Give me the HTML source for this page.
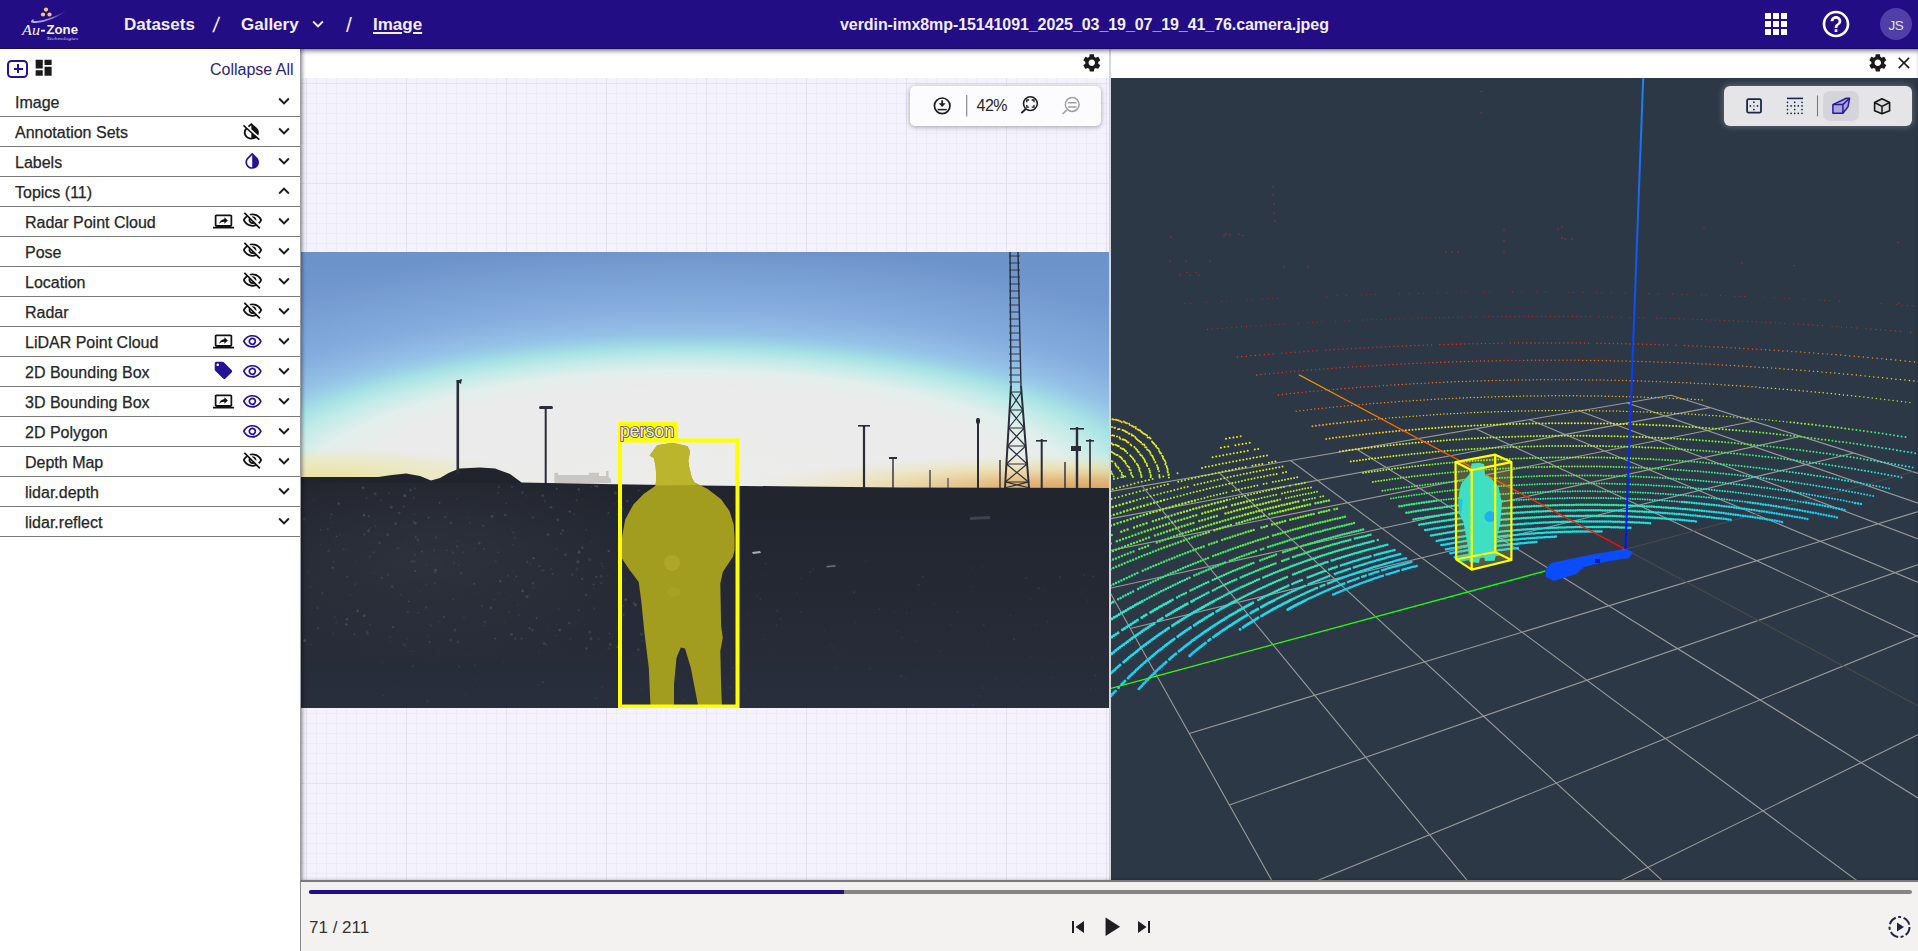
<!DOCTYPE html><html><head><meta charset="utf-8"><style>
*{box-sizing:border-box;margin:0;padding:0}
html,body{width:1918px;height:951px;overflow:hidden;background:#fff;font-family:"Liberation Sans",sans-serif;position:relative}
.abs{position:absolute}
#hdr{left:0;top:0;width:1918px;height:49px;background:#230d84;border-bottom:1px solid #1a0a58}
.bc{position:absolute;top:2px;height:48px;line-height:46px;color:#f1eefc;font-size:17px;font-weight:700;white-space:nowrap}
#side{left:0;top:49px;width:300px;height:902px;background:#fff}
.row{position:absolute;left:0;width:300px;height:30px;font-size:16px;line-height:30px;color:#262626;white-space:nowrap;-webkit-text-stroke:0.25px #262626}
.row .ln{position:absolute;left:0;top:30px;width:300px;height:1px;background:#7a7a7a}
.row span.t{position:absolute;left:15px;top:1.5px}
.row.sub span.t{left:25px}
#main{left:300px;top:49px;width:1618px;height:831px;background:#fff}
#grid{left:301px;top:78px;width:808px;height:802px;background-color:#f4f2fd;
 background-image:linear-gradient(#e3e0f0 1px,transparent 1px),linear-gradient(90deg,#e3e0f0 1px,transparent 1px),linear-gradient(#ecebf7 1px,transparent 1px),linear-gradient(90deg,#ecebf7 1px,transparent 1px);
 background-size:100px 100px,100px 100px,10px 10px,10px 10px;background-position:5px 5px,5px 5px,5px 5px,5px 5px}
#view3d{left:1111px;top:78px;width:807px;height:802px;background:#2c3845;overflow:hidden}
#divider{left:1109px;top:49px;width:2px;height:831px;background:#d3d6dc}
#shadowL{left:300px;top:49px;width:1618px;height:831px;box-shadow:inset 3px 0 4px -1px rgba(0,0,0,.45),inset 0 4px 5px -2px rgba(40,30,90,.5);pointer-events:none}
#foot{left:300px;top:880px;width:1618px;height:71px;background:#f3f2f0;border-top:2px solid #7b7b7b;border-left:1px solid #8a8a8a}
</style></head><body>
<div id="hdr" class="abs">
<div class="bc" style="left:124px">Datasets</div>
<div class="bc" style="left:213px;font-weight:400;font-size:21px;transform:skewX(-8deg)">/</div>
<div class="bc" style="left:241px">Gallery</div>
<div class="bc" style="left:346px;font-weight:400;font-size:21px">/</div>
<div class="bc" style="left:373px;text-decoration:underline;text-underline-offset:2px;text-decoration-thickness:2px">Image</div>
<svg class="abs" style="left:307px;top:13px" width="22" height="22" viewBox="0 0 24 24" preserveAspectRatio="none"><path fill="#f1eefc" d="M16.59 8.59L12 13.17 7.41 8.59 6 10l6 6 6-6z"/></svg>
<div class="bc" style="left:840px;top:2px;font-size:16px;letter-spacing:-0.07px">verdin-imx8mp-15141091_2025_03_19_07_19_41_76.camera.jpeg</div>
<div class="abs" style="left:1765px;top:13px;width:6px;height:6px;background:#fff"></div>
<div class="abs" style="left:1773px;top:13px;width:6px;height:6px;background:#fff"></div>
<div class="abs" style="left:1781px;top:13px;width:6px;height:6px;background:#fff"></div>
<div class="abs" style="left:1765px;top:21px;width:6px;height:6px;background:#fff"></div>
<div class="abs" style="left:1773px;top:21px;width:6px;height:6px;background:#fff"></div>
<div class="abs" style="left:1781px;top:21px;width:6px;height:6px;background:#fff"></div>
<div class="abs" style="left:1765px;top:29px;width:6px;height:6px;background:#fff"></div>
<div class="abs" style="left:1773px;top:29px;width:6px;height:6px;background:#fff"></div>
<div class="abs" style="left:1781px;top:29px;width:6px;height:6px;background:#fff"></div>
<svg class="abs" style="left:1820px;top:8px" width="32" height="32" viewBox="0 0 24 24" preserveAspectRatio="none"><path fill="#ffffff" d="M11 18h2v-2h-2v2zm1-16C6.48 2 2 6.48 2 12s4.48 10 10 10 10-4.48 10-10S17.52 2 12 2zm0 18c-4.41 0-8-3.59-8-8s3.59-8 8-8 8 3.59 8 8-3.59 8-8 8zm0-14c-2.21 0-4 1.79-4 4h2c0-1.1.9-2 2-2s2 .9 2 2c0 2-3 1.75-3 5h2c0-2.25 3-2.5 3-5 0-2.21-1.79-4-4-4z"/></svg>
<div class="abs" style="left:1880px;top:8px;width:32px;height:32px;border-radius:50%;background:#4f3fa6;color:#e6e2f6;font-size:13.5px;line-height:36px;text-align:center;letter-spacing:-0.3px">JS</div>
</div>
<svg class="abs" style="left:15px;top:2px" width="70" height="44" viewBox="15 2 70 44">
<defs><linearGradient id="sw" x1="0" y1="0" x2="1" y2="0"><stop offset="0" stop-color="#b8b0f0"/><stop offset="0.6" stop-color="#8c80d8"/><stop offset="1" stop-color="#5a4cc0" stop-opacity="0.3"/></linearGradient></defs>
<path d="M32.5 19.5 C30 21.5 30.5 23.2 36 23 C46 22.6 60 16 66.5 10.5 C60 14.5 46 20.5 37 21 C33.5 21.2 32.6 20.6 33.8 19 Z" fill="url(#sw)"/>
<circle cx="46" cy="9.6" r="2.1" fill="#f2cc6a"/><circle cx="43" cy="14.5" r="2.1" fill="#f2cc6a"/><circle cx="49.5" cy="14.5" r="2.1" fill="#f2cc6a"/>
<text x="22" y="34.9" font-family="Liberation Serif" font-style="italic" font-size="15" fill="#f4f2ff" textLength="18" lengthAdjust="spacingAndGlyphs">Au</text>
<rect x="41" y="29.8" width="4" height="1.8" fill="#f4f2ff"/>
<text x="46.5" y="34.4" font-family="Liberation Sans" font-weight="700" font-size="12.8" fill="#f4f2ff" textLength="31.5" lengthAdjust="spacingAndGlyphs">Zone</text>
<text x="46.5" y="40.4" font-family="Liberation Serif" font-style="italic" font-size="5" fill="#c8c2ee" textLength="31.5" lengthAdjust="spacingAndGlyphs">Technologies</text>
</svg>
<div id="side" class="abs">
</div>
<div class="abs" style="left:7px;top:60px;width:21px;height:17.5px;border:2px solid #24129a;border-radius:4.5px"></div>
<div class="abs" style="left:13.5px;top:67.5px;width:9px;height:2px;background:#24129a"></div>
<div class="abs" style="left:17px;top:64px;width:2px;height:9px;background:#24129a"></div>
<svg class="abs" style="left:33.3px;top:57.3px" width="21.3" height="21.3" viewBox="0 0 24 24" preserveAspectRatio="none"><path fill="#1a1a1a" d="M3 13h8V3H3v10zm0 8h8v-6H3v6zm10 0h8V11h-8v10zm0-18v6h8V3h-8z"/></svg>
<div class="abs" style="left:210px;top:58px;font-size:16px;color:#2d2478;line-height:24px;white-space:nowrap">Collapse All</div>
<div class="row" style="top:86px"><span class="t">Image</span><div class="ln"></div></div>
<svg class="abs" style="left:273px;top:90px" width="22" height="22" viewBox="0 0 24 24" preserveAspectRatio="none"><path fill="#1a1a1a" d="M16.59 8.59L12 13.17 7.41 8.59 6 10l6 6 6-6z"/></svg>
<div class="row" style="top:116px"><span class="t">Annotation Sets</span><div class="ln"></div></div>
<svg class="abs" style="left:273px;top:120px" width="22" height="22" viewBox="0 0 24 24" preserveAspectRatio="none"><path fill="#1a1a1a" d="M16.59 8.59L12 13.17 7.41 8.59 6 10l6 6 6-6z"/></svg>
<svg class="abs" style="left:240.4px;top:121px" width="22.7" height="20.5" viewBox="0 0 24 24" preserveAspectRatio="none"><path fill="#111" d="M20.65 20.87l-2.35-2.35-6.3-6.29-3.56-3.57-1.42-1.41L4.27 4.5 3 5.77l2.78 2.78c-2.55 3.14-2.36 7.76.56 10.69C7.9 20.8 9.95 21.58 12 21.58c1.79 0 3.57-.59 5.03-1.78l2.7 2.7L21 21.23l-.35-.36zM12 19.59c-1.6 0-3.11-.62-4.24-1.76C6.62 16.69 6 15.19 6 13.59c0-1.32.43-2.56 1.21-3.59L12 14.77v4.82zM12 5.1v4.58l7.25 7.26c1.37-2.96.84-6.57-1.6-9.01L12 2.27l-3.7 3.7 1.41 1.41L12 5.1z"/></svg>
<div class="row" style="top:146px"><span class="t">Labels</span><div class="ln"></div></div>
<svg class="abs" style="left:273px;top:150px" width="22" height="22" viewBox="0 0 24 24" preserveAspectRatio="none"><path fill="#1a1a1a" d="M16.59 8.59L12 13.17 7.41 8.59 6 10l6 6 6-6z"/></svg>
<svg class="abs" style="left:242.4px;top:150.5px" width="20.4" height="20.4" viewBox="0 0 24 24" preserveAspectRatio="none"><path fill="#24129a" d="M12 4.81V19c-3.31 0-6-2.63-6-5.87 0-1.56.62-3.03 1.75-4.14L12 4.81M6.35 7.56C4.9 8.99 4 10.96 4 13.13 4 17.48 7.58 21 12 21s8-3.52 8-7.87c0-2.17-.9-4.15-2.35-5.57L12 2 6.35 7.56z"/></svg>
<div class="row" style="top:176px"><span class="t">Topics (11)</span><div class="ln"></div></div>
<svg class="abs" style="left:273px;top:180px" width="22" height="22" viewBox="0 0 24 24" preserveAspectRatio="none"><path fill="#1a1a1a" d="M12 8l-6 6 1.41 1.41L12 10.83l4.59 4.58L18 14z"/></svg>
<div class="row sub" style="top:206px"><span class="t">Radar Point Cloud</span><div class="ln"></div></div>
<svg class="abs" style="left:273px;top:210px" width="22" height="22" viewBox="0 0 24 24" preserveAspectRatio="none"><path fill="#1a1a1a" d="M16.59 8.59L12 13.17 7.41 8.59 6 10l6 6 6-6z"/></svg>
<svg class="abs" style="left:213px;top:210.5px" width="21" height="21" viewBox="0 0 24 24" preserveAspectRatio="none"><path fill="#111" d="M20 18c1.1 0 1.99-.9 1.99-2L22 6c0-1.11-.9-2-2-2H4c-1.11 0-2 .89-2 2v10c0 1.1.89 2 2 2H0v2h24v-2h-4zM4 16V6h16v10.01L4 16zm9-6.87c-3.89.54-5.44 3.2-6 5.87 1.39-1.87 3.22-2.72 6-2.72v2.19l4-3.74L13 7v2.13z"/></svg>
<svg class="abs" style="left:242.3px;top:209.6px" width="21" height="21" viewBox="0 0 24 24" preserveAspectRatio="none"><path fill="#111" d="M12 6c3.79 0 7.17 2.13 8.82 5.5-.59 1.22-1.42 2.27-2.41 3.12l1.41 1.41c1.39-1.23 2.49-2.77 3.18-4.53C21.27 7.11 17 4 12 4c-1.27 0-2.49.2-3.64.57l1.65 1.65C10.66 6.09 11.32 6 12 6zm-1.07 1.14L13 9.21c.57.25 1.03.71 1.28 1.28l2.07 2.07c.08-.34.14-.7.14-1.07C16.5 9.01 14.48 7 12 7c-.37 0-.72.05-1.07.14zM2.01 3.87l2.68 2.68C3.06 7.83 1.78 9.53 1 11.5 2.73 15.89 7 19 12 19c1.52 0 2.98-.29 4.32-.82l3.42 3.42 1.41-1.41L3.42 2.45 2.01 3.87zm7.5 7.5l2.61 2.61c-.04.01-.08.02-.12.02-1.38 0-2.5-1.12-2.5-2.5 0-.05.01-.08.01-.13zm-3.4-3.4l1.75 1.75c-.23.55-.36 1.15-.36 1.78 0 2.48 2.02 4.5 4.5 4.5.63 0 1.23-.13 1.77-.36l.98.98c-.88.24-1.8.38-2.75.38-3.79 0-7.17-2.13-8.82-5.5.7-1.43 1.72-2.61 2.93-3.53z"/></svg>
<div class="row sub" style="top:236px"><span class="t">Pose</span><div class="ln"></div></div>
<svg class="abs" style="left:273px;top:240px" width="22" height="22" viewBox="0 0 24 24" preserveAspectRatio="none"><path fill="#1a1a1a" d="M16.59 8.59L12 13.17 7.41 8.59 6 10l6 6 6-6z"/></svg>
<svg class="abs" style="left:242.3px;top:239.6px" width="21" height="21" viewBox="0 0 24 24" preserveAspectRatio="none"><path fill="#111" d="M12 6c3.79 0 7.17 2.13 8.82 5.5-.59 1.22-1.42 2.27-2.41 3.12l1.41 1.41c1.39-1.23 2.49-2.77 3.18-4.53C21.27 7.11 17 4 12 4c-1.27 0-2.49.2-3.64.57l1.65 1.65C10.66 6.09 11.32 6 12 6zm-1.07 1.14L13 9.21c.57.25 1.03.71 1.28 1.28l2.07 2.07c.08-.34.14-.7.14-1.07C16.5 9.01 14.48 7 12 7c-.37 0-.72.05-1.07.14zM2.01 3.87l2.68 2.68C3.06 7.83 1.78 9.53 1 11.5 2.73 15.89 7 19 12 19c1.52 0 2.98-.29 4.32-.82l3.42 3.42 1.41-1.41L3.42 2.45 2.01 3.87zm7.5 7.5l2.61 2.61c-.04.01-.08.02-.12.02-1.38 0-2.5-1.12-2.5-2.5 0-.05.01-.08.01-.13zm-3.4-3.4l1.75 1.75c-.23.55-.36 1.15-.36 1.78 0 2.48 2.02 4.5 4.5 4.5.63 0 1.23-.13 1.77-.36l.98.98c-.88.24-1.8.38-2.75.38-3.79 0-7.17-2.13-8.82-5.5.7-1.43 1.72-2.61 2.93-3.53z"/></svg>
<div class="row sub" style="top:266px"><span class="t">Location</span><div class="ln"></div></div>
<svg class="abs" style="left:273px;top:270px" width="22" height="22" viewBox="0 0 24 24" preserveAspectRatio="none"><path fill="#1a1a1a" d="M16.59 8.59L12 13.17 7.41 8.59 6 10l6 6 6-6z"/></svg>
<svg class="abs" style="left:242.3px;top:269.6px" width="21" height="21" viewBox="0 0 24 24" preserveAspectRatio="none"><path fill="#111" d="M12 6c3.79 0 7.17 2.13 8.82 5.5-.59 1.22-1.42 2.27-2.41 3.12l1.41 1.41c1.39-1.23 2.49-2.77 3.18-4.53C21.27 7.11 17 4 12 4c-1.27 0-2.49.2-3.64.57l1.65 1.65C10.66 6.09 11.32 6 12 6zm-1.07 1.14L13 9.21c.57.25 1.03.71 1.28 1.28l2.07 2.07c.08-.34.14-.7.14-1.07C16.5 9.01 14.48 7 12 7c-.37 0-.72.05-1.07.14zM2.01 3.87l2.68 2.68C3.06 7.83 1.78 9.53 1 11.5 2.73 15.89 7 19 12 19c1.52 0 2.98-.29 4.32-.82l3.42 3.42 1.41-1.41L3.42 2.45 2.01 3.87zm7.5 7.5l2.61 2.61c-.04.01-.08.02-.12.02-1.38 0-2.5-1.12-2.5-2.5 0-.05.01-.08.01-.13zm-3.4-3.4l1.75 1.75c-.23.55-.36 1.15-.36 1.78 0 2.48 2.02 4.5 4.5 4.5.63 0 1.23-.13 1.77-.36l.98.98c-.88.24-1.8.38-2.75.38-3.79 0-7.17-2.13-8.82-5.5.7-1.43 1.72-2.61 2.93-3.53z"/></svg>
<div class="row sub" style="top:296px"><span class="t">Radar</span><div class="ln"></div></div>
<svg class="abs" style="left:273px;top:300px" width="22" height="22" viewBox="0 0 24 24" preserveAspectRatio="none"><path fill="#1a1a1a" d="M16.59 8.59L12 13.17 7.41 8.59 6 10l6 6 6-6z"/></svg>
<svg class="abs" style="left:242.3px;top:299.6px" width="21" height="21" viewBox="0 0 24 24" preserveAspectRatio="none"><path fill="#111" d="M12 6c3.79 0 7.17 2.13 8.82 5.5-.59 1.22-1.42 2.27-2.41 3.12l1.41 1.41c1.39-1.23 2.49-2.77 3.18-4.53C21.27 7.11 17 4 12 4c-1.27 0-2.49.2-3.64.57l1.65 1.65C10.66 6.09 11.32 6 12 6zm-1.07 1.14L13 9.21c.57.25 1.03.71 1.28 1.28l2.07 2.07c.08-.34.14-.7.14-1.07C16.5 9.01 14.48 7 12 7c-.37 0-.72.05-1.07.14zM2.01 3.87l2.68 2.68C3.06 7.83 1.78 9.53 1 11.5 2.73 15.89 7 19 12 19c1.52 0 2.98-.29 4.32-.82l3.42 3.42 1.41-1.41L3.42 2.45 2.01 3.87zm7.5 7.5l2.61 2.61c-.04.01-.08.02-.12.02-1.38 0-2.5-1.12-2.5-2.5 0-.05.01-.08.01-.13zm-3.4-3.4l1.75 1.75c-.23.55-.36 1.15-.36 1.78 0 2.48 2.02 4.5 4.5 4.5.63 0 1.23-.13 1.77-.36l.98.98c-.88.24-1.8.38-2.75.38-3.79 0-7.17-2.13-8.82-5.5.7-1.43 1.72-2.61 2.93-3.53z"/></svg>
<div class="row sub" style="top:326px"><span class="t">LiDAR Point Cloud</span><div class="ln"></div></div>
<svg class="abs" style="left:273px;top:330px" width="22" height="22" viewBox="0 0 24 24" preserveAspectRatio="none"><path fill="#1a1a1a" d="M16.59 8.59L12 13.17 7.41 8.59 6 10l6 6 6-6z"/></svg>
<svg class="abs" style="left:213px;top:330.5px" width="21" height="21" viewBox="0 0 24 24" preserveAspectRatio="none"><path fill="#111" d="M20 18c1.1 0 1.99-.9 1.99-2L22 6c0-1.11-.9-2-2-2H4c-1.11 0-2 .89-2 2v10c0 1.1.89 2 2 2H0v2h24v-2h-4zM4 16V6h16v10.01L4 16zm9-6.87c-3.89.54-5.44 3.2-6 5.87 1.39-1.87 3.22-2.72 6-2.72v2.19l4-3.74L13 7v2.13z"/></svg>
<svg class="abs" style="left:242.3px;top:330.6px" width="20.7" height="20.7" viewBox="0 0 24 24" preserveAspectRatio="none"><path fill="#24129a" d="M12 6.5c3.79 0 7.17 2.13 8.82 5.5-1.65 3.37-5.02 5.5-8.82 5.5S4.83 15.37 3.18 12C4.83 8.63 8.21 6.5 12 6.5m0-2C7 4.5 2.73 7.61 1 12c1.73 4.39 6 7.5 11 7.5s9.27-3.11 11-7.5c-1.73-4.39-6-7.5-11-7.5zm0 5c1.38 0 2.5 1.12 2.5 2.5s-1.12 2.5-2.5 2.5-2.5-1.12-2.5-2.5 1.12-2.5 2.5-2.5m0-2c-2.48 0-4.5 2.02-4.5 4.5s2.02 4.5 4.5 4.5 4.5-2.02 4.5-4.5-2.02-4.5-4.5-4.5z"/></svg>
<div class="row sub" style="top:356px"><span class="t">2D Bounding Box</span><div class="ln"></div></div>
<svg class="abs" style="left:273px;top:360px" width="22" height="22" viewBox="0 0 24 24" preserveAspectRatio="none"><path fill="#1a1a1a" d="M16.59 8.59L12 13.17 7.41 8.59 6 10l6 6 6-6z"/></svg>
<svg class="abs" style="left:213.1px;top:360.3px" width="20.8" height="20.8" viewBox="0 0 24 24" preserveAspectRatio="none"><path fill="#24129a" d="M21.41 11.58l-9-9C12.05 2.22 11.55 2 11 2H4c-1.1 0-2 .9-2 2v7c0 .55.22 1.05.59 1.42l9 9c.36.36.86.58 1.41.58.55 0 1.05-.22 1.41-.59l7-7c.37-.36.59-.86.59-1.41 0-.55-.23-1.06-.59-1.42zM5.5 7C4.67 7 4 6.33 4 5.5S4.67 4 5.5 4 7 4.67 7 5.5 6.33 7 5.5 7z"/></svg>
<svg class="abs" style="left:242.3px;top:360.6px" width="20.7" height="20.7" viewBox="0 0 24 24" preserveAspectRatio="none"><path fill="#24129a" d="M12 6.5c3.79 0 7.17 2.13 8.82 5.5-1.65 3.37-5.02 5.5-8.82 5.5S4.83 15.37 3.18 12C4.83 8.63 8.21 6.5 12 6.5m0-2C7 4.5 2.73 7.61 1 12c1.73 4.39 6 7.5 11 7.5s9.27-3.11 11-7.5c-1.73-4.39-6-7.5-11-7.5zm0 5c1.38 0 2.5 1.12 2.5 2.5s-1.12 2.5-2.5 2.5-2.5-1.12-2.5-2.5 1.12-2.5 2.5-2.5m0-2c-2.48 0-4.5 2.02-4.5 4.5s2.02 4.5 4.5 4.5 4.5-2.02 4.5-4.5-2.02-4.5-4.5-4.5z"/></svg>
<div class="row sub" style="top:386px"><span class="t">3D Bounding Box</span><div class="ln"></div></div>
<svg class="abs" style="left:273px;top:390px" width="22" height="22" viewBox="0 0 24 24" preserveAspectRatio="none"><path fill="#1a1a1a" d="M16.59 8.59L12 13.17 7.41 8.59 6 10l6 6 6-6z"/></svg>
<svg class="abs" style="left:213px;top:390.5px" width="21" height="21" viewBox="0 0 24 24" preserveAspectRatio="none"><path fill="#111" d="M20 18c1.1 0 1.99-.9 1.99-2L22 6c0-1.11-.9-2-2-2H4c-1.11 0-2 .89-2 2v10c0 1.1.89 2 2 2H0v2h24v-2h-4zM4 16V6h16v10.01L4 16zm9-6.87c-3.89.54-5.44 3.2-6 5.87 1.39-1.87 3.22-2.72 6-2.72v2.19l4-3.74L13 7v2.13z"/></svg>
<svg class="abs" style="left:242.3px;top:390.6px" width="20.7" height="20.7" viewBox="0 0 24 24" preserveAspectRatio="none"><path fill="#24129a" d="M12 6.5c3.79 0 7.17 2.13 8.82 5.5-1.65 3.37-5.02 5.5-8.82 5.5S4.83 15.37 3.18 12C4.83 8.63 8.21 6.5 12 6.5m0-2C7 4.5 2.73 7.61 1 12c1.73 4.39 6 7.5 11 7.5s9.27-3.11 11-7.5c-1.73-4.39-6-7.5-11-7.5zm0 5c1.38 0 2.5 1.12 2.5 2.5s-1.12 2.5-2.5 2.5-2.5-1.12-2.5-2.5 1.12-2.5 2.5-2.5m0-2c-2.48 0-4.5 2.02-4.5 4.5s2.02 4.5 4.5 4.5 4.5-2.02 4.5-4.5-2.02-4.5-4.5-4.5z"/></svg>
<div class="row sub" style="top:416px"><span class="t">2D Polygon</span><div class="ln"></div></div>
<svg class="abs" style="left:273px;top:420px" width="22" height="22" viewBox="0 0 24 24" preserveAspectRatio="none"><path fill="#1a1a1a" d="M16.59 8.59L12 13.17 7.41 8.59 6 10l6 6 6-6z"/></svg>
<svg class="abs" style="left:242.3px;top:420.6px" width="20.7" height="20.7" viewBox="0 0 24 24" preserveAspectRatio="none"><path fill="#24129a" d="M12 6.5c3.79 0 7.17 2.13 8.82 5.5-1.65 3.37-5.02 5.5-8.82 5.5S4.83 15.37 3.18 12C4.83 8.63 8.21 6.5 12 6.5m0-2C7 4.5 2.73 7.61 1 12c1.73 4.39 6 7.5 11 7.5s9.27-3.11 11-7.5c-1.73-4.39-6-7.5-11-7.5zm0 5c1.38 0 2.5 1.12 2.5 2.5s-1.12 2.5-2.5 2.5-2.5-1.12-2.5-2.5 1.12-2.5 2.5-2.5m0-2c-2.48 0-4.5 2.02-4.5 4.5s2.02 4.5 4.5 4.5 4.5-2.02 4.5-4.5-2.02-4.5-4.5-4.5z"/></svg>
<div class="row sub" style="top:446px"><span class="t">Depth Map</span><div class="ln"></div></div>
<svg class="abs" style="left:273px;top:450px" width="22" height="22" viewBox="0 0 24 24" preserveAspectRatio="none"><path fill="#1a1a1a" d="M16.59 8.59L12 13.17 7.41 8.59 6 10l6 6 6-6z"/></svg>
<svg class="abs" style="left:242.3px;top:449.6px" width="21" height="21" viewBox="0 0 24 24" preserveAspectRatio="none"><path fill="#111" d="M12 6c3.79 0 7.17 2.13 8.82 5.5-.59 1.22-1.42 2.27-2.41 3.12l1.41 1.41c1.39-1.23 2.49-2.77 3.18-4.53C21.27 7.11 17 4 12 4c-1.27 0-2.49.2-3.64.57l1.65 1.65C10.66 6.09 11.32 6 12 6zm-1.07 1.14L13 9.21c.57.25 1.03.71 1.28 1.28l2.07 2.07c.08-.34.14-.7.14-1.07C16.5 9.01 14.48 7 12 7c-.37 0-.72.05-1.07.14zM2.01 3.87l2.68 2.68C3.06 7.83 1.78 9.53 1 11.5 2.73 15.89 7 19 12 19c1.52 0 2.98-.29 4.32-.82l3.42 3.42 1.41-1.41L3.42 2.45 2.01 3.87zm7.5 7.5l2.61 2.61c-.04.01-.08.02-.12.02-1.38 0-2.5-1.12-2.5-2.5 0-.05.01-.08.01-.13zm-3.4-3.4l1.75 1.75c-.23.55-.36 1.15-.36 1.78 0 2.48 2.02 4.5 4.5 4.5.63 0 1.23-.13 1.77-.36l.98.98c-.88.24-1.8.38-2.75.38-3.79 0-7.17-2.13-8.82-5.5.7-1.43 1.72-2.61 2.93-3.53z"/></svg>
<div class="row sub" style="top:476px"><span class="t">lidar.depth</span><div class="ln"></div></div>
<svg class="abs" style="left:273px;top:480px" width="22" height="22" viewBox="0 0 24 24" preserveAspectRatio="none"><path fill="#1a1a1a" d="M16.59 8.59L12 13.17 7.41 8.59 6 10l6 6 6-6z"/></svg>
<div class="row sub" style="top:506px"><span class="t">lidar.reflect</span><div class="ln"></div></div>
<svg class="abs" style="left:273px;top:510px" width="22" height="22" viewBox="0 0 24 24" preserveAspectRatio="none"><path fill="#1a1a1a" d="M16.59 8.59L12 13.17 7.41 8.59 6 10l6 6 6-6z"/></svg>
<div id="main" class="abs"></div>
<div id="grid" class="abs"></div>
<div id="view3d" class="abs"></div>
<div id="divider" class="abs"></div>
<svg class="abs" style="left:301px;top:252px" width="808" height="456" viewBox="301 252 808 456"><defs>
<linearGradient id="sky" x1="0" y1="0" x2="0" y2="1" gradientUnits="objectBoundingBox">
 <stop offset="0" stop-color="#6c92ca"/><stop offset="0.3" stop-color="#7ba3d8"/><stop offset="0.6" stop-color="#8db6e6"/><stop offset="1" stop-color="#a0c6ea"/>
</linearGradient>
<radialGradient id="glow2" cx="688" cy="492" r="1" gradientUnits="userSpaceOnUse" gradientTransform="translate(688 492) scale(640 250) translate(-688 -492)">
 <stop offset="0" stop-color="#9cc6ee" stop-opacity="0.9"/><stop offset="0.7" stop-color="#94bce8" stop-opacity="0.7"/><stop offset="1" stop-color="#90b6e4" stop-opacity="0"/>
</radialGradient>
<radialGradient id="glow" cx="688" cy="500" r="1" gradientUnits="userSpaceOnUse" gradientTransform="translate(688 500) scale(585 190) translate(-688 -500)">
 <stop offset="0" stop-color="#ececeb"/><stop offset="0.6" stop-color="#eaebea"/><stop offset="0.68" stop-color="#e2efec"/>
 <stop offset="0.75" stop-color="#c0ebe8"/><stop offset="0.80" stop-color="#a8e4e4" stop-opacity="0.95"/><stop offset="0.88" stop-color="#9cd0ea" stop-opacity="0.5"/><stop offset="1" stop-color="#94bfe8" stop-opacity="0"/>
</radialGradient>
<radialGradient id="yl" cx="320" cy="478" r="1" gradientUnits="userSpaceOnUse" gradientTransform="translate(320 478) scale(200 30) translate(-320 -478)">
 <stop offset="0" stop-color="#ebe395" stop-opacity="0.95"/><stop offset="0.6" stop-color="#ece7b0" stop-opacity="0.6"/><stop offset="1" stop-color="#ece7b0" stop-opacity="0"/>
</radialGradient>
<radialGradient id="orr" cx="1080" cy="490" r="1" gradientUnits="userSpaceOnUse" gradientTransform="translate(1080 490) scale(340 36) translate(-1080 -490)">
 <stop offset="0" stop-color="#dc9a50" stop-opacity="0.95"/><stop offset="0.3" stop-color="#e4b26a" stop-opacity="0.85"/><stop offset="0.65" stop-color="#ecdc9c" stop-opacity="0.6"/><stop offset="1" stop-color="#eee8c0" stop-opacity="0"/>
</radialGradient>
<linearGradient id="gnd" x1="0" y1="0" x2="0" y2="1">
 <stop offset="0" stop-color="#20232c"/><stop offset="0.35" stop-color="#232731"/><stop offset="1" stop-color="#292e3c"/>
</linearGradient>
</defs><rect x="301" y="252" width="808" height="456" fill="url(#sky)"/><rect x="301" y="252" width="808" height="456" fill="url(#glow2)"/><rect x="301" y="252" width="808" height="456" fill="url(#glow)"/><rect x="301" y="440" width="808" height="60" fill="url(#yl)"/><rect x="700" y="440" width="409" height="60" fill="url(#orr)"/><path d="M301,477 L378,477 L392,475 L406,473.5 L420,476 L431,480.5 L440,478 L449,472.8 L459.5,468.4 L480,467.5 L495,468.4 L510,474 L521.6,482.5 L615,484.3 L700,485.5 L800,486.5 L900,487.5 L1000,487.8 L1109,488 L1109,708 L301,708 Z" fill="url(#gnd)"/><defs><radialGradient id="pile" cx="430" cy="560" r="1" gradientUnits="userSpaceOnUse" gradientTransform="translate(430 560) scale(260 110) translate(-430 -560)"><stop offset="0" stop-color="#30343f" stop-opacity="0.8"/><stop offset="1" stop-color="#30343f" stop-opacity="0"/></radialGradient></defs><rect x="301" y="483" width="400" height="190" fill="url(#pile)"/><circle cx="388.0" cy="574.8" r="1.0" fill="#4a505e" opacity="0.60"/><circle cx="526.4" cy="495.8" r="0.6" fill="#4a505e" opacity="0.72"/><circle cx="395.6" cy="523.7" r="1.6" fill="#4a505e" opacity="0.54"/><circle cx="601.6" cy="563.6" r="1.2" fill="#4a505e" opacity="0.38"/><circle cx="529.6" cy="628.2" r="1.1" fill="#4a505e" opacity="0.67"/><circle cx="542.7" cy="495.6" r="1.4" fill="#4a505e" opacity="0.60"/><circle cx="410.6" cy="490.1" r="1.5" fill="#4a505e" opacity="0.54"/><circle cx="559.6" cy="630.0" r="1.3" fill="#4a505e" opacity="0.76"/><circle cx="444.0" cy="617.1" r="1.0" fill="#4a505e" opacity="0.77"/><circle cx="616.8" cy="501.1" r="0.7" fill="#4a505e" opacity="0.41"/><circle cx="647.7" cy="557.0" r="1.2" fill="#4a505e" opacity="0.45"/><circle cx="484.1" cy="548.7" r="1.0" fill="#4a505e" opacity="0.59"/><circle cx="511.6" cy="634.2" r="1.3" fill="#4a505e" opacity="0.76"/><circle cx="608.7" cy="648.5" r="1.3" fill="#4a505e" opacity="0.38"/><circle cx="610.2" cy="644.2" r="1.5" fill="#4a505e" opacity="0.58"/><circle cx="557.8" cy="519.8" r="1.4" fill="#4a505e" opacity="0.59"/><circle cx="404.7" cy="495.5" r="1.5" fill="#4a505e" opacity="0.79"/><circle cx="334.6" cy="617.1" r="1.0" fill="#4a505e" opacity="0.38"/><circle cx="407.9" cy="611.9" r="1.5" fill="#4a505e" opacity="0.32"/><circle cx="522.4" cy="492.4" r="1.3" fill="#4a505e" opacity="0.47"/><circle cx="617.5" cy="646.8" r="1.1" fill="#4a505e" opacity="0.80"/><circle cx="413.6" cy="497.7" r="1.2" fill="#4a505e" opacity="0.32"/><circle cx="373.5" cy="552.3" r="1.2" fill="#4a505e" opacity="0.38"/><circle cx="318.1" cy="628.2" r="0.9" fill="#4a505e" opacity="0.78"/><circle cx="623.1" cy="547.3" r="1.1" fill="#4a505e" opacity="0.56"/><circle cx="532.9" cy="583.3" r="1.2" fill="#4a505e" opacity="0.61"/><circle cx="638.8" cy="568.7" r="1.0" fill="#4a505e" opacity="0.66"/><circle cx="387.8" cy="534.7" r="1.6" fill="#4a505e" opacity="0.56"/><circle cx="498.8" cy="486.9" r="1.0" fill="#4a505e" opacity="0.59"/><circle cx="310.2" cy="586.6" r="1.2" fill="#4a505e" opacity="0.33"/><circle cx="527.0" cy="561.9" r="1.3" fill="#4a505e" opacity="0.48"/><circle cx="555.4" cy="606.8" r="0.6" fill="#4a505e" opacity="0.33"/><circle cx="544.3" cy="643.9" r="0.9" fill="#4a505e" opacity="0.53"/><circle cx="514.6" cy="537.8" r="1.0" fill="#4a505e" opacity="0.46"/><circle cx="434.8" cy="583.3" r="0.9" fill="#4a505e" opacity="0.49"/><circle cx="578.7" cy="489.4" r="1.2" fill="#4a505e" opacity="0.67"/><circle cx="413.7" cy="521.7" r="1.4" fill="#4a505e" opacity="0.42"/><circle cx="369.9" cy="556.8" r="1.3" fill="#4a505e" opacity="0.35"/><circle cx="417.9" cy="540.1" r="1.4" fill="#4a505e" opacity="0.52"/><circle cx="608.4" cy="512.9" r="0.9" fill="#4a505e" opacity="0.63"/><circle cx="618.9" cy="559.4" r="0.8" fill="#4a505e" opacity="0.36"/><circle cx="492.1" cy="516.5" r="1.4" fill="#4a505e" opacity="0.72"/><circle cx="368.5" cy="531.0" r="1.4" fill="#4a505e" opacity="0.62"/><circle cx="590.8" cy="542.0" r="0.7" fill="#4a505e" opacity="0.45"/><circle cx="586.4" cy="529.7" r="0.9" fill="#4a505e" opacity="0.51"/><circle cx="452.9" cy="552.6" r="1.5" fill="#4a505e" opacity="0.38"/><circle cx="304.7" cy="640.6" r="1.5" fill="#4a505e" opacity="0.79"/><circle cx="458.1" cy="641.8" r="1.5" fill="#4a505e" opacity="0.41"/><circle cx="569.2" cy="623.1" r="1.3" fill="#4a505e" opacity="0.56"/><circle cx="406.2" cy="541.3" r="0.8" fill="#4a505e" opacity="0.33"/><circle cx="513.2" cy="532.4" r="1.4" fill="#4a505e" opacity="0.32"/><circle cx="625.6" cy="599.5" r="1.5" fill="#4a505e" opacity="0.75"/><circle cx="624.2" cy="580.2" r="0.6" fill="#4a505e" opacity="0.67"/><circle cx="364.3" cy="534.5" r="1.3" fill="#4a505e" opacity="0.56"/><circle cx="450.7" cy="639.9" r="1.2" fill="#4a505e" opacity="0.47"/><circle cx="393.1" cy="627.2" r="1.1" fill="#4a505e" opacity="0.69"/><circle cx="428.6" cy="517.6" r="1.1" fill="#4a505e" opacity="0.71"/><circle cx="364.2" cy="615.6" r="1.5" fill="#4a505e" opacity="0.70"/><circle cx="597.0" cy="486.2" r="1.2" fill="#4a505e" opacity="0.73"/><circle cx="320.8" cy="529.8" r="0.9" fill="#4a505e" opacity="0.56"/><circle cx="454.0" cy="563.0" r="1.4" fill="#4a505e" opacity="0.30"/><circle cx="322.6" cy="505.9" r="0.7" fill="#4a505e" opacity="0.33"/><circle cx="651.0" cy="626.0" r="0.7" fill="#4a505e" opacity="0.55"/><circle cx="415.8" cy="536.9" r="1.0" fill="#4a505e" opacity="0.62"/><circle cx="512.4" cy="544.5" r="0.8" fill="#4a505e" opacity="0.46"/><circle cx="347.2" cy="576.7" r="1.3" fill="#4a505e" opacity="0.49"/><circle cx="331.5" cy="514.5" r="1.0" fill="#4a505e" opacity="0.60"/><circle cx="582.4" cy="547.7" r="1.4" fill="#4a505e" opacity="0.61"/><circle cx="457.1" cy="546.4" r="1.1" fill="#4a505e" opacity="0.65"/><circle cx="453.1" cy="599.5" r="1.1" fill="#4a505e" opacity="0.42"/><circle cx="494.3" cy="599.7" r="0.7" fill="#4a505e" opacity="0.51"/><circle cx="455.0" cy="630.1" r="1.5" fill="#4a505e" opacity="0.49"/><circle cx="623.5" cy="615.5" r="0.9" fill="#4a505e" opacity="0.53"/><circle cx="347.0" cy="619.2" r="1.3" fill="#4a505e" opacity="0.74"/><circle cx="585.9" cy="595.1" r="1.3" fill="#4a505e" opacity="0.58"/><circle cx="339.8" cy="582.0" r="0.6" fill="#4a505e" opacity="0.37"/><circle cx="579.4" cy="492.3" r="0.7" fill="#4a505e" opacity="0.35"/><circle cx="617.3" cy="514.6" r="0.6" fill="#4a505e" opacity="0.72"/><circle cx="346.3" cy="624.3" r="1.3" fill="#4a505e" opacity="0.72"/><circle cx="643.0" cy="580.5" r="1.4" fill="#4a505e" opacity="0.32"/><circle cx="577.0" cy="569.4" r="1.3" fill="#4a505e" opacity="0.35"/><circle cx="570.4" cy="639.2" r="0.7" fill="#4a505e" opacity="0.46"/><circle cx="504.3" cy="621.6" r="0.8" fill="#4a505e" opacity="0.39"/><circle cx="392.2" cy="586.6" r="1.4" fill="#4a505e" opacity="0.50"/><circle cx="434.2" cy="550.4" r="1.0" fill="#4a505e" opacity="0.51"/><circle cx="332.7" cy="567.6" r="1.6" fill="#4a505e" opacity="0.51"/><circle cx="569.8" cy="511.5" r="1.3" fill="#4a505e" opacity="0.68"/><circle cx="543.6" cy="570.3" r="1.1" fill="#4a505e" opacity="0.62"/><circle cx="623.4" cy="509.6" r="0.7" fill="#4a505e" opacity="0.67"/><circle cx="630.2" cy="570.3" r="1.0" fill="#4a505e" opacity="0.66"/><circle cx="369.4" cy="529.1" r="0.8" fill="#4a505e" opacity="0.59"/><circle cx="415.4" cy="523.3" r="1.3" fill="#4a505e" opacity="0.78"/><circle cx="408.6" cy="601.4" r="1.0" fill="#4a505e" opacity="0.73"/><circle cx="511.7" cy="529.1" r="0.8" fill="#4a505e" opacity="0.31"/><circle cx="474.2" cy="548.2" r="0.8" fill="#4a505e" opacity="0.48"/><circle cx="418.0" cy="612.7" r="0.7" fill="#4a505e" opacity="0.80"/><circle cx="474.2" cy="583.8" r="1.1" fill="#4a505e" opacity="0.72"/><circle cx="596.3" cy="576.9" r="1.1" fill="#4a505e" opacity="0.66"/><circle cx="608.8" cy="551.0" r="1.3" fill="#4a505e" opacity="0.78"/><circle cx="469.9" cy="522.9" r="0.8" fill="#4a505e" opacity="0.66"/><circle cx="544.1" cy="643.2" r="1.5" fill="#4a505e" opacity="0.42"/><circle cx="370.7" cy="527.7" r="0.8" fill="#4a505e" opacity="0.65"/><circle cx="609.5" cy="633.5" r="0.9" fill="#4a505e" opacity="0.73"/><circle cx="414.9" cy="554.8" r="1.3" fill="#4a505e" opacity="0.34"/><circle cx="336.1" cy="622.6" r="0.9" fill="#4a505e" opacity="0.48"/><circle cx="510.2" cy="596.5" r="0.6" fill="#4a505e" opacity="0.47"/><circle cx="458.7" cy="565.2" r="0.8" fill="#4a505e" opacity="0.59"/><circle cx="644.1" cy="549.5" r="1.1" fill="#4a505e" opacity="0.36"/><circle cx="401.1" cy="594.8" r="0.7" fill="#4a505e" opacity="0.74"/><circle cx="627.4" cy="501.0" r="1.5" fill="#4a505e" opacity="0.49"/><circle cx="578.8" cy="610.0" r="0.9" fill="#4a505e" opacity="0.64"/><circle cx="536.5" cy="618.0" r="0.9" fill="#4a505e" opacity="0.68"/><circle cx="646.2" cy="596.0" r="1.1" fill="#4a505e" opacity="0.36"/><circle cx="479.3" cy="543.1" r="1.3" fill="#4a505e" opacity="0.64"/><circle cx="505.2" cy="515.0" r="1.2" fill="#4a505e" opacity="0.62"/><circle cx="366.9" cy="631.8" r="1.3" fill="#4a505e" opacity="0.36"/><circle cx="635.7" cy="508.3" r="0.9" fill="#4a505e" opacity="0.66"/><circle cx="516.3" cy="576.6" r="1.2" fill="#4a505e" opacity="0.53"/><circle cx="414.5" cy="514.1" r="0.7" fill="#4a505e" opacity="0.66"/><circle cx="572.3" cy="574.6" r="1.3" fill="#4a505e" opacity="0.48"/><circle cx="397.9" cy="548.3" r="1.5" fill="#4a505e" opacity="0.32"/><circle cx="483.2" cy="525.8" r="1.4" fill="#4a505e" opacity="0.48"/><circle cx="421.8" cy="551.6" r="1.1" fill="#4a505e" opacity="0.69"/><circle cx="429.0" cy="624.7" r="0.7" fill="#4a505e" opacity="0.44"/><circle cx="338.6" cy="503.6" r="1.4" fill="#4a505e" opacity="0.66"/><circle cx="369.0" cy="516.2" r="1.0" fill="#4a505e" opacity="0.67"/><circle cx="594.2" cy="608.5" r="1.2" fill="#4a505e" opacity="0.37"/><circle cx="445.2" cy="517.0" r="1.1" fill="#4a505e" opacity="0.58"/><circle cx="375.1" cy="526.3" r="1.4" fill="#4a505e" opacity="0.32"/><circle cx="589.7" cy="632.0" r="1.5" fill="#4a505e" opacity="0.49"/><circle cx="500.3" cy="581.2" r="1.2" fill="#4a505e" opacity="0.79"/><circle cx="548.1" cy="534.4" r="1.5" fill="#4a505e" opacity="0.54"/><circle cx="517.7" cy="604.9" r="0.6" fill="#4a505e" opacity="0.69"/><circle cx="539.3" cy="566.2" r="1.1" fill="#4a505e" opacity="0.53"/><circle cx="372.1" cy="572.4" r="0.6" fill="#4a505e" opacity="0.55"/><circle cx="533.6" cy="558.3" r="1.2" fill="#4a505e" opacity="0.78"/><circle cx="621.5" cy="507.4" r="1.4" fill="#4a505e" opacity="0.61"/><circle cx="321.1" cy="544.4" r="0.8" fill="#4a505e" opacity="0.34"/><circle cx="495.4" cy="638.4" r="0.9" fill="#4a505e" opacity="0.74"/><circle cx="551.0" cy="507.2" r="1.5" fill="#4a505e" opacity="0.60"/><circle cx="633.9" cy="603.1" r="1.3" fill="#4a505e" opacity="0.47"/><circle cx="591.0" cy="638.7" r="1.5" fill="#4a505e" opacity="0.52"/><circle cx="573.2" cy="565.0" r="0.7" fill="#4a505e" opacity="0.32"/><circle cx="330.8" cy="518.0" r="0.8" fill="#4a505e" opacity="0.55"/><circle cx="552.6" cy="573.7" r="1.0" fill="#4a505e" opacity="0.62"/><circle cx="411.8" cy="561.6" r="1.4" fill="#4a505e" opacity="0.50"/><circle cx="367.5" cy="633.4" r="1.3" fill="#4a505e" opacity="0.48"/><circle cx="435.4" cy="572.3" r="1.2" fill="#4a505e" opacity="0.41"/><circle cx="304.0" cy="519.5" r="1.4" fill="#4a505e" opacity="0.37"/><circle cx="467.2" cy="517.2" r="0.8" fill="#4a505e" opacity="0.39"/><circle cx="447.1" cy="512.8" r="0.6" fill="#4a505e" opacity="0.36"/><circle cx="363.1" cy="565.9" r="0.7" fill="#4a505e" opacity="0.31"/><circle cx="462.9" cy="552.3" r="1.3" fill="#4a505e" opacity="0.33"/><circle cx="447.0" cy="550.4" r="0.6" fill="#4a505e" opacity="0.78"/><circle cx="381.2" cy="500.6" r="1.1" fill="#4a505e" opacity="0.38"/><circle cx="525.2" cy="542.1" r="0.7" fill="#4a505e" opacity="0.33"/><circle cx="562.8" cy="530.4" r="1.4" fill="#4a505e" opacity="0.53"/><circle cx="636.1" cy="534.6" r="0.8" fill="#4a505e" opacity="0.43"/><circle cx="593.8" cy="588.8" r="0.9" fill="#4a505e" opacity="0.35"/><circle cx="546.6" cy="644.9" r="1.2" fill="#4a505e" opacity="0.30"/><circle cx="313.8" cy="499.9" r="0.8" fill="#4a505e" opacity="0.32"/><circle cx="322.3" cy="593.0" r="1.5" fill="#4a505e" opacity="0.40"/><circle cx="650.7" cy="563.7" r="1.4" fill="#4a505e" opacity="0.76"/><circle cx="638.6" cy="490.6" r="0.9" fill="#4a505e" opacity="0.60"/><circle cx="640.9" cy="499.5" r="0.9" fill="#4a505e" opacity="0.72"/><circle cx="343.9" cy="549.3" r="0.9" fill="#4a505e" opacity="0.64"/><circle cx="634.5" cy="513.8" r="1.3" fill="#4a505e" opacity="0.67"/><circle cx="601.3" cy="576.3" r="1.5" fill="#4a505e" opacity="0.48"/><circle cx="451.1" cy="522.9" r="1.4" fill="#4a505e" opacity="0.54"/><circle cx="399.2" cy="513.0" r="1.3" fill="#4a505e" opacity="0.60"/><circle cx="556.7" cy="548.8" r="1.1" fill="#4a505e" opacity="0.38"/><circle cx="556.7" cy="488.8" r="1.1" fill="#4a505e" opacity="0.68"/><circle cx="544.8" cy="501.0" r="0.8" fill="#4a505e" opacity="0.72"/><circle cx="532.3" cy="630.0" r="1.5" fill="#4a505e" opacity="0.52"/><circle cx="623.2" cy="605.9" r="0.9" fill="#4a505e" opacity="0.49"/><circle cx="328.7" cy="550.9" r="1.6" fill="#4a505e" opacity="0.35"/><circle cx="506.1" cy="503.2" r="0.7" fill="#4a505e" opacity="0.62"/><circle cx="388.9" cy="493.1" r="0.8" fill="#4a505e" opacity="0.62"/><circle cx="512.0" cy="486.9" r="0.8" fill="#4a505e" opacity="0.78"/><circle cx="381.6" cy="577.8" r="1.0" fill="#4a505e" opacity="0.69"/><circle cx="518.8" cy="615.1" r="1.1" fill="#4a505e" opacity="0.39"/><circle cx="366.4" cy="498.1" r="1.4" fill="#4a505e" opacity="0.36"/><circle cx="311.6" cy="644.5" r="0.8" fill="#4a505e" opacity="0.75"/><circle cx="333.6" cy="561.8" r="0.8" fill="#4a505e" opacity="0.71"/><circle cx="522.7" cy="590.9" r="1.4" fill="#4a505e" opacity="0.74"/><circle cx="426.5" cy="584.5" r="1.0" fill="#4a505e" opacity="0.36"/><circle cx="601.2" cy="583.1" r="1.4" fill="#4a505e" opacity="0.40"/><circle cx="495.5" cy="561.6" r="1.3" fill="#4a505e" opacity="0.34"/><circle cx="426.6" cy="564.9" r="0.7" fill="#4a505e" opacity="0.58"/><circle cx="565.5" cy="554.8" r="1.2" fill="#4a505e" opacity="0.60"/><circle cx="379.5" cy="542.8" r="1.6" fill="#4a505e" opacity="0.47"/><circle cx="456.8" cy="498.9" r="0.8" fill="#4a505e" opacity="0.38"/><circle cx="635.3" cy="604.8" r="1.5" fill="#4a505e" opacity="0.79"/><circle cx="521.5" cy="638.7" r="1.1" fill="#4a505e" opacity="0.51"/><circle cx="641.5" cy="634.0" r="1.5" fill="#4a505e" opacity="0.54"/><circle cx="579.1" cy="552.2" r="1.6" fill="#4a505e" opacity="0.76"/><circle cx="407.3" cy="639.1" r="0.8" fill="#4a505e" opacity="0.35"/><circle cx="560.9" cy="533.6" r="1.1" fill="#4a505e" opacity="0.62"/><circle cx="317.5" cy="608.0" r="0.9" fill="#4a505e" opacity="0.52"/><circle cx="426.1" cy="607.4" r="1.3" fill="#4a505e" opacity="0.44"/><circle cx="339.9" cy="534.4" r="1.0" fill="#4a505e" opacity="0.34"/><circle cx="357.7" cy="610.9" r="1.3" fill="#4a505e" opacity="0.79"/><circle cx="652.7" cy="629.6" r="1.0" fill="#4a505e" opacity="0.38"/><circle cx="414.4" cy="561.4" r="1.1" fill="#4a505e" opacity="0.57"/><circle cx="431.4" cy="625.7" r="0.9" fill="#4a505e" opacity="0.53"/><circle cx="619.6" cy="618.2" r="0.9" fill="#4a505e" opacity="0.42"/><circle cx="591.0" cy="486.7" r="0.7" fill="#4a505e" opacity="0.57"/><circle cx="494.3" cy="512.3" r="0.7" fill="#4a505e" opacity="0.40"/><circle cx="577.9" cy="561.8" r="1.6" fill="#4a505e" opacity="0.69"/><circle cx="652.6" cy="490.8" r="0.8" fill="#4a505e" opacity="0.31"/><circle cx="457.4" cy="540.8" r="0.7" fill="#4a505e" opacity="0.57"/><circle cx="336.5" cy="536.4" r="0.8" fill="#4a505e" opacity="0.70"/><circle cx="452.3" cy="528.0" r="0.6" fill="#4a505e" opacity="0.51"/><circle cx="527.0" cy="596.4" r="1.5" fill="#4a505e" opacity="0.70"/><circle cx="391.3" cy="507.4" r="1.4" fill="#4a505e" opacity="0.69"/><circle cx="484.7" cy="622.1" r="1.2" fill="#4a505e" opacity="0.44"/><circle cx="363.2" cy="487.8" r="1.2" fill="#4a505e" opacity="0.75"/><circle cx="626.5" cy="562.1" r="1.3" fill="#4a505e" opacity="0.76"/><circle cx="593.6" cy="584.4" r="1.0" fill="#4a505e" opacity="0.56"/><circle cx="364.0" cy="515.2" r="1.3" fill="#4a505e" opacity="0.80"/><circle cx="498.3" cy="552.3" r="1.0" fill="#4a505e" opacity="0.53"/><circle cx="589.7" cy="559.7" r="1.6" fill="#4a505e" opacity="0.38"/><circle cx="415.4" cy="571.1" r="1.0" fill="#4a505e" opacity="0.73"/><circle cx="598.5" cy="638.7" r="1.2" fill="#4a505e" opacity="0.32"/><circle cx="508.1" cy="575.7" r="1.1" fill="#4a505e" opacity="0.44"/><circle cx="556.3" cy="635.4" r="0.7" fill="#4a505e" opacity="0.63"/><circle cx="435.6" cy="569.9" r="1.5" fill="#4a505e" opacity="0.78"/><circle cx="532.7" cy="517.2" r="1.5" fill="#4a505e" opacity="0.39"/><circle cx="439.8" cy="621.6" r="0.9" fill="#4a505e" opacity="0.44"/><circle cx="642.1" cy="640.7" r="0.9" fill="#4a505e" opacity="0.50"/><circle cx="403.7" cy="506.7" r="0.9" fill="#4a505e" opacity="0.79"/><circle cx="331.3" cy="522.9" r="0.8" fill="#4a505e" opacity="0.34"/><circle cx="490.9" cy="607.6" r="1.4" fill="#4a505e" opacity="0.62"/><circle cx="595.0" cy="485.9" r="0.9" fill="#4a505e" opacity="0.78"/><circle cx="327.8" cy="529.2" r="1.1" fill="#4a505e" opacity="0.43"/><circle cx="498.0" cy="492.8" r="0.8" fill="#4a505e" opacity="0.78"/><circle cx="354.5" cy="634.4" r="0.8" fill="#4a505e" opacity="0.80"/><circle cx="543.8" cy="591.7" r="0.7" fill="#4a505e" opacity="0.33"/><circle cx="574.1" cy="514.1" r="0.8" fill="#4a505e" opacity="0.71"/><circle cx="615.3" cy="493.1" r="1.6" fill="#4a505e" opacity="0.57"/><circle cx="439.5" cy="502.7" r="1.0" fill="#4a505e" opacity="0.79"/><circle cx="403.2" cy="506.7" r="0.7" fill="#4a505e" opacity="0.36"/><circle cx="428.8" cy="636.0" r="0.7" fill="#4a505e" opacity="0.40"/><circle cx="638.3" cy="649.5" r="1.6" fill="#4a505e" opacity="0.42"/><circle cx="429.5" cy="641.9" r="1.1" fill="#4a505e" opacity="0.65"/><circle cx="414.8" cy="488.5" r="0.9" fill="#4a505e" opacity="0.67"/><circle cx="582.2" cy="578.9" r="1.1" fill="#4a505e" opacity="0.57"/><circle cx="460.9" cy="573.2" r="1.4" fill="#4a505e" opacity="0.40"/><circle cx="515.2" cy="638.9" r="1.4" fill="#4a505e" opacity="0.39"/><circle cx="647.0" cy="623.6" r="0.8" fill="#4a505e" opacity="0.43"/><circle cx="375.2" cy="493.8" r="1.6" fill="#4a505e" opacity="0.50"/><circle cx="614.5" cy="503.9" r="0.6" fill="#4a505e" opacity="0.73"/><circle cx="586.5" cy="648.6" r="1.3" fill="#4a505e" opacity="0.56"/><circle cx="576.5" cy="500.3" r="1.1" fill="#4a505e" opacity="0.52"/><circle cx="355.2" cy="584.1" r="0.9" fill="#4a505e" opacity="0.55"/><circle cx="436.3" cy="537.5" r="1.0" fill="#4a505e" opacity="0.60"/><circle cx="653.0" cy="639.5" r="1.5" fill="#4a505e" opacity="0.72"/><circle cx="405.4" cy="646.2" r="0.9" fill="#4a505e" opacity="0.36"/><circle cx="481.8" cy="605.8" r="0.9" fill="#4a505e" opacity="0.62"/><circle cx="403.8" cy="644.5" r="1.1" fill="#4a505e" opacity="0.54"/><circle cx="730.3" cy="687.7" r="1.2" fill="#3c4250" opacity="0.51"/><circle cx="658.0" cy="650.2" r="0.5" fill="#3c4250" opacity="0.47"/><circle cx="984.4" cy="673.5" r="0.5" fill="#3c4250" opacity="0.64"/><circle cx="611.8" cy="703.3" r="0.8" fill="#3c4250" opacity="0.39"/><circle cx="744.2" cy="689.0" r="0.8" fill="#3c4250" opacity="0.65"/><circle cx="874.9" cy="612.8" r="0.7" fill="#3c4250" opacity="0.50"/><circle cx="623.8" cy="614.4" r="1.0" fill="#3c4250" opacity="0.65"/><circle cx="772.9" cy="581.3" r="0.7" fill="#3c4250" opacity="0.45"/><circle cx="797.2" cy="580.4" r="0.6" fill="#3c4250" opacity="0.43"/><circle cx="530.5" cy="564.3" r="0.9" fill="#3c4250" opacity="0.67"/><circle cx="732.6" cy="667.7" r="1.1" fill="#3c4250" opacity="0.64"/><circle cx="1037.1" cy="624.4" r="1.0" fill="#3c4250" opacity="0.35"/><circle cx="1010.5" cy="615.2" r="0.8" fill="#3c4250" opacity="0.66"/><circle cx="533.6" cy="587.7" r="1.1" fill="#3c4250" opacity="0.54"/><circle cx="371.2" cy="564.1" r="0.7" fill="#3c4250" opacity="0.30"/><circle cx="972.3" cy="586.8" r="0.7" fill="#3c4250" opacity="0.46"/><circle cx="714.4" cy="623.1" r="0.9" fill="#3c4250" opacity="0.56"/><circle cx="653.7" cy="574.2" r="1.2" fill="#3c4250" opacity="0.58"/><circle cx="370.2" cy="624.5" r="1.0" fill="#3c4250" opacity="0.70"/><circle cx="356.1" cy="561.4" r="0.8" fill="#3c4250" opacity="0.47"/><circle cx="1022.1" cy="680.7" r="0.7" fill="#3c4250" opacity="0.47"/><circle cx="771.6" cy="689.1" r="0.6" fill="#3c4250" opacity="0.46"/><circle cx="374.1" cy="653.6" r="0.5" fill="#3c4250" opacity="0.67"/><circle cx="724.1" cy="643.8" r="0.6" fill="#3c4250" opacity="0.39"/><circle cx="679.9" cy="685.2" r="0.9" fill="#3c4250" opacity="0.41"/><circle cx="1092.6" cy="656.6" r="0.9" fill="#3c4250" opacity="0.38"/><circle cx="543.0" cy="691.4" r="0.6" fill="#3c4250" opacity="0.51"/><circle cx="801.5" cy="611.8" r="1.0" fill="#3c4250" opacity="0.66"/><circle cx="992.5" cy="667.7" r="0.6" fill="#3c4250" opacity="0.32"/><circle cx="651.0" cy="605.6" r="0.6" fill="#3c4250" opacity="0.65"/><circle cx="476.7" cy="680.1" r="1.2" fill="#3c4250" opacity="0.35"/><circle cx="1037.5" cy="618.0" r="0.6" fill="#3c4250" opacity="0.37"/><circle cx="333.3" cy="632.8" r="0.8" fill="#3c4250" opacity="0.64"/><circle cx="972.7" cy="568.3" r="0.8" fill="#3c4250" opacity="0.46"/><circle cx="445.8" cy="596.6" r="0.7" fill="#3c4250" opacity="0.58"/><circle cx="576.5" cy="576.2" r="0.7" fill="#3c4250" opacity="0.48"/><circle cx="757.1" cy="595.8" r="1.0" fill="#3c4250" opacity="0.39"/><circle cx="842.3" cy="649.0" r="0.6" fill="#3c4250" opacity="0.60"/><circle cx="620.0" cy="638.8" r="0.9" fill="#3c4250" opacity="0.55"/><circle cx="658.6" cy="568.2" r="1.1" fill="#3c4250" opacity="0.64"/><circle cx="697.1" cy="644.5" r="0.7" fill="#3c4250" opacity="0.66"/><circle cx="854.3" cy="592.4" r="1.1" fill="#3c4250" opacity="0.69"/><circle cx="581.1" cy="705.3" r="0.8" fill="#3c4250" opacity="0.37"/><circle cx="879.4" cy="609.5" r="1.0" fill="#3c4250" opacity="0.53"/><circle cx="389.6" cy="637.1" r="1.1" fill="#3c4250" opacity="0.49"/><circle cx="736.6" cy="686.0" r="0.8" fill="#3c4250" opacity="0.50"/><circle cx="771.6" cy="680.3" r="0.6" fill="#3c4250" opacity="0.34"/><circle cx="915.0" cy="640.7" r="0.7" fill="#3c4250" opacity="0.66"/><circle cx="1014.2" cy="639.1" r="1.2" fill="#3c4250" opacity="0.63"/><circle cx="904.4" cy="602.5" r="0.5" fill="#3c4250" opacity="0.57"/><circle cx="894.0" cy="611.2" r="0.8" fill="#3c4250" opacity="0.53"/><circle cx="503.9" cy="661.9" r="0.9" fill="#3c4250" opacity="0.45"/><circle cx="391.1" cy="640.9" r="0.7" fill="#3c4250" opacity="0.59"/><circle cx="441.7" cy="617.6" r="0.6" fill="#3c4250" opacity="0.46"/><circle cx="766.4" cy="575.6" r="0.5" fill="#3c4250" opacity="0.49"/><circle cx="465.0" cy="633.7" r="0.6" fill="#3c4250" opacity="0.34"/><circle cx="735.2" cy="694.8" r="1.1" fill="#3c4250" opacity="0.51"/><circle cx="622.4" cy="569.6" r="0.7" fill="#3c4250" opacity="0.43"/><circle cx="1060.0" cy="577.1" r="1.2" fill="#3c4250" opacity="0.49"/><circle cx="652.0" cy="598.3" r="1.2" fill="#3c4250" opacity="0.37"/><circle cx="762.4" cy="634.6" r="0.6" fill="#3c4250" opacity="0.39"/><circle cx="1095.3" cy="675.5" r="1.0" fill="#3c4250" opacity="0.66"/><circle cx="382.2" cy="662.7" r="1.0" fill="#3c4250" opacity="0.39"/><circle cx="670.5" cy="702.3" r="0.7" fill="#3c4250" opacity="0.60"/><circle cx="435.9" cy="657.4" r="0.7" fill="#3c4250" opacity="0.50"/><circle cx="602.4" cy="687.1" r="1.0" fill="#3c4250" opacity="0.50"/><circle cx="855.5" cy="622.4" r="1.1" fill="#3c4250" opacity="0.40"/><circle cx="740.5" cy="645.5" r="0.8" fill="#3c4250" opacity="0.32"/><circle cx="439.6" cy="653.5" r="0.6" fill="#3c4250" opacity="0.60"/><circle cx="708.9" cy="699.2" r="1.1" fill="#3c4250" opacity="0.59"/><circle cx="602.5" cy="566.4" r="0.9" fill="#3c4250" opacity="0.60"/><circle cx="1043.5" cy="589.6" r="0.6" fill="#3c4250" opacity="0.69"/><circle cx="897.5" cy="630.8" r="1.0" fill="#3c4250" opacity="0.36"/><circle cx="740.4" cy="657.6" r="0.9" fill="#3c4250" opacity="0.36"/><circle cx="413.0" cy="651.2" r="1.1" fill="#3c4250" opacity="0.36"/><circle cx="308.7" cy="572.1" r="1.0" fill="#3c4250" opacity="0.46"/><circle cx="669.4" cy="705.1" r="0.9" fill="#3c4250" opacity="0.41"/><circle cx="866.6" cy="560.3" r="0.7" fill="#3c4250" opacity="0.58"/><circle cx="440.3" cy="564.8" r="0.9" fill="#3c4250" opacity="0.43"/><circle cx="1083.8" cy="574.8" r="1.1" fill="#3c4250" opacity="0.46"/><circle cx="950.6" cy="625.0" r="1.0" fill="#3c4250" opacity="0.43"/><circle cx="483.6" cy="626.1" r="1.1" fill="#3c4250" opacity="0.44"/><circle cx="487.8" cy="620.7" r="0.6" fill="#3c4250" opacity="0.43"/><circle cx="763.6" cy="639.6" r="0.9" fill="#3c4250" opacity="0.42"/><circle cx="322.9" cy="563.9" r="0.7" fill="#3c4250" opacity="0.38"/><circle cx="760.5" cy="598.7" r="1.0" fill="#3c4250" opacity="0.54"/><circle cx="835.5" cy="667.4" r="0.9" fill="#3c4250" opacity="0.47"/><circle cx="551.0" cy="569.2" r="1.1" fill="#3c4250" opacity="0.50"/><circle cx="383.2" cy="695.3" r="0.9" fill="#3c4250" opacity="0.55"/><circle cx="655.7" cy="578.4" r="1.2" fill="#3c4250" opacity="0.37"/><circle cx="597.5" cy="705.9" r="0.6" fill="#3c4250" opacity="0.50"/><circle cx="688.6" cy="596.2" r="1.1" fill="#3c4250" opacity="0.47"/><circle cx="312.3" cy="629.1" r="0.5" fill="#3c4250" opacity="0.58"/><circle cx="1001.7" cy="692.2" r="0.5" fill="#3c4250" opacity="0.57"/><circle cx="548.0" cy="629.0" r="0.7" fill="#3c4250" opacity="0.42"/><circle cx="409.7" cy="651.4" r="0.6" fill="#3c4250" opacity="0.69"/><circle cx="338.2" cy="700.8" r="0.6" fill="#3c4250" opacity="0.33"/><circle cx="901.8" cy="637.5" r="1.0" fill="#3c4250" opacity="0.50"/><circle cx="810.0" cy="572.1" r="1.0" fill="#3c4250" opacity="0.50"/><circle cx="1076.6" cy="560.9" r="0.5" fill="#3c4250" opacity="0.57"/><circle cx="1047.6" cy="621.6" r="1.0" fill="#3c4250" opacity="0.52"/><circle cx="617.3" cy="628.0" r="0.9" fill="#3c4250" opacity="0.31"/><circle cx="548.7" cy="667.8" r="0.7" fill="#3c4250" opacity="0.49"/><circle cx="509.4" cy="612.2" r="1.0" fill="#3c4250" opacity="0.60"/><circle cx="1072.3" cy="629.6" r="0.6" fill="#3c4250" opacity="0.43"/><circle cx="350.0" cy="595.0" r="0.9" fill="#3c4250" opacity="0.54"/><circle cx="497.1" cy="586.5" r="0.6" fill="#3c4250" opacity="0.37"/><circle cx="706.1" cy="597.3" r="1.1" fill="#3c4250" opacity="0.53"/><circle cx="576.5" cy="622.9" r="0.5" fill="#3c4250" opacity="0.59"/><circle cx="906.9" cy="613.1" r="1.0" fill="#3c4250" opacity="0.41"/><circle cx="479.5" cy="593.3" r="0.6" fill="#3c4250" opacity="0.54"/><circle cx="819.3" cy="666.2" r="0.6" fill="#3c4250" opacity="0.61"/><circle cx="687.5" cy="615.3" r="0.9" fill="#3c4250" opacity="0.47"/><circle cx="463.9" cy="617.7" r="1.0" fill="#3c4250" opacity="0.59"/><circle cx="1038.7" cy="588.4" r="1.1" fill="#3c4250" opacity="0.62"/><circle cx="876.2" cy="703.0" r="0.6" fill="#3c4250" opacity="0.61"/><circle cx="1026.1" cy="577.8" r="0.9" fill="#3c4250" opacity="0.68"/><circle cx="538.6" cy="684.9" r="1.1" fill="#3c4250" opacity="0.47"/><circle cx="419.7" cy="591.5" r="1.1" fill="#3c4250" opacity="0.47"/><circle cx="556.8" cy="624.7" r="1.1" fill="#3c4250" opacity="0.40"/><circle cx="317.7" cy="698.6" r="0.7" fill="#3c4250" opacity="0.45"/><circle cx="1087.6" cy="601.2" r="0.6" fill="#3c4250" opacity="0.66"/><circle cx="499.1" cy="592.4" r="1.2" fill="#3c4250" opacity="0.39"/><circle cx="1027.5" cy="608.6" r="0.7" fill="#3c4250" opacity="0.39"/><circle cx="739.0" cy="641.8" r="0.8" fill="#3c4250" opacity="0.50"/><circle cx="542.7" cy="682.3" r="1.2" fill="#3c4250" opacity="0.60"/><circle cx="962.1" cy="570.3" r="0.7" fill="#3c4250" opacity="0.38"/><circle cx="427.5" cy="701.4" r="1.1" fill="#3c4250" opacity="0.67"/><circle cx="751.5" cy="577.0" r="0.8" fill="#3c4250" opacity="0.32"/><circle cx="1030.3" cy="598.8" r="0.7" fill="#3c4250" opacity="0.68"/><circle cx="464.2" cy="694.7" r="0.7" fill="#3c4250" opacity="0.57"/><circle cx="388.8" cy="691.2" r="0.8" fill="#3c4250" opacity="0.44"/><circle cx="829.1" cy="646.6" r="0.7" fill="#3c4250" opacity="0.35"/><circle cx="765.7" cy="563.6" r="1.1" fill="#3c4250" opacity="0.44"/><circle cx="439.4" cy="607.9" r="0.6" fill="#3c4250" opacity="0.43"/><circle cx="739.7" cy="619.4" r="0.7" fill="#3c4250" opacity="0.42"/><circle cx="694.1" cy="673.7" r="0.8" fill="#3c4250" opacity="0.61"/><circle cx="691.1" cy="577.6" r="0.6" fill="#3c4250" opacity="0.64"/><circle cx="688.3" cy="615.8" r="0.9" fill="#3c4250" opacity="0.64"/><circle cx="604.8" cy="612.8" r="0.8" fill="#3c4250" opacity="0.30"/><circle cx="741.0" cy="630.0" r="0.8" fill="#3c4250" opacity="0.48"/><circle cx="682.9" cy="664.5" r="0.6" fill="#3c4250" opacity="0.69"/><circle cx="395.2" cy="686.5" r="0.6" fill="#3c4250" opacity="0.62"/><circle cx="512.5" cy="571.4" r="0.9" fill="#3c4250" opacity="0.64"/><circle cx="982.8" cy="688.0" r="1.2" fill="#3c4250" opacity="0.32"/><circle cx="607.7" cy="575.6" r="1.0" fill="#3c4250" opacity="0.48"/><circle cx="901.2" cy="676.2" r="1.2" fill="#3c4250" opacity="0.57"/><circle cx="1006.7" cy="640.1" r="0.6" fill="#3c4250" opacity="0.66"/><circle cx="376.2" cy="572.5" r="1.1" fill="#3c4250" opacity="0.41"/><circle cx="835.6" cy="564.2" r="0.6" fill="#3c4250" opacity="0.59"/><circle cx="333.3" cy="634.6" r="1.2" fill="#3c4250" opacity="0.39"/><circle cx="869.6" cy="668.6" r="0.9" fill="#3c4250" opacity="0.61"/><circle cx="864.3" cy="562.1" r="0.6" fill="#3c4250" opacity="0.51"/><circle cx="1082.8" cy="591.7" r="0.9" fill="#3c4250" opacity="0.35"/><circle cx="983.9" cy="625.0" r="0.9" fill="#3c4250" opacity="0.57"/><circle cx="412.8" cy="666.4" r="1.1" fill="#3c4250" opacity="0.64"/><circle cx="529.3" cy="594.2" r="0.6" fill="#3c4250" opacity="0.66"/><circle cx="655.2" cy="616.9" r="0.9" fill="#3c4250" opacity="0.58"/><circle cx="558.7" cy="609.1" r="1.0" fill="#3c4250" opacity="0.61"/><circle cx="541.0" cy="570.8" r="1.1" fill="#3c4250" opacity="0.59"/><circle cx="780.8" cy="619.1" r="1.2" fill="#3c4250" opacity="0.47"/><circle cx="477.1" cy="574.7" r="0.7" fill="#3c4250" opacity="0.54"/><circle cx="596.1" cy="698.3" r="1.0" fill="#3c4250" opacity="0.48"/><circle cx="833.9" cy="647.9" r="0.9" fill="#3c4250" opacity="0.50"/><circle cx="723.5" cy="631.7" r="1.1" fill="#3c4250" opacity="0.38"/><circle cx="934.5" cy="603.6" r="1.1" fill="#3c4250" opacity="0.33"/><circle cx="692.9" cy="624.7" r="1.0" fill="#3c4250" opacity="0.38"/><circle cx="514.0" cy="579.4" r="0.9" fill="#3c4250" opacity="0.53"/><circle cx="303.4" cy="586.0" r="0.6" fill="#3c4250" opacity="0.68"/><circle cx="668.8" cy="642.6" r="0.7" fill="#3c4250" opacity="0.56"/><circle cx="956.6" cy="658.0" r="0.5" fill="#3c4250" opacity="0.48"/><circle cx="696.0" cy="566.5" r="1.1" fill="#3c4250" opacity="0.43"/><circle cx="538.9" cy="651.3" r="0.9" fill="#3c4250" opacity="0.50"/><circle cx="993.9" cy="635.8" r="0.7" fill="#3c4250" opacity="0.33"/><circle cx="747.5" cy="613.1" r="0.9" fill="#3c4250" opacity="0.44"/><circle cx="308.5" cy="565.5" r="0.6" fill="#3c4250" opacity="0.34"/><circle cx="987.5" cy="644.8" r="0.7" fill="#3c4250" opacity="0.58"/><circle cx="813.1" cy="569.1" r="1.0" fill="#3c4250" opacity="0.39"/><circle cx="1104.9" cy="580.7" r="0.7" fill="#3c4250" opacity="0.40"/><circle cx="996.2" cy="679.5" r="0.9" fill="#3c4250" opacity="0.36"/><circle cx="647.6" cy="662.5" r="0.5" fill="#3c4250" opacity="0.67"/><circle cx="979.4" cy="696.0" r="1.0" fill="#3c4250" opacity="0.55"/><circle cx="1086.9" cy="599.0" r="0.7" fill="#3c4250" opacity="0.35"/><circle cx="448.0" cy="676.6" r="0.6" fill="#3c4250" opacity="0.60"/><circle cx="621.6" cy="688.1" r="1.0" fill="#3c4250" opacity="0.57"/><circle cx="982.4" cy="566.2" r="0.7" fill="#3c4250" opacity="0.45"/><circle cx="648.2" cy="657.9" r="1.1" fill="#3c4250" opacity="0.60"/><circle cx="1049.7" cy="661.6" r="0.7" fill="#3c4250" opacity="0.50"/><circle cx="904.8" cy="679.0" r="0.8" fill="#3c4250" opacity="0.44"/><circle cx="797.1" cy="593.3" r="1.1" fill="#3c4250" opacity="0.30"/><circle cx="824.6" cy="630.9" r="0.6" fill="#3c4250" opacity="0.53"/><circle cx="684.2" cy="700.5" r="1.1" fill="#3c4250" opacity="0.53"/><circle cx="1003.6" cy="689.0" r="0.6" fill="#3c4250" opacity="0.63"/><circle cx="973.0" cy="704.7" r="1.0" fill="#3c4250" opacity="0.46"/><circle cx="468.9" cy="655.3" r="0.6" fill="#3c4250" opacity="0.60"/><circle cx="764.8" cy="680.6" r="0.7" fill="#3c4250" opacity="0.42"/><circle cx="1030.2" cy="656.7" r="0.8" fill="#3c4250" opacity="0.52"/><circle cx="653.2" cy="653.9" r="0.9" fill="#3c4250" opacity="0.41"/><circle cx="1090.7" cy="689.3" r="1.0" fill="#3c4250" opacity="0.41"/><circle cx="459.2" cy="666.7" r="1.1" fill="#3c4250" opacity="0.56"/><circle cx="474.7" cy="665.2" r="0.9" fill="#3c4250" opacity="0.45"/><circle cx="776.5" cy="625.5" r="1.0" fill="#3c4250" opacity="0.60"/><circle cx="1093.1" cy="576.2" r="0.9" fill="#3c4250" opacity="0.68"/><circle cx="831.2" cy="644.6" r="1.1" fill="#3c4250" opacity="0.31"/><circle cx="940.3" cy="651.0" r="0.9" fill="#3c4250" opacity="0.42"/><circle cx="800.9" cy="578.3" r="0.9" fill="#3c4250" opacity="0.40"/><circle cx="1052.0" cy="677.5" r="0.8" fill="#3c4250" opacity="0.60"/><circle cx="612.4" cy="636.4" r="0.6" fill="#3c4250" opacity="0.64"/><circle cx="917.3" cy="671.0" r="0.6" fill="#3c4250" opacity="0.63"/><circle cx="312.7" cy="642.5" r="0.8" fill="#3c4250" opacity="0.32"/><circle cx="642.1" cy="689.5" r="0.9" fill="#3c4250" opacity="0.43"/><circle cx="957.7" cy="611.9" r="1.1" fill="#3c4250" opacity="0.46"/><circle cx="365.4" cy="701.9" r="0.5" fill="#3c4250" opacity="0.40"/><circle cx="922.9" cy="576.8" r="0.9" fill="#3c4250" opacity="0.64"/><circle cx="777.3" cy="610.8" r="1.0" fill="#3c4250" opacity="0.63"/><circle cx="768.8" cy="651.5" r="0.7" fill="#3c4250" opacity="0.46"/><circle cx="1100.5" cy="701.9" r="0.5" fill="#3c4250" opacity="0.38"/><circle cx="484.1" cy="675.8" r="0.6" fill="#3c4250" opacity="0.37"/><circle cx="918.8" cy="584.7" r="1.2" fill="#3c4250" opacity="0.48"/><circle cx="1025.5" cy="679.7" r="0.6" fill="#3c4250" opacity="0.61"/><path d="M752,552 L760,551 L761,553 L753,554 Z" fill="#c8ccd4" opacity="0.8"/><path d="M826,566 L835,565 L836,566.5 L827,567.5 Z" fill="#9aa0ac" opacity="0.6"/><path d="M970,517 L990,516 L990,519 L970,520 Z" fill="#5a606c" opacity="0.5"/><rect x="456.5" y="380" width="2.6" height="94" fill="#2a2c38"/><path d="M456,381 L462,379 L461,384 Z" fill="#2a2c38"/><rect x="544.7" y="408" width="2" height="75" fill="#2a2c38"/><rect x="539" y="406" width="14" height="3" rx="1.5" fill="#2a2c38"/><path d="M554.4,483 L554.4,472.8 L558,472.8 L558,475 L589,475 L589,472.8 L599,472.8 L599,476 L606,476 L606,471 L608.5,471 L608.5,477 L611,479 L611,483 Z" fill="#c9c7c3"/><rect x="862.9" y="425" width="2.2" height="63" fill="#2a2c38"/><rect x="858" y="425" width="12" height="1.6" fill="#2a2c38"/><rect x="892.3" y="458" width="1.4" height="30" fill="#2a2c38"/><rect x="889" y="457" width="8" height="2" fill="#2a2c38"/><rect x="977.0" y="418" width="2.0" height="70" fill="#2a2c38"/><rect x="976" y="418" width="4" height="6" rx="2" fill="#2a2c38"/><rect x="1040.7" y="439" width="2.0" height="49" fill="#2a2c38"/><rect x="1036" y="440" width="11" height="1.6" fill="#2a2c38"/><rect x="1075.8" y="427" width="2.4" height="61" fill="#2a2c38"/><rect x="1070" y="428" width="14" height="1.6" fill="#2a2c38"/><rect x="1071" y="446" width="10" height="5" fill="#2a2c38"/><rect x="1089.2" y="439" width="1.6" height="49" fill="#2a2c38"/><rect x="1086" y="440" width="8" height="1.6" fill="#2a2c38"/><rect x="999.3" y="460" width="1.4" height="28" fill="#2a2c38"/><rect x="929.4" y="470" width="1.2" height="18" fill="#2a2c38"/><rect x="947.5" y="478" width="1.0" height="10" fill="#2a2c38"/><rect x="1064.3" y="462" width="1.4" height="26" fill="#2a2c38"/><g stroke="#2b2d3a" fill="none"><path d="M1005,488 L1011,386 M1029,488 L1021,386" stroke-width="2"/><path d="M1010.6,392 L1022.9,410 M1021.5,392 L1009.6,410 M1010.6,392 L1021.5,392" stroke-width="1.2"/><path d="M1009.6,410 L1024.3,428 M1022.9,410 L1008.5,428 M1009.6,410 L1022.9,410" stroke-width="1.2"/><path d="M1008.5,428 L1025.7,446 M1024.3,428 L1007.5,446 M1008.5,428 L1024.3,428" stroke-width="1.2"/><path d="M1007.5,446 L1027.1,464 M1025.7,446 L1006.4,464 M1007.5,446 L1025.7,446" stroke-width="1.2"/><path d="M1006.4,464 L1028.5,482 M1027.1,464 L1005.4,482 M1006.4,464 L1027.1,464" stroke-width="1.2"/><path d="M1005.4,482 L1029.9,488 M1028.5,482 L1004.3,488 M1005.4,482 L1028.5,482" stroke-width="1.2"/><path d="M1010,252 L1011,386 M1018,252 L1021,386" stroke-width="1.4"/><path d="M1009,256 L1020,256" stroke-width="0.9"/><path d="M1009,263 L1020,263" stroke-width="0.9"/><path d="M1009,270 L1020,270" stroke-width="0.9"/><path d="M1009,277 L1020,277" stroke-width="0.9"/><path d="M1009,284 L1020,284" stroke-width="0.9"/><path d="M1009,291 L1020,291" stroke-width="0.9"/><path d="M1009,298 L1020,298" stroke-width="0.9"/><path d="M1009,305 L1020,305" stroke-width="0.9"/><path d="M1009,312 L1020,312" stroke-width="0.9"/><path d="M1009,319 L1020,319" stroke-width="0.9"/><path d="M1009,326 L1020,326" stroke-width="0.9"/><path d="M1009,333 L1020,333" stroke-width="0.9"/><path d="M1009,340 L1020,340" stroke-width="0.9"/><path d="M1009,347 L1020,347" stroke-width="0.9"/><path d="M1009,354 L1020,354" stroke-width="0.9"/><path d="M1009,361 L1020,361" stroke-width="0.9"/><path d="M1009,368 L1020,368" stroke-width="0.9"/><path d="M1009,375 L1020,375" stroke-width="0.9"/><path d="M1009,382 L1020,382" stroke-width="0.9"/></g><path d="M649.6,455.4 L657.2,445.3 L672.3,442.8 L687.5,446.2 L690,451.2 L688.3,460.5 L689.2,467.2 L691.7,477.3 L694.2,482.3 L707.7,489 L721.1,499.2 L729.5,511 L733.7,524.4 L734.6,537.9 L734.6,550 L732.9,556.7 L722.8,571.9 L720.3,583.6 L721.1,625.7 L722.8,637.5 L720.3,651 L721.1,684.6 L722,707 L698.4,707 L690.8,667.8 L685,648.4 L680.8,647.6 L676.5,657.7 L674,684.6 L674,707 L650.5,707 L648.8,667.8 L644.6,634.1 L641.2,600.5 L638.7,582 L628.6,568.5 L621.9,558.4 L621.9,550 L621.9,537.9 L625.2,519.4 L633.6,504.2 L643.7,494.1 L655.5,485.7 L656.4,477.3 L655.5,465.5 L653.8,458 Z" fill="#a29d1f"/><path d="M649.6,455.4 L657.2,445.3 L672.3,442.8 L687.5,446.2 L690,451.2 L688.3,460.5 L689.2,467.2 L691.7,477.3 L694.2,482.3 L697,485 L655.5,485.5 L656.4,477.3 L655.5,465.5 L653.8,458 Z" fill="#bab52c"/><circle cx="672" cy="563" r="8" fill="#b2aa2e" opacity="0.7"/><ellipse cx="674" cy="592" rx="7" ry="5" fill="#aaa42a" opacity="0.6"/><rect x="620" y="440.5" width="117.5" height="266" fill="none" stroke="#ffff00" stroke-width="4"/><rect x="618" y="422" width="59.5" height="20" fill="#ffff00"/><text x="620" y="437" font-family="Liberation Sans" font-size="17.5" fill="#f2f2f2" stroke="#4a4a4a" stroke-width="1.6" paint-order="stroke" textLength="54" lengthAdjust="spacingAndGlyphs">person</text></svg>
<svg class="abs" style="left:1111px;top:78px" width="807" height="802" viewBox="1111 78 807 802"><rect x="1111" y="78" width="807" height="802" fill="#2c3845"/><path d="M1058.4 500.4L1439.3 1178.9M1142.1 486L1621 1067M1219.3 472.8L1767 977M1290.6 460.5L1887.1 903M1356.8 449.2L1987.5 841.2M1475.7 428.7L2145.9 743.6M1529.3 419.5L2209.5 704.4M1579.6 410.9L2265.2 670.1M1626.7 402.8L2314.5 639.7M1671 395.2L2358.4 612.7M1058.4 500.4L1671 395.2M1072.6 525.7L1710.1 407.6M1088.9 554.8L1753.2 421.2M1107.9 588.7L1800.8 436.3M1130.3 628.5L1853.7 453M1189.3 733.5L1979.6 492.8M1229.3 804.9L2055.2 516.8M1280.3 895.7L2141.7 544.1M1347.3 1015L2241.6 575.8M1439.3 1178.9L2358.4 612.7" stroke="#9a9a9a" stroke-width="1.1" fill="none"/><path d="M1418.3 438.6L2072.7 788.7M1156.9 675.9L1912.9 471.8" stroke="#4a4a4c" stroke-width="1.1" fill="none"/><path d="M1185 303.5h0M1190.3 303.2h0M1206 302.2h0M1221.6 301.3h0M1512.7 292.2h0M1522.1 292.2h0M1536.1 292.2h0M1545.5 292.2h0M1568.9 292.3h0M1573.6 292.4h0M1582.9 292.4h0M1597 292.6h0M1601.7 292.7h0M1611.1 292.8h0M1625.2 293h0M1648.8 293.5h0M1658.3 293.7h0M1672.6 294.1h0M1682.1 294.4h0M1686.9 294.5h0M1701.3 295h0M1706.1 295.1h0M1720.5 295.6h0M1725.4 295.8h0M1735.1 296.2h0M1740 296.4h0M1744.8 296.5h0M1764.4 297.4h0M1774.3 297.8h0M1784.2 298.3h0M1789.2 298.5h0M1804.2 299.3h0M1819.3 300.1h0M1824.4 300.3h0M1829.5 300.6h0M1839.7 301.2h0M1246.4 326.6h0M1251.2 326.2h0M1256 325.9h0M1260.7 325.6h0M1265.5 325.3h0M1430.8 317.8h0M1435.3 317.7h0M1439.7 317.6h0M1444.2 317.5h0M1448.6 317.4h0M1453.1 317.3h0M1457.5 317.2h0M1461.9 317.1h0M1470.8 317h0M1475.3 316.9h0M1484.1 316.8h0M1488.5 316.7h0M1493 316.7h0M1497.4 316.6h0" stroke="#d62620" stroke-width="1.0" stroke-linecap="round" fill="none"/><path d="M1226.8 301h0M1247.3 299.9h0M1252.4 299.6h0M1262.5 299.1h0M1267.6 298.8h0M1272.6 298.6h0M1277.6 298.3h0M1327.1 296.2h0M1336.9 295.8h0M1346.7 295.4h0M1361.2 294.9h0M1366 294.8h0M1370.8 294.6h0M1375.6 294.5h0M1399.6 293.8h0M1409.1 293.6h0M1418.6 293.4h0M1423.4 293.3h0M1437.6 293h0M1447 292.9h0M1461.2 292.6h0M1465.9 292.6h0M1484.6 292.4h0M1489.3 292.3h0M1270.3 325h0M1275 324.7h0M1279.7 324.4h0M1284.5 324.1h0M1298.6 323.3h0M1307.9 322.8h0M1312.6 322.5h0M1317.2 322.3h0M1321.9 322h0M1335.7 321.4h0M1344.9 320.9h0M1349.5 320.7h0M1363.2 320.1h0M1367.7 319.9h0M1372.3 319.7h0M1376.8 319.6h0M1381.3 319.4h0M1385.9 319.2h0M1390.4 319.1h0M1394.9 318.9h0M1399.4 318.8h0M1403.9 318.6h0M1412.9 318.3h0M1417.4 318.2h0M1421.8 318.1h0M1426.3 317.9h0" stroke="#d02020" stroke-width="1.0" stroke-linecap="round" fill="none"/><path d="M1881.1 303.7h0M1896.9 304.7h0M1902.2 305.1h0M1907.6 305.5h0M1212.3 329h0M1217.2 328.6h0M1222.1 328.3h0M1227 327.9h0M1231.9 327.6h0M1236.7 327.2h0M1241.5 326.9h0M1501.8 316.6h0M1506.2 316.6h0M1510.6 316.5h0M1515 316.5h0M1519.4 316.5h0M1523.9 316.4h0M1528.3 316.4h0M1532.7 316.4h0M1537.1 316.4h0M1541.5 316.4h0M1545.9 316.4h0M1550.3 316.4h0M1554.7 316.4h0M1559.1 316.5h0M1563.6 316.5h0M1568 316.5h0M1572.4 316.5h0M1576.8 316.6h0M1581.2 316.6h0M1585.6 316.7h0M1590.1 316.7h0M1598.9 316.8h0M1603.3 316.9h0M1607.8 317h0M1612.2 317h0M1621.1 317.2h0M1630 317.4h0M1634.4 317.5h0M1638.9 317.6h0M1643.3 317.7h0M1656.7 318h0M1661.2 318.2h0M1665.7 318.3h0M1670.2 318.4h0M1674.7 318.6h0M1679.2 318.7h0M1683.7 318.9h0M1692.7 319.2h0M1697.2 319.3h0M1701.7 319.5h0M1706.3 319.7h0M1710.8 319.9h0M1715.4 320h0M1719.9 320.2h0M1724.5 320.4h0M1729.1 320.6h0M1733.6 320.8h0M1738.2 321h0M1742.8 321.3h0M1747.4 321.5h0M1752 321.7h0M1756.7 321.9h0M1761.3 322.2h0M1765.9 322.4h0M1770.6 322.7h0M1775.3 322.9h0M1779.9 323.2h0M1784.6 323.4h0M1794 324h0" stroke="#dd2d20" stroke-width="1.0" stroke-linecap="round" fill="none"/><path d="M1912.9 305.8h0M1918.3 306.2h0M1207.4 329.4h0M1798.7 324.2h0M1803.5 324.5h0M1808.2 324.8h0M1812.9 325.1h0M1817.7 325.4h0M1822.5 325.7h0M1832.1 326.3h0M1836.9 326.7h0M1841.7 327h0M1846.5 327.3h0M1851.4 327.7h0M1856.3 328h0M1866 328.7h0" stroke="#e43720" stroke-width="1.0" stroke-linecap="round" fill="none"/><path d="M1871 329.1h0M1875.9 329.5h0M1880.8 329.8h0M1885.8 330.2h0M1890.8 330.6h0M1895.7 331h0M1900.7 331.4h0" stroke="#e85120" stroke-width="1.0" stroke-linecap="round" fill="none"/><path d="M1910.8 332.2h0" stroke="#ec6c20" stroke-width="1.0" stroke-linecap="round" fill="none"/><path d="M1237.4 357h0M1241.9 356.6h0M1246.4 356.2h0M1250.9 355.8h0M1255.4 355.4h0M1526.8 343h0M1530.9 343h0M1535 343h0M1539.1 342.9h0M1543.3 342.9h0M1547.4 342.9h0M1551.5 342.9h0M1555.6 342.9h0M1559.7 342.9h0M1563.9 343h0M1568 343h0M1572.1 343h0M1576.2 343h0M1580.4 343.1h0M1584.5 343.1h0M1588.6 343.2h0M1596.9 343.3h0M1601 343.3h0M1605.1 343.4h0M1609.3 343.5h0M1613.4 343.6h0M1617.6 343.6h0M1621.7 343.7h0M1625.9 343.8h0M1630 343.9h0M1634.2 344h0M1638.3 344.1h0M1642.5 344.2h0M1646.7 344.3h0M1650.8 344.5h0M1655 344.6h0M1659.2 344.7h0M1663.4 344.9h0M1667.6 345h0M1676 345.3h0M1684.4 345.6h0M1688.6 345.8h0M1692.8 346h0M1697 346.1h0M1701.3 346.3h0M1705.5 346.5h0M1709.7 346.7h0M1261 374.5h0M1265.3 374.1h0M1269.5 373.7h0M1273.7 373.3h0M1278 372.9h0M1376.8 365.4h0M1380.9 365.2h0M1384.9 365h0M1388.9 364.7h0M1392.9 364.5h0M1396.9 364.3h0M1401 364.1h0M1405 363.9h0M1409 363.7h0M1413 363.5h0M1417 363.3h0M1420.9 363.2h0M1424.9 363h0M1428.9 362.8h0M1504 360.6h0M1508 360.6h0M1511.9 360.5h0M1515.8 360.5h0M1519.8 360.4h0M1302.2 392.4h0M1306.1 392h0M1310 391.6h0M1313.9 391.3h0M1317.8 390.9h0M1321.7 390.5h0M1325.6 390.2h0M1329.5 389.8h0" stroke="#e43720" stroke-width="1.5" stroke-linecap="round" fill="none"/><path d="M1259.8 355.1h0M1264.3 354.7h0M1268.7 354.3h0M1273.2 354h0M1393.9 346.4h0M1398.1 346.2h0M1402.3 346h0M1406.5 345.9h0M1410.7 345.7h0M1414.9 345.5h0M1419 345.4h0M1423.2 345.2h0M1427.4 345.1h0M1431.6 344.9h0M1439.9 344.6h0M1444.1 344.5h0M1448.2 344.4h0M1452.4 344.3h0M1456.5 344.2h0M1460.7 344.1h0M1464.8 343.9h0M1469 343.8h0M1473.1 343.8h0M1477.3 343.7h0M1481.4 343.6h0M1485.5 343.5h0M1489.7 343.4h0M1493.8 343.4h0M1497.9 343.3h0M1502 343.2h0M1510.3 343.1h0M1514.4 343.1h0M1518.5 343.1h0M1522.7 343h0M1282.2 372.5h0M1286.4 372.1h0M1290.6 371.8h0M1294.7 371.4h0M1298.9 371h0M1303.1 370.7h0M1307.2 370.3h0M1311.4 370h0M1315.5 369.7h0M1319.7 369.3h0M1323.8 369h0M1327.9 368.7h0M1332 368.4h0M1336.1 368.1h0M1340.2 367.8h0M1344.3 367.5h0M1348.4 367.2h0M1352.5 367h0M1356.6 366.7h0M1360.6 366.4h0M1364.7 366.2h0M1368.7 365.9h0M1372.8 365.7h0" stroke="#dd2d20" stroke-width="1.5" stroke-linecap="round" fill="none"/><path d="M1282 353.3h0M1286.4 352.9h0M1290.8 352.6h0M1295.2 352.3h0M1299.6 352h0M1304 351.7h0M1308.3 351.3h0M1312.7 351h0M1317 350.7h0M1325.7 350.2h0M1330 349.9h0M1334.3 349.6h0M1338.6 349.4h0M1342.9 349.1h0M1347.2 348.8h0M1351.4 348.6h0M1355.7 348.4h0M1360 348.1h0M1364.2 347.9h0M1368.5 347.7h0M1372.7 347.4h0M1377 347.2h0M1381.2 347h0M1385.4 346.8h0M1389.6 346.6h0" stroke="#d62620" stroke-width="1.5" stroke-linecap="round" fill="none"/><path d="M1714 346.9h0M1718.2 347.1h0M1722.5 347.3h0M1726.8 347.5h0M1731 347.8h0M1735.3 348h0M1739.6 348.2h0M1743.9 348.5h0M1748.2 348.7h0M1752.5 349h0M1756.8 349.2h0M1761.2 349.5h0M1256.8 374.9h0M1432.9 362.7h0M1436.9 362.5h0M1440.8 362.3h0M1444.8 362.2h0M1448.8 362.1h0M1452.7 361.9h0M1456.7 361.8h0M1460.7 361.7h0M1464.6 361.5h0M1468.6 361.4h0M1472.5 361.3h0M1476.5 361.2h0M1480.4 361.1h0M1484.3 361h0M1488.3 360.9h0M1492.2 360.9h0M1496.2 360.8h0M1500.1 360.7h0M1523.7 360.4h0M1527.6 360.3h0M1531.6 360.3h0M1535.5 360.3h0M1539.4 360.3h0M1543.3 360.3h0M1547.3 360.2h0M1551.2 360.2h0M1555.1 360.2h0M1559.1 360.2h0M1563 360.3h0M1566.9 360.3h0M1570.9 360.3h0M1574.8 360.3h0M1278.4 394.9h0M1282.4 394.4h0M1286.4 394h0M1290.3 393.6h0M1294.3 393.2h0M1298.2 392.8h0M1333.4 389.5h0M1337.3 389.2h0M1341.1 388.8h0M1345 388.5h0M1348.9 388.2h0M1352.7 387.9h0M1356.6 387.6h0M1360.4 387.3h0M1364.2 387h0M1368.1 386.7h0M1371.9 386.4h0M1375.7 386.2h0M1379.5 385.9h0M1383.3 385.6h0M1387.1 385.4h0M1390.9 385.1h0" stroke="#e85120" stroke-width="1.5" stroke-linecap="round" fill="none"/><path d="M1765.5 349.7h0M1769.8 350h0M1774.2 350.3h0M1778.6 350.6h0M1782.9 350.9h0M1787.3 351.1h0M1791.7 351.4h0M1796.1 351.8h0M1800.5 352.1h0M1804.9 352.4h0M1809.3 352.7h0M1813.8 353h0M1818.2 353.4h0M1822.7 353.7h0M1827.2 354.1h0M1831.7 354.4h0M1578.7 360.3h0M1582.7 360.4h0M1586.6 360.4h0M1590.6 360.5h0M1594.5 360.5h0M1598.4 360.6h0M1602.4 360.6h0M1606.3 360.7h0M1610.3 360.8h0M1614.2 360.9h0M1618.2 360.9h0M1622.1 361h0M1626.1 361.1h0M1630.1 361.2h0M1634 361.3h0M1638 361.4h0M1642 361.5h0M1645.9 361.7h0M1649.9 361.8h0M1653.9 361.9h0M1657.9 362.1h0M1661.9 362.2h0M1665.9 362.3h0M1669.9 362.5h0M1673.9 362.6h0M1677.9 362.8h0M1681.9 363h0M1685.9 363.1h0M1689.9 363.3h0M1693.9 363.5h0M1698 363.7h0M1702 363.9h0M1706 364.1h0M1710.1 364.3h0M1714.1 364.5h0M1718.2 364.7h0M1722.3 364.9h0M1726.3 365.2h0M1730.4 365.4h0M1394.7 384.9h0M1398.5 384.7h0M1402.3 384.4h0M1406.1 384.2h0M1409.9 384h0M1413.7 383.8h0M1417.4 383.6h0M1421.2 383.4h0M1425 383.2h0M1428.7 383h0M1432.5 382.8h0M1436.3 382.6h0M1440 382.4h0M1296.2 411.2h0M1299.9 410.8h0M1303.7 410.4h0M1307.4 409.9h0M1311.1 409.5h0M1314.8 409.1h0M1318.6 408.7h0M1322.3 408.3h0M1326 408h0M1329.7 407.6h0M1333.4 407.2h0M1337 406.8h0M1340.7 406.5h0M1344.4 406.1h0M1348.1 405.8h0M1351.7 405.4h0M1355.4 405.1h0M1359 404.8h0M1362.7 404.5h0" stroke="#ec6c20" stroke-width="1.5" stroke-linecap="round" fill="none"/><path d="M1836.1 354.8h0M1840.7 355.1h0M1845.2 355.5h0M1849.7 355.9h0M1854.2 356.3h0M1858.8 356.7h0M1863.4 357.1h0M1867.9 357.5h0M1872.5 357.9h0M1877.1 358.3h0M1881.8 358.7h0M1734.5 365.6h0M1738.6 365.9h0M1742.7 366.1h0M1746.8 366.4h0M1750.9 366.7h0M1755 366.9h0M1759.1 367.2h0M1763.3 367.5h0M1767.4 367.8h0M1771.6 368h0M1775.7 368.3h0M1443.8 382.3h0M1447.5 382.1h0M1451.3 381.9h0M1455 381.8h0M1458.7 381.6h0M1462.5 381.5h0M1466.2 381.4h0M1470 381.2h0M1473.7 381.1h0M1477.4 381h0M1481.1 380.9h0M1484.9 380.8h0M1488.6 380.7h0M1492.3 380.6h0M1496 380.5h0M1499.8 380.4h0M1503.5 380.3h0M1507.2 380.2h0M1510.9 380.2h0M1514.6 380.1h0M1518.4 380h0M1522.1 380h0M1525.8 379.9h0M1529.5 379.9h0M1533.2 379.8h0M1536.9 379.8h0M1540.7 379.8h0M1544.4 379.8h0M1548.1 379.7h0M1551.8 379.7h0M1555.5 379.7h0M1559.2 379.7h0M1563 379.7h0M1566.7 379.7h0M1570.4 379.8h0M1574.1 379.8h0M1577.8 379.8h0M1581.6 379.8h0M1585.3 379.9h0M1589 379.9h0M1592.7 379.9h0M1596.5 380h0M1600.2 380.1h0M1603.9 380.1h0M1607.7 380.2h0M1611.4 380.3h0M1615.1 380.3h0M1618.9 380.4h0M1622.6 380.5h0M1626.4 380.6h0M1630.1 380.7h0M1633.8 380.8h0M1637.6 380.9h0M1641.4 381h0M1645.1 381.2h0M1648.9 381.3h0M1652.6 381.4h0M1656.4 381.6h0M1660.2 381.7h0M1664 381.8h0M1667.7 382h0M1366.3 404.2h0M1370 403.8h0M1373.6 403.5h0M1377.2 403.2h0M1380.9 403h0M1384.5 402.7h0M1388.1 402.4h0M1391.7 402.1h0M1395.3 401.9h0M1399 401.6h0M1402.6 401.3h0M1406.2 401.1h0M1409.8 400.9h0" stroke="#f18620" stroke-width="1.5" stroke-linecap="round" fill="none"/><path d="M1886.4 359.2h0M1891 359.6h0M1895.7 360h0M1900.4 360.5h0M1905.1 360.9h0M1909.8 361.4h0M1914.5 361.9h0M1779.9 368.6h0M1784 368.9h0M1788.2 369.3h0M1792.4 369.6h0M1796.6 369.9h0M1800.8 370.2h0M1805 370.6h0M1809.3 370.9h0M1813.5 371.3h0M1817.7 371.6h0M1822 372h0M1826.2 372.4h0M1830.5 372.7h0M1671.5 382.2h0M1675.3 382.3h0M1679.1 382.5h0M1682.9 382.7h0M1686.7 382.8h0M1690.5 383h0M1694.3 383.2h0M1698.1 383.4h0M1701.9 383.6h0M1705.7 383.8h0M1709.6 384h0M1713.4 384.3h0M1717.2 384.5h0M1721.1 384.7h0M1413.4 400.6h0M1416.9 400.4h0M1420.5 400.2h0M1424.1 399.9h0M1427.7 399.7h0M1431.3 399.5h0M1434.9 399.3h0M1438.4 399.1h0M1442 398.9h0M1445.6 398.8h0M1449.1 398.6h0M1452.7 398.4h0M1456.3 398.2h0M1368.4 420h0M1371.9 419.7h0M1375.3 419.3h0M1378.8 419h0M1382.3 418.7h0M1385.7 418.4h0M1389.2 418.1h0" stroke="#f3a01f" stroke-width="1.5" stroke-linecap="round" fill="none"/><path d="M1919.2 362.4h0M1834.8 373.1h0M1839.1 373.5h0M1843.4 373.9h0M1847.7 374.3h0M1852 374.7h0M1856.4 375.1h0M1860.7 375.5h0M1865.1 376h0M1869.5 376.4h0M1724.9 385h0M1728.8 385.2h0M1732.6 385.5h0M1736.5 385.7h0M1740.4 386h0M1744.2 386.2h0M1748.1 386.5h0M1752 386.8h0M1755.9 387.1h0M1759.8 387.4h0M1459.8 398.1h0M1463.4 397.9h0M1467 397.8h0M1470.5 397.6h0M1474.1 397.5h0M1477.6 397.4h0M1481.2 397.2h0M1484.7 397.1h0M1488.3 397h0M1491.8 396.9h0M1495.4 396.8h0M1498.9 396.7h0M1502.4 396.6h0M1523.7 396.1h0M1527.2 396.1h0M1530.8 396h0M1534.3 396h0M1537.8 395.9h0M1541.4 395.9h0M1544.9 395.9h0M1548.5 395.8h0M1552 395.8h0M1555.5 395.8h0M1559.1 395.8h0M1562.6 395.8h0M1566.2 395.8h0M1569.7 395.8h0M1573.3 395.8h0M1576.8 395.8h0M1580.3 395.9h0M1583.9 395.9h0M1587.4 395.9h0M1591 396h0M1594.5 396h0M1598.1 396.1h0M1601.6 396.1h0M1605.2 396.2h0M1608.7 396.3h0M1612.3 396.3h0M1615.9 396.4h0M1619.4 396.5h0M1623 396.6h0M1626.6 396.7h0M1630.1 396.8h0M1633.7 396.9h0M1637.3 397h0M1640.9 397.1h0M1644.4 397.2h0M1648 397.4h0M1651.6 397.5h0M1655.2 397.6h0M1658.8 397.8h0M1662.4 397.9h0M1666 398.1h0M1669.6 398.2h0M1673.2 398.4h0M1676.8 398.6h0M1680.4 398.7h0M1684 398.9h0M1392.6 417.8h0M1396 417.5h0M1399.5 417.2h0M1402.9 417h0M1406.3 416.7h0M1409.8 416.4h0M1413.2 416.2h0M1416.6 415.9h0M1420 415.7h0M1423.5 415.5h0M1426.9 415.2h0M1430.3 415h0" stroke="#f2b81c" stroke-width="1.5" stroke-linecap="round" fill="none"/><path d="M1873.8 376.9h0M1878.2 377.3h0M1882.6 377.8h0M1887.1 378.2h0M1891.5 378.7h0M1895.9 379.2h0M1900.4 379.6h0M1904.9 380.1h0M1763.7 387.7h0M1767.6 388h0M1771.5 388.3h0M1775.5 388.6h0M1779.4 388.9h0M1783.3 389.2h0M1787.3 389.6h0M1791.3 389.9h0M1795.2 390.2h0M1799.2 390.6h0M1803.2 391h0M1807.2 391.3h0M1811.2 391.7h0M1506 396.5h0M1509.5 396.4h0M1513.1 396.3h0M1516.6 396.3h0M1520.1 396.2h0M1687.6 399.1h0M1691.3 399.3h0M1694.9 399.5h0M1698.5 399.7h0M1702.1 399.9h0M1433.7 414.8h0M1437.1 414.6h0M1440.5 414.3h0M1443.9 414.1h0M1447.3 413.9h0M1450.7 413.8h0M1454.1 413.6h0M1457.5 413.4h0M1460.9 413.2h0M1464.3 413h0M1467.7 412.9h0M1471.1 412.7h0M1552.2 410.6h0M1555.6 410.6h0M1559 410.6h0M1562.3 410.6h0M1565.7 410.6h0M1569.1 410.6h0M1572.5 410.6h0M1575.9 410.6h0M1579.3 410.6h0M1582.6 410.6h0M1586 410.6h0M1589.4 410.7h0M1592.8 410.7h0M1596.2 410.8h0M1599.6 410.8h0M1603 410.9h0M1606.4 410.9h0M1609.8 411h0M1613.2 411.1h0M1616.6 411.1h0M1620 411.2h0M1623.4 411.3h0M1626.8 411.4h0M1630.2 411.5h0M1633.6 411.6h0M1637 411.7h0M1640.4 411.8h0M1643.8 412h0M1647.2 412.1h0" stroke="#f1d01a" stroke-width="1.5" stroke-linecap="round" fill="none"/><path d="M1909.4 380.6h0M1913.9 381.1h0M1918.4 381.7h0M1815.2 392.1h0M1819.2 392.4h0M1823.2 392.8h0M1827.2 393.2h0M1831.3 393.6h0M1835.3 394h0M1839.4 394.5h0M1843.4 394.9h0M1847.5 395.3h0M1474.5 412.6h0M1477.9 412.4h0M1481.3 412.3h0M1484.6 412.1h0M1488 412h0M1491.4 411.9h0M1494.8 411.8h0M1498.2 411.7h0M1501.6 411.6h0M1504.9 411.4h0M1508.3 411.4h0M1511.7 411.3h0M1515.1 411.2h0M1518.4 411.1h0M1521.8 411h0M1525.2 411h0M1528.6 410.9h0M1532 410.8h0M1535.3 410.8h0M1538.7 410.7h0M1542.1 410.7h0M1545.5 410.7h0M1548.8 410.6h0M1650.6 412.2h0M1654.1 412.4h0M1657.5 412.5h0M1660.9 412.7h0M1664.4 412.8h0M1667.8 413h0M1671.2 413.1h0M1674.7 413.3h0M1678.1 413.5h0M1681.6 413.7h0M1685 413.9h0M1688.5 414.1h0M1691.9 414.3h0M1695.4 414.5h0" stroke="#f0e818" stroke-width="1.5" stroke-linecap="round" fill="none"/><path d="M1851.6 395.7h0M1855.7 396.2h0M1859.8 396.6h0M1863.9 397.1h0M1868.1 397.6h0M1872.2 398h0M1698.9 414.7h0M1702.3 414.9h0M1705.8 415.1h0M1709.3 415.4h0M1712.8 415.6h0M1716.2 415.8h0M1719.7 416.1h0M1723.2 416.3h0M1726.7 416.6h0" stroke="#d7ec1b" stroke-width="1.5" stroke-linecap="round" fill="none"/><path d="M1876.3 398.5h0M1880.5 399h0M1884.7 399.5h0M1888.9 400h0M1893.1 400.5h0M1730.2 416.8h0M1733.7 417.1h0M1737.2 417.4h0M1740.8 417.7h0M1744.3 418h0M1747.8 418.3h0M1751.3 418.6h0M1754.9 418.9h0M1758.4 419.2h0" stroke="#bcee1e" stroke-width="1.5" stroke-linecap="round" fill="none"/><path d="M1897.3 401h0M1901.5 401.5h0M1905.7 402h0M1762 419.5h0M1765.5 419.8h0M1769.1 420.1h0M1772.6 420.5h0M1776.2 420.8h0M1779.8 421.2h0M1783.4 421.5h0M1786.9 421.9h0" stroke="#9dee28" stroke-width="1.5" stroke-linecap="round" fill="none"/><path d="M1909.9 402.6h0" stroke="#79ec37" stroke-width="1.5" stroke-linecap="round" fill="none"/><path d="M1312.4 426.2h0M1315.9 425.7h0M1319.4 425.3h0M1323 424.9h0M1326.5 424.5h0M1330 424h0M1333.5 423.6h0M1337 423.2h0M1340.5 422.9h0M1344 422.5h0M1347.5 422.1h0M1351 421.7h0M1354.5 421.4h0M1358 421h0M1361.5 420.7h0M1364.9 420.3h0" stroke="#f3a01f" stroke-width="2.0" stroke-linecap="round" fill="none"/><path d="M1790.5 422.3h0M1794.1 422.6h0M1797.7 423h0M1801.4 423.4h0M1805 423.8h0M1808.6 424.2h0M1812.2 424.6h0M1712.7 428.5h0M1716 428.7h0M1719.4 429h0M1722.7 429.2h0M1726.1 429.5h0M1729.4 429.8h0M1732.8 430h0M1736.2 430.3h0M1499.7 437.2h0M1502.8 437.1h0M1505.9 437h0M1664.8 438.1h0M1667.9 438.3h0M1671.1 438.5h0M1674.2 438.6h0M1677.4 438.8h0M1680.6 439h0M1683.7 439.2h0M1686.9 439.4h0M1690.1 439.6h0M1693.2 439.8h0M1441.6 451.3h0M1444.6 451.1h0M1447.6 450.8h0M1450.6 450.6h0M1453.6 450.4h0M1456.6 450.2h0M1459.6 449.9h0M1462.6 449.7h0M1465.6 449.5h0M1468.6 449.3h0M1471.6 449.1h0M1474.5 448.9h0M1477.5 448.8h0M1480.5 448.6h0M1483.5 448.4h0M1486.5 448.3h0M1489.5 448.1h0M1492.5 447.9h0M1495.5 447.8h0M1498.5 447.6h0M1501.5 447.5h0M1504.4 447.4h0M1507.4 447.3h0M1510.4 447.1h0M1513.4 447h0M1516.4 446.9h0M1519.4 446.8h0M1522.4 446.7h0M1525.3 446.6h0M1528.3 446.5h0M1531.3 446.4h0M1534.3 446.4h0M1537.3 446.3h0M1540.3 446.2h0M1543.3 446.2h0M1546.3 446.1h0M1549.2 446.1h0M1552.2 446h0M1555.2 446h0M1558.2 446h0M1606.1 446.2h0M1609.2 446.2h0M1612.2 446.3h0M1615.2 446.4h0M1618.2 446.4h0M1621.2 446.5h0M1624.2 446.6h0M1627.2 446.7h0M1630.2 446.8h0M1633.3 446.9h0M1636.3 447h0M1639.3 447.1h0M1642.3 447.2h0M1645.3 447.4h0M1648.4 447.5h0M1651.4 447.6h0M1654.4 447.8h0M1657.5 447.9h0M1660.5 448.1h0M1386.3 469.7h0M1389.2 469.3h0M1392.1 468.9h0M1395 468.6h0M1397.9 468.2h0M1400.8 467.9h0M1403.7 467.5h0M1406.6 467.2h0M1409.4 466.9h0M1412.3 466.5h0M1415.2 466.2h0M1418.1 465.9h0M1421 465.6h0M1423.8 465.3h0M1426.7 465h0M1429.6 464.7h0M1558.4 457.5h0M1561.3 457.5h0M1564.1 457.4h0M1567 457.4h0M1569.9 457.4h0M1572.7 457.4h0M1575.6 457.4h0M1578.5 457.4h0M1581.3 457.4h0M1584.2 457.4h0M1587.1 457.4h0M1589.9 457.4h0M1592.8 457.4h0M1372.9 481.9h0M1375.7 481.5h0M1378.5 481.1h0M1381.3 480.7h0M1384.1 480.3h0M1140 491.3h0M1136.5 492.2h0M1132.9 493.2h0M1129.4 494.1h0M1125.9 495.1h0M1122.3 496.1h0M1118.8 497h0M1115.2 498h0M1111.6 499h0M1167.6 491.7h0M1164.2 492.6h0M1160.8 493.5h0M1157.4 494.4h0M1154 495.3h0M1150.6 496.2h0M1147.2 497.2h0M1143.8 498.1h0M1140.3 499h0M1136.9 500h0M1190.4 493.1h0M1187.1 494h0M1183.8 494.8h0M1180.6 495.7h0M1177.3 496.5h0M1174 497.4h0M1170.7 498.3h0M1167.4 499.2h0M1217 494.8h0M1213.9 495.5h0M1210.7 496.3h0M1207.6 497.1h0M1204.5 497.9h0M1201.3 498.7h0M1198.1 499.6h0M1245.1 495.7h0M1242.1 496.4h0M1239.1 497.1h0M1236 497.9h0M1233 498.6h0M1230 499.4h0M1270.4 496h0M1267.4 496.7h0M1264.5 497.3h0M1261.6 498h0M1258.6 498.7h0M1255.7 499.4h0M1317 491.7h0M1314.2 492.3h0M1311.4 492.9h0M1308.6 493.5h0M1305.7 494h0M1302.9 494.6h0M1300.1 495.2h0M1297.2 495.8h0M1294.4 496.5h0M1291.5 497.1h0M1288.7 497.7h0M1285.9 498.3h0M1280.2 499.6h0M1323.2 496.2h0M1320.4 496.7h0M1314.9 497.9h0M1312.1 498.5h0M1309.3 499.1h0M1306.6 499.7h0" stroke="#9dee28" stroke-width="2.0" stroke-linecap="round" fill="none"/><path d="M1815.9 425h0M1819.5 425.4h0M1823.2 425.9h0M1826.8 426.3h0M1830.5 426.7h0M1834.2 427.2h0M1837.8 427.6h0M1841.5 428.1h0M1845.2 428.6h0M1739.5 430.6h0M1742.9 430.9h0M1746.3 431.2h0M1749.7 431.5h0M1753 431.8h0M1756.4 432.1h0M1759.8 432.5h0M1763.2 432.8h0M1766.6 433.1h0M1770.1 433.5h0M1773.5 433.8h0M1776.9 434.2h0M1780.3 434.5h0M1696.4 440h0M1699.6 440.3h0M1702.8 440.5h0M1706 440.7h0M1709.2 441h0M1712.4 441.2h0M1715.6 441.5h0M1718.8 441.7h0M1722 442h0M1663.5 448.2h0M1666.6 448.4h0M1669.6 448.6h0M1672.7 448.8h0M1675.7 448.9h0M1678.8 449.1h0M1681.8 449.3h0M1684.9 449.5h0M1687.9 449.7h0M1691 449.9h0M1432.5 464.4h0M1435.3 464.1h0M1438.2 463.9h0M1441.1 463.6h0M1444 463.3h0M1446.8 463.1h0M1449.7 462.8h0M1452.6 462.6h0M1455.4 462.3h0M1458.3 462.1h0M1461.2 461.9h0M1464 461.7h0M1466.9 461.4h0M1469.7 461.2h0M1472.6 461h0M1475.5 460.8h0M1478.3 460.6h0M1481.2 460.4h0M1484 460.3h0M1486.9 460.1h0M1489.8 459.9h0M1506.9 459h0M1509.8 458.9h0M1512.6 458.8h0M1515.5 458.6h0M1518.4 458.5h0M1521.2 458.4h0M1524.1 458.3h0M1526.9 458.2h0M1529.8 458.1h0M1532.6 458h0M1535.5 457.9h0M1538.4 457.9h0M1541.2 457.8h0M1544.1 457.7h0M1546.9 457.7h0M1549.8 457.6h0M1552.7 457.6h0M1555.5 457.5h0M1595.7 457.5h0M1598.6 457.5h0M1601.4 457.6h0M1604.3 457.6h0M1607.2 457.7h0M1610.1 457.7h0M1612.9 457.8h0M1615.8 457.9h0M1618.7 457.9h0M1621.6 458h0M1624.5 458.1h0M1627.4 458.2h0M1630.3 458.3h0M1633.2 458.4h0M1636 458.5h0M1638.9 458.6h0M1641.8 458.7h0M1644.7 458.9h0M1647.6 459h0M1650.5 459.1h0M1386.8 479.9h0M1389.6 479.5h0M1392.4 479.1h0M1395.2 478.7h0M1398 478.4h0M1400.7 478h0M1403.5 477.6h0M1406.3 477.3h0M1409.1 476.9h0M1411.8 476.6h0M1414.6 476.3h0M1417.4 475.9h0M1420.2 475.6h0M1422.9 475.3h0M1425.7 475h0M1428.5 474.7h0M1431.2 474.4h0M1434 474.1h0M1544.3 466.9h0M1547.1 466.9h0M1549.9 466.8h0M1552.6 466.7h0M1555.4 466.7h0M1558.2 466.7h0M1560.9 466.6h0M1563.7 466.6h0M1566.4 466.6h0M1569.2 466.5h0M1572 466.5h0M1574.7 466.5h0M1577.5 466.5h0M1580.3 466.5h0M1583 466.5h0M1585.8 466.5h0M1588.6 466.5h0M1591.4 466.5h0M1594.1 466.6h0M1596.9 466.6h0M1599.7 466.6h0M1602.5 466.7h0M1605.2 466.7h0M1382.5 490.8h0" stroke="#79ec37" stroke-width="2.0" stroke-linecap="round" fill="none"/><path d="M1848.9 429h0M1852.6 429.5h0M1856.4 430h0M1860.1 430.5h0M1863.8 431h0M1783.7 434.9h0M1787.2 435.3h0M1790.6 435.7h0M1794.1 436h0M1797.5 436.4h0M1801 436.8h0M1804.5 437.2h0M1807.9 437.7h0M1811.4 438.1h0M1814.9 438.5h0M1818.4 438.9h0M1821.9 439.4h0M1825.4 439.8h0M1828.9 440.3h0M1725.2 442.2h0M1728.4 442.5h0M1731.6 442.8h0M1734.8 443.1h0M1738.1 443.4h0M1741.3 443.7h0M1744.5 444h0M1747.7 444.3h0M1751 444.6h0M1754.2 444.9h0M1694.1 450.1h0M1697.1 450.4h0M1700.2 450.6h0M1703.3 450.8h0M1706.3 451.1h0M1709.4 451.3h0M1712.5 451.6h0M1715.6 451.8h0M1718.7 452.1h0M1492.6 459.8h0M1495.5 459.6h0M1498.3 459.4h0M1501.2 459.3h0M1504.1 459.2h0M1653.4 459.3h0M1656.3 459.4h0M1659.2 459.6h0M1662.2 459.7h0M1665.1 459.9h0M1668 460h0M1670.9 460.2h0M1673.8 460.4h0M1676.7 460.6h0M1679.7 460.8h0M1682.6 461h0M1436.8 473.8h0M1439.5 473.5h0M1442.3 473.2h0M1445.1 472.9h0M1447.8 472.7h0M1450.6 472.4h0M1453.3 472.2h0M1456.1 471.9h0M1458.9 471.7h0M1461.6 471.4h0M1464.4 471.2h0M1467.1 471h0M1469.9 470.8h0M1472.7 470.5h0M1475.4 470.3h0M1478.2 470.1h0M1480.9 469.9h0M1483.7 469.7h0M1486.4 469.6h0M1489.2 469.4h0M1492 469.2h0M1494.7 469h0M1497.5 468.9h0M1500.2 468.7h0M1503 468.6h0M1505.7 468.4h0M1508.5 468.3h0M1511.3 468.1h0M1514 468h0M1516.8 467.9h0M1519.5 467.8h0M1522.3 467.6h0M1525 467.5h0M1527.8 467.4h0M1530.6 467.3h0M1533.3 467.2h0M1536.1 467.2h0M1538.8 467.1h0M1541.6 467h0M1608 466.8h0M1610.8 466.8h0M1613.6 466.9h0M1616.3 467h0M1619.1 467h0M1621.9 467.1h0M1624.7 467.2h0M1627.5 467.3h0M1630.3 467.4h0M1633.1 467.5h0M1635.9 467.6h0M1638.7 467.7h0M1641.4 467.8h0M1644.2 468h0M1647 468.1h0M1649.8 468.2h0M1652.6 468.4h0M1655.4 468.5h0M1385.2 490.4h0M1387.9 490h0M1390.5 489.6h0M1393.2 489.2h0M1395.9 488.8h0M1398.5 488.4h0M1401.2 488h0M1403.9 487.6h0M1406.5 487.3h0M1409.2 486.9h0M1411.9 486.5h0M1414.5 486.2h0M1417.2 485.8h0M1419.9 485.5h0M1422.5 485.2h0M1425.2 484.8h0M1427.9 484.5h0M1430.5 484.2h0M1433.2 483.9h0M1435.8 483.6h0M1438.5 483.3h0M1536.8 476.2h0M1539.4 476.1h0M1542.1 476.1h0M1544.8 476h0M1547.4 475.9h0M1550.1 475.8h0M1552.7 475.8h0M1555.4 475.7h0M1558.1 475.7h0M1560.7 475.6h0M1563.4 475.6h0M1566.1 475.6h0M1568.7 475.5h0M1571.4 475.5h0M1574.1 475.5h0M1576.7 475.5h0M1579.4 475.5h0M1582.1 475.5h0M1584.7 475.5h0M1587.4 475.5h0M1590.1 475.5h0M1592.8 475.5h0M1595.4 475.6h0M1598.1 475.6h0M1600.8 475.6h0M1603.5 475.7h0M1606.1 475.7h0M1608.8 475.8h0M1611.5 475.8h0M1614.2 475.9h0" stroke="#55e946" stroke-width="2.0" stroke-linecap="round" fill="none"/><path d="M1867.6 431.5h0M1871.3 432h0M1875.1 432.6h0M1878.8 433.1h0M1882.6 433.6h0M1832.4 440.7h0M1835.9 441.2h0M1839.4 441.7h0M1843 442.1h0M1846.5 442.6h0M1850.1 443.1h0M1853.6 443.6h0M1757.5 445.3h0M1760.7 445.6h0M1764 445.9h0M1767.2 446.3h0M1770.5 446.6h0M1773.8 447h0M1777.1 447.4h0M1780.3 447.7h0M1783.6 448.1h0M1786.9 448.5h0M1790.2 448.9h0M1793.5 449.3h0M1796.8 449.7h0M1800.1 450.1h0M1803.4 450.5h0M1806.7 450.9h0M1810.1 451.4h0M1721.7 452.3h0M1724.8 452.6h0M1727.9 452.9h0M1731 453.2h0M1734.1 453.5h0M1737.2 453.8h0M1740.4 454.1h0M1743.5 454.4h0M1746.6 454.7h0M1749.7 455h0M1685.5 461.2h0M1688.4 461.4h0M1691.4 461.6h0M1694.3 461.8h0M1697.2 462h0M1700.2 462.3h0M1703.1 462.5h0M1706.1 462.7h0M1709 463h0M1712 463.2h0M1658.3 468.7h0M1661.1 468.8h0M1663.9 469h0M1666.7 469.1h0M1669.5 469.3h0M1672.3 469.5h0M1675.1 469.7h0M1677.9 469.9h0M1680.8 470.1h0M1683.6 470.3h0M1686.4 470.5h0M1441.2 483h0M1443.8 482.7h0M1446.5 482.4h0M1449.1 482.2h0M1451.8 481.9h0M1454.4 481.6h0M1457.1 481.4h0M1459.8 481.1h0M1462.4 480.9h0M1465.1 480.6h0M1467.7 480.4h0M1470.4 480.2h0M1473 479.9h0M1475.7 479.7h0M1478.3 479.5h0M1481 479.3h0M1483.7 479.1h0M1486.3 478.9h0M1489 478.7h0M1491.6 478.5h0M1494.3 478.4h0M1496.9 478.2h0M1499.6 478h0M1502.2 477.8h0M1504.9 477.7h0M1507.6 477.5h0M1510.2 477.4h0M1512.9 477.3h0M1515.5 477.1h0M1518.2 477h0M1520.8 476.9h0M1523.5 476.7h0M1526.1 476.6h0M1528.8 476.5h0M1531.5 476.4h0M1534.1 476.3h0M1616.9 475.9h0M1619.5 476h0M1622.2 476.1h0M1624.9 476.2h0M1627.6 476.3h0M1630.3 476.4h0M1633 476.5h0M1635.7 476.6h0M1638.4 476.7h0M1641.1 476.8h0M1643.8 476.9h0M1646.5 477.1h0M1649.2 477.2h0M1651.9 477.3h0M1654.6 477.5h0M1657.3 477.6h0M1660 477.8h0M1390.9 498.6h0M1393.5 498.2h0M1396.1 497.7h0M1398.7 497.3h0M1401.2 497h0M1403.8 496.6h0M1406.4 496.2h0M1408.9 495.8h0M1411.5 495.4h0M1414.1 495.1h0M1416.6 494.7h0M1419.2 494.4h0M1421.8 494h0M1424.4 493.7h0M1426.9 493.3h0M1429.5 493h0M1432.1 492.7h0M1434.6 492.4h0M1437.2 492h0M1439.8 491.7h0M1442.3 491.4h0M1444.9 491.1h0M1447.5 490.9h0M1450 490.6h0M1452.6 490.3h0M1524.4 484.8h0M1527 484.7h0M1529.6 484.5h0M1532.1 484.4h0M1534.7 484.3h0M1537.3 484.2h0M1539.8 484.1h0M1542.4 484.1h0M1545 484h0M1547.6 483.9h0M1550.1 483.8h0M1552.7 483.8h0M1555.3 483.7h0M1557.9 483.7h0M1560.4 483.6h0M1563 483.6h0M1565.6 483.5h0M1568.2 483.5h0M1570.7 483.5h0M1573.3 483.4h0M1575.9 483.4h0M1578.5 483.4h0M1581.1 483.4h0M1583.6 483.4h0M1586.2 483.4h0M1588.8 483.4h0M1591.4 483.4h0M1594 483.5h0M1596.6 483.5h0M1599.2 483.5h0M1601.8 483.5h0M1604.3 483.6h0M1606.9 483.6h0M1609.5 483.7h0M1612.1 483.7h0M1614.7 483.8h0M1617.3 483.9h0M1619.9 483.9h0M1622.5 484h0M1625.1 484.1h0M1627.7 484.2h0" stroke="#3ce85e" stroke-width="2.0" stroke-linecap="round" fill="none"/><path d="M1886.4 434.2h0M1890.2 434.7h0M1894 435.3h0M1857.2 444.1h0M1860.8 444.6h0M1864.3 445.2h0M1867.9 445.7h0M1871.5 446.2h0M1875.1 446.8h0M1813.4 451.8h0M1816.7 452.3h0M1820.1 452.7h0M1823.4 453.2h0M1826.8 453.6h0M1830.1 454.1h0M1833.5 454.6h0M1836.9 455.1h0M1840.2 455.5h0M1843.6 456h0M1752.8 455.3h0M1756 455.7h0M1759.1 456h0M1762.2 456.4h0M1765.4 456.7h0M1768.5 457.1h0M1771.7 457.4h0M1774.8 457.8h0M1778 458.2h0M1781.1 458.6h0M1784.3 458.9h0M1787.5 459.3h0M1790.6 459.7h0M1793.8 460.1h0M1797 460.6h0M1800.2 461h0M1803.4 461.4h0M1714.9 463.5h0M1717.9 463.8h0M1720.8 464h0M1723.8 464.3h0M1726.7 464.6h0M1729.7 464.9h0M1732.7 465.2h0M1735.6 465.5h0M1738.6 465.8h0M1741.6 466.1h0M1744.6 466.4h0M1689.2 470.7h0M1692.1 470.9h0M1694.9 471.1h0M1697.7 471.3h0M1700.6 471.6h0M1703.4 471.8h0M1706.2 472.1h0M1709.1 472.3h0M1711.9 472.6h0M1714.8 472.8h0M1662.7 477.9h0M1665.4 478.1h0M1668.1 478.3h0M1670.8 478.4h0M1673.5 478.6h0M1676.3 478.8h0M1679 479h0M1681.7 479.2h0M1684.4 479.4h0M1687.1 479.6h0M1689.9 479.8h0M1455.1 490h0M1457.7 489.8h0M1460.3 489.5h0M1462.8 489.2h0M1465.4 489h0M1468 488.7h0M1470.5 488.5h0M1473.1 488.3h0M1475.7 488.1h0M1478.2 487.8h0M1480.8 487.6h0M1483.4 487.4h0M1485.9 487.2h0M1488.5 487h0M1491.1 486.8h0M1493.6 486.6h0M1496.2 486.4h0M1498.8 486.3h0M1501.3 486.1h0M1503.9 485.9h0M1506.4 485.8h0M1509 485.6h0M1511.6 485.4h0M1514.1 485.3h0M1516.7 485.2h0M1519.3 485h0M1521.9 484.9h0M1630.3 484.3h0M1632.9 484.4h0M1635.5 484.5h0M1638.1 484.6h0M1640.7 484.7h0M1643.3 484.8h0M1646 485h0M1648.6 485.1h0M1651.2 485.2h0M1653.8 485.4h0M1656.4 485.5h0M1659 485.7h0M1661.6 485.8h0M1664.3 486h0M1666.9 486.1h0M1438.9 500.5h0M1441.3 500.1h0M1443.8 499.8h0M1446.3 499.5h0M1448.8 499.2h0M1451.2 498.9h0M1453.7 498.7h0M1456.2 498.4h0M1458.7 498.1h0M1461.1 497.8h0M1463.6 497.6h0M1466.1 497.3h0M1468.5 497.1h0M1471 496.8h0M1473.5 496.6h0M1476 496.3h0M1478.4 496.1h0M1480.9 495.9h0M1483.4 495.7h0M1485.9 495.5h0M1488.3 495.2h0M1490.8 495h0M1493.3 494.8h0M1495.8 494.7h0M1498.2 494.5h0M1500.7 494.3h0M1503.2 494.1h0M1505.7 493.9h0M1508.2 493.8h0M1510.6 493.6h0M1513.1 493.5h0M1515.6 493.3h0M1518.1 493.2h0M1520.5 493h0M1523 492.9h0M1525.5 492.8h0M1528 492.7h0M1530.5 492.5h0M1532.9 492.4h0M1535.4 492.3h0M1537.9 492.2h0M1540.4 492.1h0M1542.9 492h0M1545.4 491.9h0M1547.9 491.9h0M1550.3 491.8h0M1552.8 491.7h0M1555.3 491.7h0M1557.8 491.6h0M1560.3 491.5h0M1562.8 491.5h0M1565.3 491.4h0M1567.8 491.4h0M1570.3 491.4h0M1572.7 491.3h0M1575.2 491.3h0M1577.7 491.3h0M1580.2 491.3h0M1582.7 491.3h0M1585.2 491.3h0M1587.7 491.3h0M1590.2 491.3h0M1592.7 491.3h0M1595.2 491.3h0M1597.7 491.4h0M1600.2 491.4h0M1602.7 491.4h0M1605.2 491.5h0M1607.7 491.5h0M1610.2 491.6h0M1612.7 491.6h0M1615.3 491.7h0M1617.8 491.7h0M1620.3 491.8h0M1622.8 491.9h0M1625.3 492h0M1627.8 492.1h0M1630.3 492.1h0M1632.8 492.2h0M1635.4 492.3h0M1637.9 492.5h0M1574.4 498h0M1576.9 498h0M1579.3 498h0M1581.7 498h0M1584.1 498h0M1586.6 498h0M1589 498h0M1591.4 498h0M1593.8 498h0M1596.3 498h0" stroke="#35e882" stroke-width="2.0" stroke-linecap="round" fill="none"/><path d="M1897.8 435.9h0M1901.6 436.4h0M1905.5 437h0M1878.7 447.3h0M1882.3 447.9h0M1886 448.5h0M1889.6 449h0M1893.2 449.6h0M1847 456.5h0M1850.4 457.1h0M1853.8 457.6h0M1857.2 458.1h0M1860.6 458.6h0M1864 459.2h0M1867.4 459.7h0M1870.9 460.3h0M1806.6 461.8h0M1809.8 462.3h0M1813 462.7h0M1816.2 463.2h0M1819.4 463.6h0M1822.6 464.1h0M1825.8 464.6h0M1829.1 465.1h0M1832.3 465.5h0M1835.5 466h0M1838.8 466.5h0M1747.6 466.7h0M1750.5 467.1h0M1753.5 467.4h0M1756.5 467.7h0M1759.5 468.1h0M1762.5 468.4h0M1765.5 468.8h0M1768.5 469.2h0M1771.6 469.5h0M1774.6 469.9h0M1777.6 470.3h0M1780.6 470.7h0M1783.6 471.1h0M1786.7 471.5h0M1789.7 471.9h0M1717.6 473.1h0M1720.5 473.4h0M1723.3 473.6h0M1726.2 473.9h0M1729.1 474.2h0M1731.9 474.5h0M1734.8 474.8h0M1737.6 475.1h0M1740.5 475.4h0M1743.4 475.8h0M1746.3 476.1h0M1749.2 476.4h0M1692.6 480h0M1695.3 480.3h0M1698.1 480.5h0M1700.8 480.7h0M1703.5 481h0M1706.3 481.2h0M1709 481.5h0M1711.7 481.7h0M1714.5 482h0M1717.2 482.3h0M1720 482.5h0M1669.5 486.3h0M1672.1 486.5h0M1674.8 486.7h0M1677.4 486.9h0M1680 487.1h0M1682.7 487.3h0M1685.3 487.5h0M1687.9 487.7h0M1690.6 487.9h0M1693.2 488.1h0M1695.8 488.4h0M1698.5 488.6h0M1640.4 492.6h0M1642.9 492.7h0M1645.4 492.8h0M1648 492.9h0M1650.5 493.1h0M1653 493.2h0M1655.6 493.4h0M1658.1 493.5h0M1660.6 493.7h0M1663.1 493.8h0M1665.7 494h0M1668.2 494.2h0M1670.7 494.3h0M1673.3 494.5h0M1675.8 494.7h0M1504.6 500.9h0M1507 500.8h0M1509.4 500.6h0M1511.8 500.4h0M1514.2 500.3h0M1516.6 500.1h0M1519 500h0M1521.4 499.8h0M1523.8 499.7h0M1526.2 499.6h0M1528.6 499.4h0M1531 499.3h0M1533.4 499.2h0M1535.8 499.1h0M1538.2 499h0M1540.6 498.9h0M1543.1 498.8h0M1545.5 498.7h0M1547.9 498.6h0M1550.3 498.5h0M1552.7 498.5h0M1555.1 498.4h0M1557.5 498.3h0M1559.9 498.3h0M1562.4 498.2h0M1564.8 498.2h0M1567.2 498.1h0M1569.6 498.1h0M1572 498.1h0M1598.7 498h0M1601.1 498.1h0M1603.5 498.1h0M1606 498.1h0M1608.4 498.2h0M1610.8 498.2h0M1613.3 498.3h0M1615.7 498.3h0M1618.1 498.4h0M1620.6 498.5h0M1623 498.6h0M1625.5 498.6h0M1627.9 498.7h0M1630.3 498.8h0M1632.8 498.9h0M1635.2 499h0M1637.7 499.1h0M1640.1 499.2h0M1642.6 499.3h0M1645 499.5h0M1647.5 499.6h0M1649.9 499.7h0M1652.4 499.9h0M1654.8 500h0" stroke="#2de9a6" stroke-width="2.0" stroke-linecap="round" fill="none"/><path d="M1326.2 438.9h0M1329.6 438.4h0M1332.9 438h0M1336.3 437.6h0M1339.6 437.2h0M1343 436.8h0M1346.3 436.4h0M1349.7 436h0M1353 435.6h0M1356.3 435.2h0M1359.7 434.8h0M1363 434.5h0M1366.3 434.1h0M1369.6 433.7h0M1372.9 433.4h0" stroke="#f2b81c" stroke-width="2.0" stroke-linecap="round" fill="none"/><path d="M1376.2 433.1h0M1379.6 432.7h0M1382.9 432.4h0M1386.2 432.1h0M1389.5 431.7h0M1392.8 431.4h0M1396.1 431.1h0M1399.3 430.8h0M1402.6 430.5h0M1405.9 430.2h0M1409.2 430h0M1412.5 429.7h0M1415.8 429.4h0M1339.8 451.4h0M1240.7 436.3h0M1112.4 419.2h0M1113.3 419.6h0M1115.2 419.8h0M1116.3 419.7h0M1117.9 420.2h0M1118.7 420.5h0M1120.4 421.2h0M1121.8 422.2h0M1123.8 421.6h0M1125.2 422.5h0M1126 423h0M1127 423.3h0M1129.1 423.8h0M1129.9 425h0M1131.8 425.8h0M1133 426.4h0M1133.9 427.1h0M1135.7 427.1h0M1112 427h0M1114.3 427.7h0M1115.1 427.8h0" stroke="#f1d01a" stroke-width="2.0" stroke-linecap="round" fill="none"/><path d="M1419 429.2h0M1422.3 428.9h0M1425.6 428.6h0M1428.9 428.4h0M1432.1 428.2h0M1435.4 427.9h0M1438.7 427.7h0M1441.9 427.5h0M1445.2 427.3h0M1448.4 427h0M1451.7 426.8h0M1454.9 426.6h0M1561.9 423.2h0M1565.2 423.2h0M1568.4 423.2h0M1571.6 423.2h0M1574.9 423.2h0M1578.1 423.2h0M1581.4 423.2h0M1584.6 423.3h0M1587.9 423.3h0M1591.1 423.3h0M1594.4 423.4h0M1597.6 423.4h0M1600.9 423.5h0M1604.1 423.5h0M1607.4 423.6h0M1610.6 423.6h0M1613.9 423.7h0M1617.1 423.8h0M1620.4 423.9h0M1623.7 424h0M1626.9 424.1h0M1343 451h0M1346.2 450.6h0M1349.4 450.1h0M1352.6 449.7h0M1355.7 449.3h0M1358.9 448.9h0M1362.1 448.5h0M1365.3 448.1h0M1368.4 447.8h0M1371.6 447.4h0M1374.8 447h0M1377.9 446.7h0M1381.1 446.3h0M1384.2 445.9h0M1387.4 445.6h0M1390.5 445.3h0M1393.7 444.9h0M1396.8 444.6h0M1400 444.3h0M1237 436.9h0M1233.4 437.5h0M1229.7 438.1h0M1226 438.7h0M1249.7 442.8h0M1246.1 443.4h0M1242.5 444h0M1238.9 444.6h0M1235.4 445.2h0M1228.2 446.4h0M1224.6 447.1h0M1220.9 447.7h0M1258.2 449h0M1254.8 449.6h0M1247.8 450.8h0M1244.3 451.4h0M1240.8 452h0M1267 455.4h0M1263.6 456h0M1260.3 456.6h0M1275.4 461.5h0M1135.9 428.6h0M1137.7 429.6h0M1138.8 430.1h0M1140.2 430.5h0M1141.2 431.7h0M1142.3 432.4h0M1143.3 433.5h0M1144.7 434h0M1145.5 434.6h0M1147 435.5h0M1147.7 437.4h0M1149.5 437.6h0M1150.5 438.4h0M1152 441.6h0M1153 442.8h0M1153.9 443.5h0M1154.6 444.5h0M1156.2 445.8h0M1156 446.6h0M1157.4 448h0M1118.1 429.3h0M1119.5 428.9h0M1122.5 430h0M1123.8 430.5h0M1125.3 431.3h0M1125.7 431.8h0M1127 432.3h0M1128.6 433.6h0M1129.5 433.8h0M1131.7 434.4h0M1131.9 435.5h0M1133.5 435.7h0M1135.2 436.9h0M1135.6 437.7h0M1136.6 439h0M1137.8 440h0M1139.1 441h0M1140.4 442h0M1141.1 442.4h0M1142.4 444.2h0M1144.1 444.6h0M1144.5 445.3h0M1145.3 447.3h0M1146.4 447.6h0M1110.7 435.6h0M1112.7 435.3h0M1114.1 435.8h0M1117 436.6h0M1119.5 437.3h0M1120.2 438.8h0M1122.5 439.4h0M1123.5 439.6h0M1125 440.1h0M1126.4 441h0M1127.3 442.2h0M1128.5 442.6h0M1130.6 444.4h0M1131.4 445.6h0M1134.4 446.9h0M1111.6 443.3h0M1112.7 444.4h0M1113.5 444.8h0M1115.6 444.8h0M1117 445.4h0M1118 446h0M1118.9 446.3h0" stroke="#f0e818" stroke-width="2.0" stroke-linecap="round" fill="none"/><path d="M1458.2 426.4h0M1461.5 426.3h0M1464.7 426.1h0M1468 425.9h0M1471.2 425.7h0M1474.5 425.6h0M1477.7 425.4h0M1480.9 425.3h0M1484.2 425.1h0M1487.4 425h0M1490.7 424.8h0M1493.9 424.7h0M1497.2 424.6h0M1500.4 424.5h0M1503.6 424.3h0M1506.9 424.2h0M1510.1 424.1h0M1513.3 424h0M1516.6 423.9h0M1519.8 423.8h0M1523.1 423.8h0M1526.3 423.7h0M1529.5 423.6h0M1532.8 423.6h0M1536 423.5h0M1539.2 423.4h0M1542.5 423.4h0M1545.7 423.4h0M1549 423.3h0M1552.2 423.3h0M1555.4 423.3h0M1558.7 423.2h0M1630.2 424.2h0M1633.5 424.3h0M1636.7 424.4h0M1640 424.5h0M1643.3 424.6h0M1646.6 424.7h0M1649.8 424.9h0M1653.1 425h0M1656.4 425.2h0M1659.7 425.3h0M1663 425.5h0M1666.3 425.6h0M1669.6 425.8h0M1672.9 426h0M1676.2 426.1h0M1403.1 444h0M1406.3 443.7h0M1409.4 443.4h0M1412.5 443.1h0M1415.7 442.8h0M1418.8 442.5h0M1421.9 442.2h0M1425.1 442h0M1428.2 441.7h0M1431.3 441.4h0M1434.4 441.2h0M1437.6 440.9h0M1440.7 440.7h0M1574.1 435.7h0M1577.2 435.7h0M1580.3 435.8h0M1583.5 435.8h0M1586.6 435.8h0M1589.7 435.8h0M1592.8 435.9h0M1595.9 435.9h0M1599 435.9h0M1350.8 461.5h0M1353.8 461.1h0M1356.9 460.7h0M1359.9 460.2h0M1363 459.8h0M1366 459.4h0M1369.1 459h0M1372.1 458.6h0M1375.2 458.3h0M1378.2 457.9h0M1381.2 457.5h0M1384.3 457.1h0M1387.3 456.8h0M1390.3 456.4h0M1393.4 456.1h0M1396.4 455.7h0M1237.3 452.7h0M1233.8 453.3h0M1230.3 453.9h0M1226.8 454.6h0M1223.2 455.2h0M1219.7 455.9h0M1216.2 456.6h0M1212.6 457.3h0M1256.9 457.2h0M1253.5 457.8h0M1250.1 458.4h0M1246.7 459h0M1243.3 459.7h0M1239.9 460.3h0M1236.5 460.9h0M1233.1 461.6h0M1229.6 462.3h0M1226.2 462.9h0M1222.8 463.6h0M1219.3 464.3h0M1215.9 465h0M1212.4 465.7h0M1208.9 466.4h0M1205.5 467.1h0M1202 467.9h0M1272.1 462.1h0M1268.9 462.7h0M1262.3 463.9h0M1259 464.5h0M1255.7 465.1h0M1252.4 465.7h0M1245.7 467h0M1242.4 467.7h0M1239.1 468.3h0M1235.8 469h0M1232.4 469.7h0M1229.1 470.4h0M1282.5 466.6h0M1279.3 467.2h0M1276 467.8h0M1272.8 468.4h0M1269.6 469h0M1266.4 469.6h0M1263.2 470.2h0M1260 470.8h0M1256.7 471.5h0M1253.5 472.1h0M1250.3 472.8h0M1247 473.4h0M1286.1 472.1h0M1283 472.7h0M1276.7 473.9h0M1273.6 474.5h0M1270.4 475.1h0M1267.3 475.7h0M1264.1 476.4h0M1297.2 477.3h0M1294.1 477.9h0M1291.1 478.5h0M1158.7 449.1h0M1159.1 450.9h0M1159.8 451.9h0M1160.3 453.3h0M1161.2 453.5h0M1162.1 455.7h0M1163 456.5h0M1162.9 457.9h0M1163.4 458.8h0M1164.5 460.3h0M1165.1 461.3h0M1165.8 462.9h0M1165.3 464.3h0M1166.5 466.1h0M1166.9 467.3h0M1167.4 468.7h0M1147.1 449.5h0M1148.4 450.2h0M1149.5 451.2h0M1150.1 452.3h0M1150.4 453.4h0M1151.4 455.2h0M1152.5 456.1h0M1152.9 457h0M1153.5 458.4h0M1154.2 460h0M1155.4 461.9h0M1155.3 462.5h0M1157 465.3h0M1157.5 467.1h0M1158.2 468.1h0M1135.7 448.4h0M1135.9 448.7h0M1137.1 449.9h0M1137.8 451.6h0M1138.9 452.2h0M1140 454.2h0M1140.8 455.3h0M1142 455.8h0M1142.8 457.5h0M1143.7 458.6h0M1144.6 460.1h0M1144.8 460.9h0M1145.2 462.1h0M1146.7 463.6h0M1146.8 465h0M1147.3 465.9h0M1149 468.7h0M1120.7 448h0M1122.3 448.9h0M1123 448.7h0M1124.3 449.5h0M1125 450.8h0M1126 451.3h0M1127.3 453.1h0M1130.2 455.2h0M1130.6 456.1h0M1131.7 456.9h0M1133 458.6h0M1133.3 459.2h0M1134.6 460.5h0M1134.9 461.7h0M1136.8 463.7h0M1137.5 465.1h0M1138.1 465.3h0M1138.5 467h0M1139.5 468.6h0M1111.2 451.7h0M1112.2 452.2h0M1113.6 453.3h0M1114.8 454.1h0M1116.5 454.9h0M1117.6 455h0M1119.4 456.5h0M1120.4 456.9h0M1121.5 457.9h0M1122.2 459h0M1123.5 460.8h0M1124.8 461.1h0M1125.3 462.2h0M1126 463.8h0M1127.2 465.7h0M1128.5 466.7h0M1129.3 467.6h0M1110.8 461.1h0M1112.5 461.5h0M1115.2 463.5h0M1115.7 465.1h0M1116.6 466.5h0M1118.3 467.6h0M1118.5 468.4h0" stroke="#d7ec1b" stroke-width="2.0" stroke-linecap="round" fill="none"/><path d="M1679.5 426.3h0M1682.8 426.5h0M1686.1 426.7h0M1689.4 426.9h0M1692.7 427.1h0M1696 427.3h0M1699.4 427.5h0M1702.7 427.8h0M1706 428h0M1709.3 428.2h0M1443.8 440.5h0M1446.9 440.2h0M1450 440h0M1453.1 439.8h0M1456.3 439.6h0M1459.4 439.4h0M1462.5 439.2h0M1465.6 439h0M1468.7 438.8h0M1471.8 438.6h0M1474.9 438.4h0M1478 438.3h0M1481.1 438.1h0M1484.2 438h0M1487.3 437.8h0M1490.4 437.6h0M1493.5 437.5h0M1496.6 437.4h0M1509 436.9h0M1512.1 436.8h0M1515.2 436.7h0M1518.3 436.6h0M1521.4 436.5h0M1524.5 436.4h0M1527.6 436.3h0M1530.7 436.2h0M1533.8 436.2h0M1536.9 436.1h0M1540 436h0M1543.1 436h0M1546.2 435.9h0M1549.3 435.9h0M1552.4 435.8h0M1555.5 435.8h0M1558.6 435.8h0M1561.7 435.8h0M1564.8 435.7h0M1567.9 435.7h0M1571 435.7h0M1602.1 436h0M1605.2 436h0M1608.4 436.1h0M1611.5 436.2h0M1614.6 436.2h0M1617.7 436.3h0M1620.8 436.4h0M1624 436.5h0M1627.1 436.6h0M1630.2 436.7h0M1633.3 436.8h0M1636.5 436.9h0M1639.6 437h0M1642.7 437.1h0M1645.9 437.3h0M1649 437.4h0M1652.2 437.5h0M1655.3 437.7h0M1658.5 437.8h0M1661.6 438h0M1399.4 455.4h0M1402.4 455.1h0M1405.5 454.7h0M1408.5 454.4h0M1411.5 454.1h0M1414.5 453.8h0M1417.5 453.5h0M1420.5 453.2h0M1423.5 452.9h0M1426.6 452.6h0M1429.6 452.4h0M1432.6 452.1h0M1435.6 451.8h0M1438.6 451.6h0M1561.2 445.9h0M1564.2 445.9h0M1567.2 445.9h0M1570.2 445.9h0M1573.2 445.9h0M1576.2 445.9h0M1579.2 445.9h0M1582.1 445.9h0M1585.1 445.9h0M1588.1 445.9h0M1591.1 446h0M1594.1 446h0M1597.1 446h0M1600.1 446.1h0M1603.1 446.1h0M1363.1 472.9h0M1366 472.5h0M1368.9 472.1h0M1371.8 471.7h0M1374.7 471.3h0M1377.6 470.9h0M1380.5 470.5h0M1383.4 470.1h0M1125.2 476.4h0M1121.4 477.3h0M1117.7 478.2h0M1113.9 479.1h0M1177.5 473.2h0M1163.3 476.5h0M1159.7 477.4h0M1152.6 479.1h0M1149 479.9h0M1145.4 480.8h0M1141.8 481.7h0M1138.2 482.6h0M1134.5 483.5h0M1130.9 484.4h0M1127.3 485.4h0M1123.6 486.3h0M1120 487.3h0M1116.3 488.2h0M1112.6 489.2h0M1225.7 471.1h0M1222.4 471.8h0M1219 472.5h0M1215.6 473.2h0M1212.3 473.9h0M1208.9 474.7h0M1205.5 475.4h0M1202.1 476.1h0M1198.7 476.9h0M1195.3 477.7h0M1191.9 478.5h0M1188.5 479.3h0M1185.1 480h0M1181.7 480.9h0M1178.2 481.7h0M1167.9 484.2h0M1164.4 485h0M1160.9 485.9h0M1157.5 486.8h0M1154 487.7h0M1150.5 488.5h0M1147 489.5h0M1143.5 490.4h0M1243.8 474.1h0M1240.5 474.8h0M1237.3 475.4h0M1234 476.1h0M1230.7 476.8h0M1227.5 477.5h0M1224.2 478.2h0M1220.9 479h0M1217.6 479.7h0M1214.3 480.4h0M1211 481.2h0M1207.7 482h0M1204.4 482.7h0M1201.1 483.5h0M1197.7 484.3h0M1194.4 485.1h0M1187.7 486.7h0M1184.4 487.5h0M1181.1 488.3h0M1177.7 489.2h0M1174.3 490h0M1171 490.9h0M1261 477h0M1257.8 477.6h0M1254.6 478.3h0M1251.5 479h0M1248.3 479.6h0M1245.1 480.3h0M1241.9 481h0M1238.7 481.7h0M1235.5 482.4h0M1232.4 483.1h0M1229.2 483.8h0M1225.9 484.6h0M1222.7 485.3h0M1219.5 486h0M1216.3 486.8h0M1213.1 487.5h0M1209.9 488.3h0M1206.6 489.1h0M1203.4 489.9h0M1200.1 490.7h0M1196.9 491.5h0M1193.6 492.3h0M1288.1 479.1h0M1285 479.7h0M1282 480.3h0M1278.9 480.9h0M1275.8 481.5h0M1272.8 482.1h0M1266.6 483.4h0M1263.6 484h0M1257.4 485.4h0M1254.3 486h0M1251.2 486.7h0M1248.2 487.4h0M1245.1 488.1h0M1242 488.8h0M1238.9 489.5h0M1235.8 490.2h0M1232.6 491h0M1226.4 492.5h0M1223.3 493.2h0M1220.2 494h0M1304.8 482.8h0M1301.8 483.4h0M1298.9 484h0M1295.9 484.6h0M1290 485.8h0M1284 487h0M1281 487.6h0M1278.1 488.2h0M1275.1 488.9h0M1272.1 489.5h0M1269.1 490.2h0M1266.1 490.8h0M1263.1 491.5h0M1260.1 492.2h0M1257.1 492.9h0M1254.1 493.5h0M1251.1 494.2h0M1248.1 495h0M1311 487.4h0M1308.1 487.9h0M1305.2 488.5h0M1302.4 489.1h0M1299.5 489.7h0M1296.6 490.3h0M1293.7 490.9h0M1290.8 491.5h0M1287.8 492.1h0M1284.9 492.7h0M1282 493.4h0M1276.2 494.7h0M1273.3 495.3h0M1167.7 469.9h0M1167.6 471.7h0M1167.9 472.4h0M1169 474.4h0M1168.4 475.1h0M1168.9 477.4h0M1157.9 469.2h0M1159 471.3h0M1159.3 475.1h0M1159.4 476.5h0M1149.8 470.6h0M1149.7 471.9h0M1150.1 472.8h0M1150.6 475h0M1151 476h0M1150.6 477.2h0M1139.3 469.8h0M1139.6 471.1h0M1140.6 472.4h0M1140.9 474.5h0M1141.5 475.9h0M1141.4 477h0M1129.4 469.7h0M1130.7 470.3h0M1131.2 472.8h0M1131 473.8h0M1132.1 475.6h0M1133 476.9h0M1119.9 470.4h0M1120.2 470.9h0M1121.8 472.7h0M1121.8 474.7h0M1123.3 476h0M1123.2 477.1h0M1111.2 471.6h0M1111.7 473.2h0M1112.5 474.3h0M1113.7 476.5h0" stroke="#bcee1e" stroke-width="2.0" stroke-linecap="round" fill="none"/><path d="M1896.9 450.2h0M1900.5 450.8h0M1904.2 451.4h0M1874.3 460.8h0M1877.8 461.4h0M1881.2 462h0M1884.7 462.6h0M1888.1 463.1h0M1891.6 463.7h0M1842 467h0M1845.3 467.6h0M1848.6 468.1h0M1851.8 468.6h0M1855.1 469.1h0M1858.4 469.7h0M1861.7 470.2h0M1865 470.8h0M1868.3 471.3h0M1792.7 472.3h0M1795.8 472.7h0M1798.8 473.2h0M1801.9 473.6h0M1804.9 474h0M1808 474.5h0M1811.1 474.9h0M1814.1 475.4h0M1817.2 475.9h0M1820.3 476.3h0M1823.3 476.8h0M1826.4 477.3h0M1829.5 477.8h0M1832.6 478.3h0M1752 476.8h0M1754.9 477.1h0M1757.8 477.5h0M1760.7 477.8h0M1763.6 478.2h0M1766.5 478.5h0M1769.4 478.9h0M1772.3 479.3h0M1775.2 479.7h0M1778.1 480.1h0M1781 480.5h0M1784 480.9h0M1786.9 481.3h0M1789.8 481.7h0M1792.7 482.1h0M1722.7 482.8h0M1725.5 483.1h0M1728.2 483.4h0M1731 483.7h0M1733.8 484h0M1736.5 484.3h0M1739.3 484.6h0M1742.1 485h0M1744.8 485.3h0M1747.6 485.6h0M1750.4 486h0M1753.2 486.3h0M1755.9 486.7h0M1701.1 488.8h0M1703.8 489.1h0M1706.4 489.3h0M1709.1 489.6h0M1711.7 489.8h0M1714.4 490.1h0M1717 490.4h0M1719.7 490.7h0M1722.4 490.9h0M1725 491.2h0M1727.7 491.5h0M1730.4 491.8h0M1678.4 494.9h0M1680.9 495.1h0M1683.5 495.3h0M1686 495.5h0M1688.5 495.7h0M1691.1 495.9h0M1693.6 496.2h0M1696.2 496.4h0M1698.8 496.6h0M1701.3 496.9h0M1703.9 497.1h0M1706.4 497.4h0M1709 497.6h0M1657.3 500.2h0M1659.7 500.3h0M1662.2 500.5h0M1664.6 500.6h0M1667.1 500.8h0M1669.6 501h0M1672 501.2h0M1674.5 501.3h0M1677 501.5h0M1679.4 501.7h0" stroke="#26e8c5" stroke-width="2.0" stroke-linecap="round" fill="none"/><path d="M1907.9 452h0M1911.5 452.6h0M1915.2 453.3h0M1895.1 464.3h0M1898.6 465h0M1902.1 465.6h0M1905.6 466.2h0M1871.6 471.9h0M1874.9 472.5h0M1878.2 473.1h0M1881.5 473.7h0M1884.8 474.3h0M1888.2 474.9h0M1835.7 478.8h0M1838.8 479.3h0M1841.9 479.9h0M1845 480.4h0M1848.1 480.9h0M1851.3 481.5h0M1854.4 482h0M1857.5 482.6h0M1860.7 483.1h0M1795.7 482.6h0M1798.6 483h0M1801.5 483.4h0M1804.5 483.9h0M1807.4 484.3h0M1810.4 484.8h0M1813.3 485.3h0M1816.3 485.7h0M1819.2 486.2h0M1822.2 486.7h0M1825.2 487.2h0M1828.1 487.7h0M1831.1 488.2h0M1758.7 487h0M1761.5 487.4h0M1764.3 487.8h0M1767.1 488.1h0M1769.9 488.5h0M1772.7 488.9h0M1775.5 489.3h0M1778.3 489.7h0M1781.1 490.1h0M1783.9 490.5h0M1786.7 490.9h0M1789.5 491.3h0M1792.4 491.8h0M1795.2 492.2h0M1798 492.7h0M1733 492.1h0M1735.7 492.5h0M1738.4 492.8h0M1741 493.1h0M1743.7 493.4h0M1746.4 493.8h0M1749.1 494.1h0M1751.8 494.4h0M1754.5 494.8h0M1757.1 495.2h0M1759.8 495.5h0M1762.5 495.9h0M1765.2 496.3h0M1711.5 497.9h0M1714.1 498.2h0M1716.7 498.4h0M1719.2 498.7h0M1721.8 499h0M1724.4 499.3h0M1727 499.6h0M1729.5 499.9h0M1732.1 500.2h0M1734.7 500.5h0M1737.3 500.8h0M1739.9 501.2h0" stroke="#1fe2d8" stroke-width="2.0" stroke-linecap="round" fill="none"/><path d="M1909.1 466.8h0M1912.6 467.5h0M1891.5 475.5h0M1894.8 476.1h0M1898.2 476.7h0M1901.6 477.4h0M1863.8 483.7h0M1866.9 484.3h0M1870.1 484.9h0M1873.3 485.4h0M1876.4 486h0M1879.6 486.6h0M1882.8 487.3h0M1834.1 488.7h0M1837.1 489.3h0M1840.1 489.8h0M1843.1 490.3h0M1846.1 490.9h0M1849.1 491.4h0M1852.1 492h0M1855.1 492.5h0M1858.1 493.1h0M1861.1 493.7h0M1800.8 493.1h0M1803.7 493.6h0M1806.5 494h0M1809.3 494.5h0M1812.2 495h0M1815 495.4h0M1817.9 495.9h0M1820.7 496.4h0M1823.6 496.9h0M1826.4 497.4h0M1829.3 498h0M1832.2 498.5h0M1767.9 496.7h0M1770.6 497h0M1773.3 497.4h0M1776 497.8h0M1778.7 498.2h0M1781.5 498.7h0M1784.2 499.1h0M1786.9 499.5h0M1789.6 499.9h0M1792.3 500.4h0M1795.1 500.8h0M1797.8 501.3h0M1800.5 501.7h0M1803.3 502.2h0M1742.4 501.5h0M1745 501.8h0" stroke="#18dceb" stroke-width="2.0" stroke-linecap="round" fill="none"/><path d="M1885.9 487.9h0M1889.1 488.5h0M1864.1 494.2h0M1867.2 494.8h0M1870.2 495.4h0M1873.2 496h0M1835 499h0M1837.9 499.5h0M1840.8 500.1h0M1843.7 500.6h0M1846.5 501.2h0M1849.4 501.7h0M1852.3 502.3h0" stroke="#16d3f1" stroke-width="2.0" stroke-linecap="round" fill="none"/><path d="M1855.2 502.9h0M1858.1 503.5h0M1861 504h0M1808.7 503.1h0M1811.5 503.6h0M1814.2 504.1h0M1817 504.6h0M1819.7 505.1h0M1822.5 505.6h0M1825.2 506.1h0M1828 506.6h0M1830.7 507.1h0M1833.5 507.7h0M1836.3 508.2h0M1839.1 508.8h0M1778.8 506.7h0M1781.5 507.2h0M1784.1 507.6h0M1786.7 508h0M1789.3 508.4h0M1792 508.9h0M1794.6 509.3h0M1797.2 509.8h0M1799.8 510.3h0M1802.5 510.7h0M1805.1 511.2h0M1807.8 511.7h0M1810.4 512.2h0M1813 512.7h0M1756.7 510.5h0M1759.2 510.9h0M1761.7 511.2h0M1764.2 511.6h0M1766.8 512h0M1769.3 512.4h0M1771.8 512.8h0M1774.3 513.2h0M1776.9 513.6h0M1779.4 514h0M1781.9 514.5h0M1784.5 514.9h0M1787 515.3h0M1789.6 515.8h0M1738.1 515h0M1740.5 515.4h0M1743 515.7h0M1745.4 516h0M1747.8 516.4h0M1750.3 516.7h0M1752.7 517.1h0M1755.1 517.5h0M1757.6 517.8h0M1760 518.2h0M1762.4 518.6h0M1764.9 519h0M1767.3 519.4h0M1723.5 518.8h0M1725.9 519.1h0M1728.2 519.4h0M1730.6 519.8h0M1446 549.3h0M1447.9 549h0M1449.9 548.6h0M1451.8 548.2h0M1453.7 547.9h0M1455.7 547.5h0M1457.6 547.2h0M1459.6 546.9h0M1450.3 553.3h0M1452.2 553h0M1454.1 552.6h0M1456 552.3h0M1457.9 551.9h0M1459.8 551.6h0M1461.7 551.2h0M1463.6 550.9h0M1465.4 550.6h0M1467.3 550.3h0M1469.2 549.9h0M1471.1 549.6h0M1473 549.3h0M1474.9 549h0M1476.8 548.7h0M1478.7 548.5h0M1480.6 548.2h0M1482.5 547.9h0M1484.5 547.6h0M1486.4 547.3h0M1488.3 547.1h0M1490.2 546.8h0M1492.1 546.6h0M1494 546.3h0M1495.9 546.1h0M1497.8 545.8h0M1499.8 545.6h0M1501.7 545.4h0M1503.6 545.1h0M1505.5 544.9h0M1454.7 557.3h0M1456.5 556.9h0M1458.3 556.6h0M1460.2 556.2h0M1462 555.9h0M1463.8 555.6h0M1465.7 555.2h0M1467.5 554.9h0M1469.4 554.6h0M1471.2 554.3h0M1473.1 554h0M1474.9 553.7h0M1476.8 553.4h0M1478.6 553.1h0M1480.5 552.8h0M1482.3 552.5h0M1484.2 552.2h0M1486 551.9h0M1487.9 551.7h0M1489.8 551.4h0M1491.6 551.1h0M1493.5 550.9h0M1495.4 550.6h0M1497.2 550.4h0M1499.1 550.1h0M1501 549.9h0M1502.8 549.7h0M1504.7 549.5h0M1506.6 549.2h0M1508.4 549h0M1510.3 548.8h0M1512.2 548.6h0M1514.1 548.4h0M1515.9 548.2h0M1517.8 548h0M1478.5 557.4h0M1480.3 557.1h0M1482.1 556.8h0M1483.9 556.6h0M1485.7 556.3h0M1487.5 556h0M1489.3 555.7h0M1491.1 555.5h0M1492.9 555.2h0M1494.8 554.9h0M1496.6 554.7h0M1498.4 554.4h0M1405.9 558.2h0M1404 558.6h0M1402.1 559.1h0M1400.2 559.6h0M1398.3 560.1h0M1396.4 560.6h0M1394.5 561.1h0M1411.3 562h0M1409.5 562.5h0M1407.6 563h0M1405.8 563.5h0M1403.9 564h0M1402.1 564.5h0M1400.3 565h0M1398.4 565.5h0M1396.6 566h0M1394.8 566.5h0M1392.9 567h0M1391.1 567.6h0M1389.3 568.1h0M1387.4 568.6h0M1385.6 569.2h0M1383.8 569.7h0M1382 570.3h0M1378.4 571.4h0M1376.5 572h0M1374.7 572.6h0M1372.9 573.2h0M1371.1 573.8h0M1369.3 574.4h0M1416.7 565.9h0M1414.9 566.4h0M1413.1 566.8h0M1411.3 567.3h0M1409.5 567.8h0M1407.7 568.3h0M1405.9 568.8h0M1404.1 569.3h0M1402.4 569.8h0M1398.8 570.8h0M1397 571.3h0M1395.2 571.9h0M1393.5 572.4h0M1391.7 572.9h0M1389.9 573.5h0M1388.2 574h0M1386.4 574.6h0M1382.9 575.7h0M1381.1 576.3h0M1379.4 576.8h0M1377.6 577.4h0M1375.9 578h0M1374.1 578.6h0M1372.4 579.2h0M1370.7 579.8h0M1368.9 580.4h0M1367.2 581h0M1365.5 581.7h0M1363.7 582.3h0M1362 582.9h0M1360.3 583.6h0M1358.5 584.2h0M1356.8 584.9h0M1355.1 585.5h0M1353.4 586.2h0M1351.7 586.9h0M1350 587.5h0M1348.3 588.2h0M1346.6 588.9h0M1344.9 589.6h0M1343.2 590.3h0M1341.5 591h0M1339.8 591.7h0M1338.1 592.4h0M1336.4 593.1h0M1334.8 593.9h0M1333.1 594.6h0" stroke="#16d3f1" stroke-width="2.5" stroke-linecap="round" fill="none"/><path d="M1806 502.6h0M1747.6 502.2h0M1750.2 502.5h0M1752.8 502.9h0M1755.4 503.2h0M1758 503.6h0M1760.6 504h0M1763.2 504.4h0M1765.8 504.7h0M1768.4 505.1h0M1771 505.5h0M1773.6 505.9h0M1776.2 506.3h0M1724.1 506.2h0M1726.6 506.5h0M1729.1 506.8h0M1731.6 507.1h0M1734.1 507.4h0M1736.6 507.7h0M1739.1 508h0M1741.6 508.4h0M1744.1 508.7h0M1746.6 509.1h0M1749.1 509.4h0M1751.6 509.8h0M1754.2 510.1h0M1706.7 511.2h0M1709.1 511.5h0M1711.5 511.7h0M1713.9 512h0M1716.3 512.3h0M1718.8 512.6h0M1721.2 512.8h0M1723.6 513.1h0M1726 513.4h0M1728.4 513.7h0M1730.8 514.1h0M1733.3 514.4h0M1735.7 514.7h0M1690.7 515.2h0M1693 515.4h0M1695.4 515.6h0M1697.7 515.9h0M1700 516.1h0M1702.4 516.4h0M1704.7 516.6h0M1707.1 516.9h0M1709.4 517.1h0M1711.8 517.4h0M1714.1 517.7h0M1716.5 518h0M1718.8 518.2h0M1721.2 518.5h0M1673.2 519.3h0M1675.5 519.4h0M1677.7 519.6h0M1680 519.8h0M1682.3 520h0M1684.5 520.2h0M1686.8 520.5h0M1689.1 520.7h0M1691.4 520.9h0M1693.6 521.1h0M1695.9 521.4h0M1436.8 540.9h0M1438.9 540.5h0M1440.9 540.1h0M1442.9 539.8h0M1445 539.4h0M1447 539h0M1449.1 538.7h0M1451.1 538.4h0M1453.2 538h0M1455.2 537.7h0M1457.3 537.4h0M1459.3 537h0M1461.4 536.7h0M1463.4 536.4h0M1465.5 536.1h0M1467.5 535.8h0M1469.6 535.5h0M1471.6 535.2h0M1473.7 534.9h0M1475.7 534.7h0M1477.8 534.4h0M1479.8 534.1h0M1481.9 533.8h0M1484 533.6h0M1486 533.3h0M1624 527.5h0M1626.2 527.6h0M1628.3 527.7h0M1630.4 527.7h0M1441.4 545.1h0M1443.4 544.7h0M1445.4 544.4h0M1447.4 544h0M1449.4 543.7h0M1451.4 543.3h0M1453.4 543h0M1455.4 542.6h0M1457.3 542.3h0M1459.3 542h0M1461.3 541.7h0M1463.3 541.3h0M1465.3 541h0M1467.3 540.7h0M1469.3 540.4h0M1471.3 540.1h0M1473.3 539.8h0M1475.3 539.5h0M1477.3 539.3h0M1479.3 539h0M1481.4 538.7h0M1483.4 538.4h0M1485.4 538.2h0M1487.4 537.9h0M1489.4 537.7h0M1491.4 537.4h0M1493.4 537.2h0M1495.4 536.9h0M1497.4 536.7h0M1499.5 536.5h0M1501.5 536.3h0M1503.5 536.1h0M1505.5 535.8h0M1507.5 535.6h0M1509.6 535.4h0M1511.6 535.2h0M1513.6 535h0M1515.6 534.9h0M1517.7 534.7h0M1519.7 534.5h0M1521.7 534.3h0M1523.7 534.2h0M1525.8 534h0M1527.8 533.8h0M1529.8 533.7h0M1531.9 533.5h0M1533.9 533.4h0M1535.9 533.3h0M1582.9 531.4h0M1585 531.4h0M1587 531.4h0M1589.1 531.4h0M1591.2 531.4h0M1593.2 531.4h0M1595.3 531.4h0M1597.3 531.4h0M1599.4 531.4h0M1601.5 531.4h0M1461.5 546.5h0M1463.4 546.2h0M1465.4 545.9h0M1467.3 545.6h0M1469.3 545.3h0M1471.2 545h0M1473.2 544.7h0M1475.1 544.4h0M1477.1 544.1h0M1479 543.8h0M1481 543.5h0M1482.9 543.3h0M1484.9 543h0M1486.9 542.7h0M1488.8 542.5h0M1490.8 542.2h0M1492.7 542h0M1494.7 541.7h0M1496.7 541.5h0M1498.6 541.3h0M1500.6 541h0M1502.6 540.8h0M1504.5 540.6h0M1506.5 540.4h0M1508.5 540.2h0M1510.4 540h0M1512.4 539.8h0M1514.4 539.6h0M1516.4 539.4h0M1518.3 539.2h0M1520.3 539h0M1522.3 538.8h0M1524.3 538.7h0M1526.2 538.5h0M1528.2 538.3h0M1530.2 538.2h0M1532.2 538h0M1534.2 537.9h0M1536.2 537.8h0M1538.1 537.6h0M1540.1 537.5h0M1542.1 537.4h0M1544.1 537.2h0M1546.1 537.1h0M1548.1 537h0M1550.1 536.9h0M1552.1 536.8h0M1554.1 536.7h0M1556 536.6h0M1507.4 544.7h0M1509.3 544.5h0M1511.3 544.3h0M1513.2 544.1h0M1515.1 543.9h0M1517 543.7h0M1519 543.5h0M1520.9 543.3h0M1522.8 543.2h0M1524.8 543h0M1526.7 542.8h0M1528.6 542.6h0M1530.6 542.5h0M1532.5 542.3h0M1534.4 542.2h0M1536.4 542h0M1394.5 550h0M1392.5 550.5h0M1400.2 554.1h0M1398.3 554.6h0M1396.3 555.1h0M1394.4 555.6h0M1392.4 556.1h0M1390.5 556.6h0M1388.5 557.1h0M1386.6 557.6h0M1384.7 558.2h0M1382.7 558.7h0M1380.8 559.2h0M1378.8 559.8h0M1376.9 560.3h0M1375 560.9h0M1373 561.5h0M1371.1 562h0M1369.2 562.6h0M1367.2 563.2h0M1392.7 561.7h0M1390.8 562.2h0M1388.9 562.7h0M1387 563.2h0M1385.1 563.8h0M1383.2 564.3h0M1381.4 564.9h0M1379.5 565.4h0M1377.6 566h0M1375.7 566.6h0M1373.9 567.1h0M1372 567.7h0M1370.1 568.3h0M1368.3 568.9h0M1366.4 569.5h0M1364.6 570.1h0M1362.7 570.7h0M1360.8 571.3h0M1359 571.9h0M1357.1 572.5h0M1355.3 573.2h0M1353.4 573.8h0M1351.6 574.5h0M1349.8 575.1h0M1347.9 575.8h0M1346.1 576.4h0M1344.3 577.1h0M1342.4 577.8h0M1340.6 578.5h0M1338.8 579.1h0M1336.9 579.8h0M1365.7 575.6h0M1363.9 576.2h0M1362.1 576.8h0M1358.6 578.1h0M1356.8 578.7h0M1355 579.4h0M1353.2 580h0M1351.4 580.7h0M1349.7 581.3h0M1347.9 582h0M1344.4 583.4h0M1342.6 584h0M1340.8 584.7h0M1339.1 585.4h0M1337.3 586.1h0M1335.6 586.9h0M1333.8 587.6h0M1332.1 588.3h0M1330.3 589h0M1328.6 589.8h0M1326.8 590.5h0M1325.1 591.3h0M1323.4 592h0M1321.6 592.8h0M1319.9 593.5h0M1318.2 594.3h0M1316.5 595.1h0M1314.8 595.9h0M1313.1 596.7h0M1311.4 597.5h0M1309.6 598.3h0M1307.9 599.1h0M1306.2 599.9h0" stroke="#18dceb" stroke-width="2.5" stroke-linecap="round" fill="none"/><path d="M1841.8 509.3h0M1844.6 509.9h0M1815.7 513.1h0M1818.3 513.7h0M1821 514.2h0M1823.7 514.7h0M1826.3 515.2h0M1829 515.7h0M1831.6 516.3h0M1834.3 516.8h0M1837 517.4h0M1792.1 516.2h0M1794.7 516.7h0M1797.2 517.1h0M1799.8 517.6h0M1802.3 518.1h0M1804.9 518.6h0M1807.4 519h0M1769.8 519.8h0M1772.2 520.2h0M1774.7 520.6h0M1777.1 521h0M1779.6 521.5h0M1782 521.9h0M1458.7 561h0M1460.5 560.7h0M1462.3 560.3h0M1464.1 560h0M1465.8 559.6h0M1467.6 559.3h0M1469.4 559h0M1471.2 558.7h0M1473 558.3h0M1474.8 558h0M1476.6 557.7h0" stroke="#15c9f5" stroke-width="2.5" stroke-linecap="round" fill="none"/><path d="M1399.3 506.3h0M1401.8 505.9h0M1404.3 505.5h0M1406.7 505.1h0M1409.2 504.7h0M1411.7 504.3h0M1414.1 503.9h0M1416.6 503.5h0M1419.1 503.2h0M1421.6 502.8h0M1424 502.5h0M1426.5 502.1h0M1429 501.8h0M1431.5 501.4h0M1433.9 501.1h0M1436.4 500.8h0M1406.4 512.8h0M1408.8 512.4h0M1411.2 512h0M1110.5 569.3h0M1153.4 566.1h0M1150.7 567.3h0M1148 568.4h0M1145.4 569.6h0M1142.7 570.7h0M1137.4 573.1h0M1134.7 574.3h0M1132 575.5h0M1129.4 576.7h0M1126.7 578h0M1124 579.2h0M1121.4 580.5h0M1118.7 581.7h0M1116 583h0M1113.4 584.3h0M1110.7 585.6h0M1195.6 562.9h0M1193.1 564h0M1190.6 565h0M1188.1 566h0M1185.6 567.1h0M1183.1 568.1h0M1180.6 569.2h0M1178.1 570.3h0M1175.6 571.4h0M1173.1 572.5h0M1170.6 573.6h0M1168.1 574.7h0M1165.6 575.8h0M1163.1 576.9h0M1160.6 578.1h0M1158.1 579.2h0M1155.6 580.4h0M1153.1 581.6h0M1229.9 560.8h0M1225.1 562.6h0M1222.8 563.6h0M1220.4 564.5h0M1218 565.5h0M1215.6 566.5h0M1213.2 567.5h0M1210.9 568.4h0M1208.5 569.4h0M1206.1 570.4h0M1203.7 571.5h0M1201.4 572.5h0M1199 573.5h0M1196.6 574.6h0M1194.2 575.6h0M1189.5 577.7h0M1363.1 529.6h0M1360.8 530.1h0M1358.5 530.7h0M1356.2 531.2h0M1353.9 531.8h0M1351.6 532.3h0M1349.3 532.9h0M1347 533.5h0M1344.7 534.1h0M1342.4 534.6h0M1340.1 535.2h0M1337.8 535.8h0M1335.6 536.4h0M1333.3 537.1h0M1331 537.7h0M1328.7 538.3h0M1326.4 538.9h0M1324.1 539.6h0M1321.8 540.2h0M1319.5 540.9h0M1317.2 541.5h0M1314.9 542.2h0M1262.5 559.5h0M1260.2 560.4h0M1253.4 562.9h0M1251.1 563.8h0M1248.9 564.7h0M1246.6 565.6h0M1244.3 566.5h0M1242.1 567.4h0M1239.8 568.3h0M1237.5 569.2h0M1235.3 570.2h0M1233 571.1h0M1230.8 572.1h0M1228.5 573h0M1226.2 574h0M1224 575h0M1334.9 544h0M1332.7 544.6h0M1330.5 545.3h0M1328.3 545.9h0M1326.1 546.6h0M1323.9 547.2h0M1321.6 547.9h0M1319.4 548.5h0M1317.2 549.2h0M1315 549.9h0M1312.8 550.6h0M1310.6 551.3h0M1308.4 552h0M1306.2 552.7h0M1304 553.4h0M1301.8 554.2h0M1299.6 554.9h0M1297.4 555.6h0M1295.2 556.4h0M1293 557.1h0M1288.6 558.7h0M1286.4 559.4h0M1284.2 560.2h0M1282.1 561h0M1275.5 563.4h0M1273.3 564.2h0M1271.1 565.1h0M1268.9 565.9h0M1266.8 566.7h0M1264.6 567.6h0M1262.4 568.5h0M1260.2 569.3h0M1258.1 570.2h0M1255.9 571.1h0M1253.7 572h0M1251.5 572.9h0" stroke="#35e882" stroke-width="2.5" stroke-linecap="round" fill="none"/><path d="M1413.5 511.6h0M1415.9 511.2h0M1418.3 510.8h0M1420.7 510.5h0M1423.1 510.1h0M1425.5 509.7h0M1427.9 509.4h0M1430.3 509h0M1432.7 508.7h0M1435.1 508.3h0M1437.5 508h0M1439.9 507.7h0M1442.2 507.4h0M1444.6 507.1h0M1447 506.7h0M1449.4 506.4h0M1451.8 506.1h0M1454.2 505.8h0M1456.6 505.6h0M1459 505.3h0M1461.4 505h0M1463.8 504.7h0M1466.2 504.5h0M1468.6 504.2h0M1471 503.9h0M1473.4 503.7h0M1475.8 503.4h0M1478.2 503.2h0M1480.6 503h0M1483 502.8h0M1485.4 502.5h0M1487.8 502.3h0M1490.2 502.1h0M1492.6 501.9h0M1495 501.7h0M1497.4 501.5h0M1499.8 501.3h0M1502.2 501.1h0M1413.5 519.4h0M1415.9 519h0M1418.2 518.6h0M1420.5 518.2h0M1422.8 517.9h0M1425.1 517.5h0M1427.4 517.1h0M1429.7 516.7h0M1432 516.4h0M1434.3 516h0M1436.6 515.7h0M1438.9 515.4h0M1441.3 515h0M1492.2 509.1h0M1494.5 508.9h0M1496.8 508.6h0M1499.2 508.5h0M1501.5 508.3h0M1503.8 508.1h0M1506.1 507.9h0M1508.5 507.7h0M1510.8 507.5h0M1513.1 507.4h0M1515.4 507.2h0M1517.8 507.1h0M1520.1 506.9h0M1522.4 506.8h0M1524.8 506.6h0M1527.1 506.5h0M1529.4 506.4h0M1531.7 506.2h0M1534.1 506.1h0M1536.4 506h0M1538.7 505.9h0M1541.1 505.8h0M1543.4 505.7h0M1545.7 505.6h0M1548.1 505.5h0M1550.4 505.4h0M1552.8 505.3h0M1555.1 505.3h0M1557.4 505.2h0M1559.8 505.1h0M1562.1 505.1h0M1564.5 505h0M1566.8 505h0M1569.1 504.9h0M1571.5 504.9h0M1573.8 504.9h0M1576.2 504.8h0M1578.5 504.8h0M1580.9 504.8h0M1583.2 504.8h0M1585.6 504.8h0M1587.9 504.8h0M1590.3 504.8h0M1592.6 504.8h0M1595 504.8h0M1597.3 504.8h0M1599.7 504.8h0M1602 504.9h0M1604.4 504.9h0M1606.7 504.9h0M1609.1 505h0M1611.5 505h0M1613.8 505.1h0M1616.2 505.1h0M1618.5 505.2h0M1620.9 505.3h0M1623.3 505.3h0M1625.6 505.4h0M1150.6 582.8h0M1148.1 584h0M1145.6 585.2h0M1143.1 586.4h0M1140.6 587.6h0M1138.1 588.9h0M1133.1 591.4h0M1130.6 592.7h0M1128.1 593.9h0M1125.6 595.2h0M1123.1 596.5h0M1120.6 597.9h0M1118.1 599.2h0M1187.1 578.8h0M1184.8 579.9h0M1182.4 581h0M1180 582.1h0M1177.7 583.2h0M1175.3 584.4h0M1172.9 585.5h0M1170.6 586.7h0M1168.2 587.8h0M1165.9 589h0M1163.5 590.2h0M1161.1 591.3h0M1158.8 592.5h0M1156.4 593.7h0M1154.1 595h0M1151.7 596.2h0M1149.4 597.4h0M1147 598.7h0M1221.7 575.9h0M1219.5 576.9h0M1217.2 577.9h0M1215 578.9h0M1212.7 580h0M1208.3 582h0M1206 583.1h0M1203.8 584.1h0M1201.5 585.2h0M1199.3 586.2h0M1197.1 587.3h0M1194.8 588.4h0M1192.6 589.5h0M1190.4 590.6h0M1185.9 592.9h0M1183.7 594h0M1181.5 595.1h0M1370.4 534.8h0M1368.2 535.3h0M1366 535.9h0M1363.7 536.4h0M1361.5 536.9h0M1359.3 537.5h0M1357.1 538.1h0M1354.9 538.6h0M1350.4 539.8h0M1348.2 540.4h0M1346 540.9h0M1343.8 541.5h0M1341.6 542.1h0M1339.3 542.8h0M1337.1 543.4h0M1249.4 573.8h0M1247.2 574.7h0M1245 575.6h0M1242.9 576.5h0M1240.7 577.5h0M1236.4 579.4h0M1234.2 580.3h0M1232.1 581.3h0M1229.9 582.3h0M1227.8 583.3h0M1225.6 584.3h0M1223.5 585.3h0M1221.3 586.3h0M1219.2 587.3h0M1217 588.3h0M1214.9 589.4h0M1212.8 590.4h0M1354.2 546.1h0M1352.1 546.7h0M1349.9 547.3h0M1347.8 547.9h0M1345.6 548.5h0M1343.5 549.1h0M1341.4 549.7h0M1339.2 550.3h0M1337.1 551h0M1335 551.6h0M1332.8 552.3h0M1330.7 552.9h0M1328.6 553.6h0M1326.5 554.2h0M1324.3 554.9h0M1322.2 555.6h0M1320.1 556.3h0M1318 557h0M1315.8 557.7h0M1313.7 558.4h0M1311.6 559.1h0M1309.5 559.8h0M1307.4 560.5h0M1305.3 561.3h0M1303.1 562h0M1301 562.7h0M1298.9 563.5h0M1296.8 564.3h0M1294.7 565h0M1292.6 565.8h0M1290.5 566.6h0M1288.4 567.4h0M1286.3 568.2h0M1284.2 569h0M1282.1 569.8h0M1280 570.6h0M1277.9 571.4h0M1275.8 572.3h0M1273.7 573.1h0M1271.7 574h0M1269.6 574.8h0M1267.5 575.7h0M1265.4 576.5h0M1263.3 577.4h0M1259.2 579.2h0M1257.1 580.1h0M1255 581h0M1253 581.9h0M1250.9 582.9h0M1248.8 583.8h0M1246.8 584.7h0M1244.7 585.7h0M1242.7 586.6h0M1240.6 587.6h0M1317.3 565.4h0M1315.3 566.1h0M1313.2 566.9h0M1311.2 567.6h0M1309.2 568.3h0M1307.2 569.1h0M1305.1 569.8h0M1303.1 570.6h0M1301.1 571.4h0M1299.1 572.1h0M1297.1 572.9h0M1295 573.7h0M1293 574.5h0M1287 576.9h0M1285 577.7h0M1283 578.6h0M1281 579.4h0M1279 580.3h0M1277 581.1h0M1275 582h0" stroke="#2de9a6" stroke-width="2.5" stroke-linecap="round" fill="none"/><path d="M1681.9 501.9h0M1684.4 502.1h0M1686.8 502.3h0M1689.3 502.6h0M1443.6 514.7h0M1445.9 514.4h0M1448.2 514.1h0M1450.5 513.7h0M1452.8 513.4h0M1455.1 513.1h0M1457.4 512.8h0M1459.8 512.5h0M1462.1 512.3h0M1464.4 512h0M1466.7 511.7h0M1469 511.4h0M1471.3 511.2h0M1473.6 510.9h0M1476 510.7h0M1478.3 510.4h0M1480.6 510.2h0M1482.9 510h0M1485.2 509.7h0M1487.6 509.5h0M1489.9 509.3h0M1628 505.5h0M1630.4 505.6h0M1632.7 505.7h0M1635.1 505.8h0M1637.5 505.9h0M1639.8 506h0M1642.2 506.1h0M1644.6 506.2h0M1647 506.4h0M1649.3 506.5h0M1651.7 506.6h0M1654.1 506.8h0M1656.5 506.9h0M1658.8 507.1h0M1661.2 507.2h0M1663.6 507.4h0M1666 507.6h0M1668.4 507.7h0M1670.8 507.9h0M1419.3 524.7h0M1421.6 524.3h0M1423.8 524h0M1426.1 523.6h0M1428.3 523.2h0M1430.5 522.8h0M1432.8 522.5h0M1435 522.1h0M1437.3 521.8h0M1439.5 521.4h0M1441.8 521.1h0M1444 520.7h0M1446.2 520.4h0M1448.5 520.1h0M1450.7 519.8h0M1453 519.5h0M1455.2 519.1h0M1457.5 518.8h0M1459.7 518.5h0M1462 518.3h0M1464.2 518h0M1466.5 517.7h0M1468.7 517.4h0M1471 517.1h0M1473.2 516.9h0M1475.5 516.6h0M1477.7 516.4h0M1480 516.1h0M1482.2 515.9h0M1484.5 515.6h0M1486.8 515.4h0M1489 515.2h0M1491.3 514.9h0M1493.5 514.7h0M1495.8 514.5h0M1498.1 514.3h0M1500.3 514.1h0M1502.6 513.9h0M1504.8 513.7h0M1507.1 513.5h0M1509.4 513.4h0M1511.6 513.2h0M1513.9 513h0M1516.2 512.8h0M1518.4 512.7h0M1520.7 512.5h0M1522.9 512.4h0M1525.2 512.2h0M1527.5 512.1h0M1529.8 512h0M1532 511.8h0M1534.3 511.7h0M1536.6 511.6h0M1538.8 511.5h0M1541.1 511.4h0M1543.4 511.3h0M1545.7 511.2h0M1547.9 511.1h0M1550.2 511h0M1552.5 510.9h0M1554.8 510.8h0M1557 510.8h0M1559.3 510.7h0M1561.6 510.6h0M1563.9 510.6h0M1566.2 510.5h0M1568.4 510.5h0M1570.7 510.4h0M1573 510.4h0M1575.3 510.4h0M1577.6 510.3h0M1579.9 510.3h0M1582.1 510.3h0M1584.4 510.3h0M1586.7 510.3h0M1589 510.3h0M1591.3 510.3h0M1593.6 510.3h0M1595.9 510.3h0M1598.2 510.3h0M1600.5 510.3h0M1602.8 510.4h0M1605.1 510.4h0M1607.4 510.4h0M1609.7 510.5h0M1611.9 510.5h0M1614.2 510.6h0M1616.5 510.6h0M1618.8 510.7h0M1621.2 510.8h0M1623.5 510.8h0M1625.8 510.9h0M1628.1 511h0M1630.4 511.1h0M1632.7 511.2h0M1635 511.3h0M1637.3 511.4h0M1639.6 511.5h0M1641.9 511.6h0M1644.2 511.7h0M1646.5 511.8h0M1648.9 512h0M1488.5 521.1h0M1490.7 520.9h0M1492.8 520.7h0M1495 520.5h0M1497.2 520.3h0M1499.4 520h0M1501.6 519.8h0M1503.8 519.6h0M1506 519.4h0M1508.2 519.3h0M1510.4 519.1h0M1512.6 518.9h0M1514.8 518.7h0M1517 518.6h0M1519.2 518.4h0M1521.4 518.2h0M1523.6 518.1h0M1525.8 517.9h0M1528 517.8h0M1530.3 517.7h0M1532.5 517.5h0M1534.7 517.4h0M1536.9 517.3h0M1539.1 517.2h0M1541.3 517h0M1543.5 516.9h0M1545.7 516.8h0M1547.9 516.7h0M1550.1 516.6h0M1552.4 516.6h0M1554.6 516.5h0M1556.8 516.4h0M1559 516.3h0M1561.2 516.3h0M1563.4 516.2h0M1565.7 516.1h0M1567.9 516.1h0M1570.1 516h0M1572.3 516h0M1574.5 516h0M1576.8 515.9h0M1579 515.9h0M1581.2 515.9h0M1583.4 515.9h0M1585.7 515.8h0M1587.9 515.8h0M1590.1 515.8h0M1592.3 515.8h0M1594.6 515.8h0M1596.8 515.9h0M1599 515.9h0M1601.3 515.9h0M1603.5 515.9h0M1605.7 516h0M1608 516h0M1610.2 516h0M1612.5 516.1h0M1614.7 516.1h0M1616.9 516.2h0M1619.2 516.3h0M1621.4 516.3h0M1623.6 516.4h0M1144.7 599.9h0M1179.2 596.3h0M1177 597.4h0M1172.6 599.8h0M1208.5 592.5h0M1206.4 593.6h0M1204.2 594.7h0M1202.1 595.8h0M1200 596.9h0M1197.9 598h0M1195.8 599.1h0M1377.8 540h0M1373.5 541.1h0M1371.4 541.6h0M1369.2 542.2h0M1367.1 542.7h0M1364.9 543.3h0M1362.8 543.8h0M1360.6 544.4h0M1358.5 544.9h0M1356.3 545.5h0M1238.5 588.6h0M1236.5 589.6h0M1234.4 590.5h0M1232.4 591.5h0M1230.4 592.5h0M1228.3 593.6h0M1226.3 594.6h0M1224.3 595.6h0M1222.2 596.7h0M1220.2 597.7h0M1218.2 598.8h0M1216.1 599.8h0M1370.7 549h0M1368.6 549.5h0M1366.5 550.1h0M1364.5 550.7h0M1362.4 551.2h0M1360.3 551.8h0M1358.3 552.4h0M1356.2 553h0M1354.1 553.6h0M1352.1 554.2h0M1350 554.8h0M1348 555.4h0M1345.9 556h0M1343.9 556.7h0M1341.8 557.3h0M1339.8 557.9h0M1337.7 558.6h0M1335.7 559.2h0M1333.6 559.9h0M1331.6 560.6h0M1327.5 561.9h0M1325.4 562.6h0M1323.4 563.3h0M1321.4 564h0M1319.3 564.7h0M1273.1 582.8h0M1271.1 583.7h0M1269.1 584.6h0M1267.1 585.5h0M1265.1 586.4h0M1263.2 587.3h0M1261.2 588.2h0M1259.2 589.1h0M1257.2 590h0M1255.3 591h0M1253.3 591.9h0M1251.4 592.9h0M1249.4 593.8h0M1247.5 594.8h0M1245.5 595.8h0M1243.6 596.7h0M1241.6 597.7h0M1239.7 598.7h0M1237.7 599.7h0M1336.8 566.8h0M1334.9 567.5h0M1332.9 568.1h0M1331 568.8h0M1329 569.5h0M1325.1 570.9h0M1323.1 571.6h0M1321.2 572.3h0M1319.3 573.1h0M1317.3 573.8h0M1315.4 574.5h0M1313.4 575.3h0M1311.5 576h0M1309.6 576.8h0M1307.6 577.6h0M1301.8 579.9h0M1299.9 580.7h0M1298 581.5h0M1296.1 582.3h0M1294.2 583.1h0M1292.3 583.9h0M1288.4 585.6h0M1286.5 586.4h0M1284.6 587.3h0M1282.7 588.1h0M1280.8 589h0M1278.9 589.8h0M1277.1 590.7h0M1275.2 591.6h0M1273.3 592.5h0M1271.4 593.4h0M1269.5 594.3h0M1267.7 595.2h0M1265.8 596.1h0" stroke="#26e8c5" stroke-width="2.5" stroke-linecap="round" fill="none"/><path d="M1691.8 502.8h0M1694.3 503h0M1696.7 503.2h0M1699.2 503.5h0M1701.7 503.7h0M1704.2 504h0M1706.7 504.2h0M1709.1 504.5h0M1711.6 504.8h0M1714.1 505h0M1716.6 505.3h0M1719.1 505.6h0M1721.6 505.9h0M1673.1 508.1h0M1675.5 508.3h0M1677.9 508.5h0M1680.3 508.7h0M1682.7 508.9h0M1685.1 509.1h0M1687.5 509.3h0M1689.9 509.5h0M1692.3 509.7h0M1694.7 510h0M1697.1 510.2h0M1699.5 510.4h0M1701.9 510.7h0M1704.3 510.9h0M1651.2 512.1h0M1653.5 512.2h0M1655.8 512.4h0M1658.1 512.5h0M1660.4 512.7h0M1662.8 512.9h0M1665.1 513h0M1667.4 513.2h0M1669.7 513.4h0M1672.1 513.5h0M1674.4 513.7h0M1676.7 513.9h0M1679 514.1h0M1681.4 514.3h0M1683.7 514.5h0M1686 514.7h0M1688.4 514.9h0M1425.2 530.1h0M1427.4 529.7h0M1429.5 529.4h0M1431.7 529h0M1433.9 528.6h0M1436.1 528.3h0M1438.2 527.9h0M1440.4 527.5h0M1442.6 527.2h0M1444.8 526.9h0M1446.9 526.5h0M1449.1 526.2h0M1451.3 525.9h0M1453.5 525.5h0M1455.7 525.2h0M1457.8 524.9h0M1460 524.6h0M1462.2 524.3h0M1464.4 524h0M1466.6 523.7h0M1468.8 523.5h0M1470.9 523.2h0M1473.1 522.9h0M1475.3 522.6h0M1477.5 522.4h0M1479.7 522.1h0M1481.9 521.9h0M1484.1 521.6h0M1486.3 521.4h0M1625.9 516.5h0M1628.1 516.6h0M1630.4 516.6h0M1632.6 516.7h0M1634.9 516.8h0M1637.1 516.9h0M1639.4 517h0M1641.6 517.2h0M1643.9 517.3h0M1646.1 517.4h0M1648.4 517.5h0M1650.6 517.7h0M1652.9 517.8h0M1655.1 517.9h0M1657.4 518.1h0M1659.6 518.2h0M1661.9 518.4h0M1664.2 518.6h0M1666.4 518.7h0M1668.7 518.9h0M1670.9 519.1h0M1431 535.5h0M1433.1 535.2h0M1435.3 534.8h0M1437.4 534.4h0M1439.5 534h0M1441.6 533.7h0M1443.7 533.3h0M1445.8 533h0M1447.9 532.6h0M1450 532.3h0M1452.1 532h0M1454.2 531.6h0M1456.4 531.3h0M1458.5 531h0M1460.6 530.7h0M1462.7 530.4h0M1464.8 530.1h0M1466.9 529.8h0M1469.1 529.5h0M1471.2 529.2h0M1473.3 528.9h0M1475.4 528.7h0M1477.5 528.4h0M1479.7 528.1h0M1481.8 527.9h0M1483.9 527.6h0M1486 527.4h0M1488.2 527.1h0M1490.3 526.9h0M1492.4 526.7h0M1494.6 526.4h0M1496.7 526.2h0M1498.8 526h0M1500.9 525.8h0M1503.1 525.6h0M1505.2 525.4h0M1507.3 525.2h0M1509.5 525h0M1511.6 524.8h0M1513.8 524.6h0M1515.9 524.5h0M1518 524.3h0M1520.2 524.1h0M1522.3 524h0M1524.5 523.8h0M1526.6 523.6h0M1528.7 523.5h0M1530.9 523.4h0M1533 523.2h0M1535.2 523.1h0M1537.3 523h0M1539.5 522.8h0M1541.6 522.7h0M1543.8 522.6h0M1545.9 522.5h0M1548.1 522.4h0M1550.2 522.3h0M1552.4 522.2h0M1554.5 522.1h0M1556.7 522.1h0M1558.8 522h0M1561 521.9h0M1563.1 521.8h0M1565.3 521.8h0M1567.4 521.7h0M1569.6 521.7h0M1571.8 521.6h0M1573.9 521.6h0M1576.1 521.5h0M1578.2 521.5h0M1580.4 521.5h0M1582.6 521.5h0M1584.7 521.4h0M1586.9 521.4h0M1589.1 521.4h0M1591.2 521.4h0M1593.4 521.4h0M1595.6 521.4h0M1597.7 521.4h0M1599.9 521.5h0M1602.1 521.5h0M1604.3 521.5h0M1606.4 521.5h0M1608.6 521.6h0M1610.8 521.6h0M1613 521.7h0M1615.1 521.7h0M1617.3 521.8h0M1619.5 521.8h0M1621.7 521.9h0M1623.8 522h0M1626 522.1h0M1628.2 522.1h0M1630.4 522.2h0M1632.6 522.3h0M1634.8 522.4h0M1636.9 522.5h0M1639.1 522.6h0M1641.3 522.7h0M1643.5 522.8h0M1645.7 523h0M1647.9 523.1h0M1650.1 523.2h0M1488.1 533.1h0M1490.1 532.8h0M1492.2 532.6h0M1494.3 532.4h0M1496.3 532.1h0M1498.4 531.9h0M1500.5 531.7h0M1502.5 531.5h0M1504.6 531.3h0M1506.7 531.1h0M1508.8 530.9h0M1510.8 530.7h0M1512.9 530.5h0M1515 530.3h0M1517 530.1h0M1519.1 529.9h0M1521.2 529.8h0M1523.3 529.6h0M1525.4 529.5h0M1527.4 529.3h0M1529.5 529.2h0M1531.6 529h0M1533.7 528.9h0M1535.8 528.7h0M1537.9 528.6h0M1539.9 528.5h0M1542 528.4h0M1544.1 528.2h0M1546.2 528.1h0M1548.3 528h0M1550.4 527.9h0M1552.5 527.8h0M1554.6 527.7h0M1556.6 527.7h0M1558.7 527.6h0M1560.8 527.5h0M1562.9 527.4h0M1565 527.4h0M1567.1 527.3h0M1569.2 527.3h0M1571.3 527.2h0M1573.4 527.2h0M1575.5 527.1h0M1577.6 527.1h0M1579.7 527h0M1581.8 527h0M1583.9 527h0M1586 527h0M1588.1 527h0M1590.2 527h0M1592.3 527h0M1594.4 527h0M1596.6 527h0M1598.7 527h0M1600.8 527h0M1602.9 527h0M1605 527h0M1607.1 527.1h0M1609.2 527.1h0M1611.3 527.2h0M1613.5 527.2h0M1615.6 527.2h0M1617.7 527.3h0M1619.8 527.4h0M1621.9 527.4h0M1538 533.1h0M1540 533h0M1542 532.9h0M1544.1 532.8h0M1546.1 532.6h0M1548.1 532.5h0M1550.2 532.4h0M1552.2 532.3h0M1554.3 532.2h0M1556.3 532.2h0M1558.3 532.1h0M1560.4 532h0M1562.4 531.9h0M1564.5 531.8h0M1566.5 531.8h0M1568.6 531.7h0M1570.6 531.7h0M1572.7 531.6h0M1574.7 531.6h0M1576.8 531.5h0M1578.8 531.5h0M1580.9 531.5h0M1387.3 544.8h0M1385.2 545.3h0M1383.1 545.8h0M1381 546.3h0M1379 546.8h0M1376.9 547.4h0M1374.8 547.9h0M1372.7 548.4h0M1390.5 551h0M1388.5 551.5h0M1386.5 552h0M1384.5 552.5h0M1382.5 553h0M1380.5 553.6h0M1378.5 554.1h0M1376.5 554.6h0M1374.5 555.2h0M1370.5 556.3h0M1368.5 556.9h0M1366.5 557.5h0M1364.5 558h0M1362.5 558.6h0M1360.5 559.2h0M1358.6 559.8h0M1356.6 560.4h0M1354.6 561h0M1352.6 561.6h0M1350.6 562.3h0M1348.7 562.9h0M1346.7 563.5h0M1344.7 564.2h0M1342.7 564.8h0M1340.8 565.5h0M1263.9 597.1h0M1262.1 598h0M1260.2 598.9h0M1258.3 599.9h0M1365.3 563.8h0M1363.4 564.4h0M1361.5 565h0M1359.6 565.6h0M1357.6 566.2h0M1355.7 566.8h0M1353.8 567.4h0M1350 568.7h0M1348.1 569.3h0M1346.2 570h0M1344.3 570.6h0M1342.4 571.3h0M1340.5 572h0M1338.6 572.6h0M1336.7 573.3h0M1334.8 574h0M1329.1 576.1h0M1327.2 576.8h0M1325.4 577.5h0M1323.5 578.3h0M1321.6 579h0M1319.7 579.7h0M1317.9 580.5h0M1316 581.2h0M1314.1 582h0M1312.3 582.8h0M1310.4 583.5h0M1308.6 584.3h0M1304.8 585.9h0M1303 586.7h0M1301.1 587.5h0M1299.3 588.3h0M1297.5 589.1h0M1295.6 589.9h0M1293.8 590.8h0M1292 591.6h0M1290.1 592.4h0M1288.3 593.3h0M1286.5 594.2h0M1284.7 595h0M1282.9 595.9h0M1281 596.8h0M1279.2 597.7h0M1277.4 598.6h0M1275.6 599.5h0M1335.1 580.5h0M1333.3 581.2h0M1331.5 582h0M1329.7 582.7h0M1327.9 583.4h0M1324.3 584.9h0M1322.4 585.6h0M1320.6 586.4h0M1317.1 587.9h0M1315.3 588.6h0M1313.5 589.4h0M1311.7 590.2h0M1309.9 591h0M1308.1 591.8h0M1306.4 592.6h0M1304.6 593.4h0M1302.8 594.2h0M1301.1 595h0M1299.3 595.9h0M1297.5 596.7h0M1295.8 597.5h0M1294 598.4h0M1292.3 599.2h0" stroke="#1fe2d8" stroke-width="2.5" stroke-linecap="round" fill="none"/><path d="M1133.5 501h0M1130 501.9h0M1126.6 502.9h0M1123.1 503.9h0M1119.6 504.9h0M1116.1 506h0M1112.7 507h0M1109.2 508h0M1164.1 500.1h0M1160.8 501h0M1157.5 501.9h0M1154.1 502.8h0M1150.8 503.7h0M1147.5 504.7h0M1144.1 505.7h0M1140.8 506.6h0M1137.4 507.6h0M1134.1 508.6h0M1130.7 509.6h0M1127.3 510.6h0M1124 511.6h0M1195 500.4h0M1191.8 501.3h0M1188.6 502.1h0M1185.5 503h0M1182.3 503.8h0M1179.1 504.7h0M1175.9 505.6h0M1172.7 506.5h0M1169.5 507.4h0M1166.3 508.3h0M1163.1 509.3h0M1159.9 510.2h0M1156.6 511.2h0M1153.4 512.1h0M1226.9 500.1h0M1223.9 500.9h0M1220.8 501.7h0M1217.8 502.5h0M1214.8 503.3h0M1211.7 504.1h0M1208.6 504.9h0M1205.6 505.7h0M1202.5 506.6h0M1199.4 507.4h0M1196.4 508.3h0M1193.3 509.1h0M1190.2 510h0M1187.1 510.9h0M1184 511.8h0M1180.9 512.7h0M1177.8 513.6h0M1252.8 500.1h0M1249.8 500.8h0M1246.9 501.6h0M1243.9 502.3h0M1241 503h0M1238 503.8h0M1235.1 504.6h0M1232.1 505.3h0M1226.2 506.9h0M1223.2 507.7h0M1220.2 508.5h0M1217.2 509.3h0M1214.3 510.1h0M1211.3 510.9h0M1208.3 511.8h0M1205.3 512.6h0M1202.3 513.5h0M1277.3 500.3h0M1274.4 501h0M1271.6 501.6h0M1268.7 502.3h0M1265.9 503h0M1263 503.7h0M1260.1 504.4h0M1257.3 505.1h0M1254.4 505.8h0M1251.5 506.6h0M1248.6 507.3h0M1245.8 508h0M1242.9 508.8h0M1240 509.6h0M1237.1 510.3h0M1234.2 511.1h0M1231.3 511.9h0M1228.4 512.7h0M1225.5 513.5h0M1303.8 500.3h0M1298.3 501.5h0M1295.5 502.1h0M1292.7 502.7h0M1289.9 503.4h0M1287.1 504h0M1284.4 504.7h0M1281.6 505.3h0M1278.8 506h0M1276 506.7h0M1273.2 507.4h0M1270.4 508.1h0M1267.6 508.8h0M1264.8 509.5h0M1262 510.2h0M1259.2 510.9h0M1256.4 511.6h0M1253.6 512.4h0M1250.8 513.1h0M1248 513.9h0M1245.2 514.6h0M1242.4 515.4h0M1304.7 505.7h0M1302 506.3h0M1299.3 507h0M1296.6 507.6h0M1293.9 508.2h0M1291.2 508.9h0M1288.4 509.5h0M1285.7 510.2h0M1283 510.9h0M1280.3 511.6h0" stroke="#9dee28" stroke-width="2.5" stroke-linecap="round" fill="none"/><path d="M1120.6 512.7h0M1117.2 513.7h0M1113.8 514.8h0M1110.4 515.8h0M1150.2 513.1h0M1146.9 514.1h0M1143.7 515h0M1140.4 516h0M1137.2 517.1h0M1133.9 518.1h0M1130.7 519.1h0M1127.4 520.2h0M1124.1 521.2h0M1120.8 522.3h0M1117.5 523.3h0M1114.2 524.4h0M1110.9 525.5h0M1174.7 514.5h0M1171.6 515.4h0M1168.5 516.4h0M1165.4 517.3h0M1162.3 518.3h0M1159.1 519.2h0M1156 520.2h0M1152.9 521.2h0M1146.6 523.2h0M1143.4 524.2h0M1140.3 525.3h0M1137.1 526.3h0M1134 527.4h0M1127.6 529.5h0M1124.4 530.6h0M1121.3 531.7h0M1196.3 515.2h0M1193.3 516.1h0M1190.3 517h0M1187.3 517.9h0M1184.3 518.8h0M1181.3 519.7h0M1178.2 520.6h0M1175.2 521.6h0M1172.2 522.5h0M1169.1 523.5h0M1166.1 524.5h0M1163.1 525.4h0M1160 526.4h0M1157 527.4h0M1153.9 528.4h0M1150.8 529.4h0M1147.8 530.5h0M1144.7 531.5h0M1216.8 516h0M1213.9 516.8h0M1211 517.6h0M1208.1 518.5h0M1205.1 519.4h0M1202.2 520.2h0M1199.3 521.1h0M1193.4 522.9h0M1190.5 523.8h0M1187.5 524.7h0M1184.6 525.7h0M1181.7 526.6h0M1178.7 527.6h0M1175.8 528.5h0M1172.8 529.5h0M1169.9 530.5h0M1166.9 531.5h0M1239.5 516.2h0M1236.7 517h0M1233.9 517.8h0M1231.1 518.6h0M1228.3 519.4h0M1225.4 520.2h0M1222.6 521h0M1219.8 521.9h0M1216.9 522.7h0M1214.1 523.6h0M1211.2 524.4h0M1208.4 525.3h0M1205.6 526.2h0M1202.7 527.1h0M1199.9 528h0M1197 528.9h0M1194.1 529.8h0M1191.3 530.8h0M1188.4 531.7h0M1185.6 532.6h0M1329 500.5h0M1326.3 501h0M1323.7 501.6h0M1321 502.2h0M1318.2 502.7h0M1315.5 503.3h0M1310.1 504.5h0M1307.4 505.1h0M1277.5 512.2h0M1274.8 512.9h0M1272.1 513.6h0M1269.4 514.3h0M1263.9 515.8h0M1261.2 516.5h0M1258.4 517.3h0M1255.7 518h0M1252.9 518.8h0M1250.2 519.5h0M1247.5 520.3h0M1244.7 521.1h0M1242 521.9h0M1239.2 522.7h0M1236.5 523.5h0M1230.9 525.1h0M1228.2 525.9h0M1225.4 526.8h0M1222.7 527.6h0M1219.9 528.5h0M1217.1 529.3h0M1214.4 530.2h0M1208.8 532h0M1206.1 532.9h0M1203.3 533.8h0M1329.2 510.3h0M1326.6 510.9h0M1324 511.5h0M1321.4 512.1h0M1318.9 512.7h0M1313.7 513.9h0M1311.1 514.5h0M1308.5 515.1h0M1305.9 515.8h0M1303.3 516.4h0M1300.7 517.1h0M1298.1 517.7h0M1295.5 518.4h0M1292.9 519h0M1290.3 519.7h0M1285.1 521.1h0M1282.4 521.8h0M1279.8 522.5h0M1277.2 523.2h0M1274.6 523.9h0M1272 524.6h0M1266.8 526.1h0M1264.2 526.9h0M1261.5 527.6h0M1253.7 529.9h0M1251.1 530.7h0M1248.5 531.5h0" stroke="#79ec37" stroke-width="2.5" stroke-linecap="round" fill="none"/><path d="M1111.7 535h0M1141.6 532.6h0M1138.6 533.6h0M1135.5 534.7h0M1132.4 535.8h0M1129.3 536.9h0M1126.2 538h0M1123.1 539.1h0M1120 540.2h0M1116.9 541.3h0M1110.7 543.6h0M1163.9 532.4h0M1161 533.5h0M1158 534.5h0M1155 535.5h0M1149.1 537.6h0M1146.1 538.6h0M1143.1 539.7h0M1140.1 540.8h0M1137.1 541.9h0M1134.1 543h0M1131.1 544.1h0M1128.1 545.2h0M1125.1 546.3h0M1122.1 547.5h0M1119 548.6h0M1116 549.8h0M1113 551h0M1182.7 533.6h0M1179.8 534.6h0M1177 535.5h0M1174.1 536.5h0M1171.2 537.5h0M1168.3 538.5h0M1165.4 539.5h0M1162.6 540.6h0M1159.7 541.6h0M1156.8 542.6h0M1148.1 545.8h0M1145.2 546.9h0M1142.3 548h0M1139.4 549.1h0M1200.5 534.7h0M1197.7 535.6h0M1194.9 536.6h0M1192.2 537.5h0M1189.4 538.5h0M1186.6 539.4h0M1183.8 540.4h0M1181 541.4h0M1178.2 542.4h0M1175.4 543.4h0M1172.6 544.4h0M1169.8 545.4h0M1167 546.5h0M1164.2 547.5h0M1161.4 548.6h0M1337 508.7h0M1334.4 509.2h0M1245.8 532.3h0M1243.2 533.2h0M1240.6 534h0M1238 534.8h0M1235.3 535.7h0M1232.7 536.5h0M1230.1 537.4h0M1227.4 538.2h0M1224.8 539.1h0M1222.2 540h0M1216.9 541.8h0M1214.3 542.7h0M1211.6 543.6h0M1209 544.5h0M1203.7 546.4h0M1201.1 547.4h0M1198.4 548.3h0M1340.1 517.9h0M1337.6 518.4h0M1335.1 519h0M1332.6 519.6h0M1330.2 520.2h0M1327.7 520.8h0M1325.2 521.4h0M1322.7 522h0M1320.2 522.6h0M1317.7 523.2h0M1315.3 523.8h0M1312.8 524.5h0M1310.3 525.1h0M1307.8 525.8h0M1305.3 526.4h0M1302.8 527.1h0M1300.3 527.8h0M1297.9 528.4h0M1295.4 529.1h0M1292.9 529.8h0M1290.4 530.5h0M1287.9 531.2h0M1285.4 531.9h0M1282.9 532.6h0M1280.4 533.4h0M1277.9 534.1h0M1275.4 534.9h0M1273 535.6h0M1268 537.1h0M1265.5 537.9h0M1263 538.7h0M1260.5 539.5h0M1258 540.3h0M1255.5 541.1h0M1253 541.9h0M1250.5 542.7h0M1248 543.5h0M1245.5 544.4h0M1243 545.2h0M1240.5 546.1h0" stroke="#55e946" stroke-width="2.5" stroke-linecap="round" fill="none"/><path d="M1110 552.2h0M1133.5 551.4h0M1130.6 552.5h0M1127.7 553.7h0M1124.8 554.8h0M1121.9 556h0M1118.9 557.2h0M1116 558.4h0M1113.1 559.6h0M1110.1 560.8h0M1158.6 549.6h0M1155.8 550.7h0M1153 551.8h0M1150.2 552.9h0M1147.3 554h0M1144.5 555.1h0M1141.7 556.2h0M1138.9 557.3h0M1136.1 558.5h0M1133.2 559.7h0M1130.4 560.8h0M1127.6 562h0M1124.7 563.2h0M1121.9 564.4h0M1119.1 565.6h0M1116.2 566.8h0M1113.4 568.1h0M1195.8 549.3h0M1193.2 550.3h0M1190.5 551.3h0M1187.9 552.3h0M1185.2 553.3h0M1182.6 554.3h0M1179.9 555.3h0M1177.3 556.3h0M1174.6 557.4h0M1172 558.4h0M1169.3 559.5h0M1166.6 560.6h0M1164 561.7h0M1161.3 562.8h0M1158.7 563.9h0M1156 565h0M1345 516.8h0M1342.6 517.3h0M1238 547h0M1235.5 547.8h0M1233 548.7h0M1230.5 549.6h0M1228.1 550.5h0M1225.6 551.4h0M1223.1 552.3h0M1220.6 553.2h0M1218.1 554.2h0M1215.6 555.1h0M1213.1 556h0M1208.1 558h0M1205.6 558.9h0M1203.1 559.9h0M1200.6 560.9h0M1198.1 561.9h0M1354 523.1h0M1351.6 523.7h0M1349.2 524.2h0M1346.8 524.8h0M1344.5 525.4h0M1342.1 525.9h0M1339.7 526.5h0M1337.3 527.1h0M1334.9 527.7h0M1332.5 528.3h0M1330.1 528.9h0M1327.7 529.5h0M1325.3 530.1h0M1323 530.7h0M1320.6 531.4h0M1318.2 532h0M1315.8 532.6h0M1313.4 533.3h0M1311 534h0M1308.6 534.6h0M1306.2 535.3h0M1303.8 536h0M1301.5 536.7h0M1299.1 537.4h0M1296.7 538.1h0M1294.3 538.8h0M1291.9 539.5h0M1289.5 540.2h0M1287.1 540.9h0M1284.7 541.7h0M1282.4 542.4h0M1280 543.2h0M1277.6 543.9h0M1275.2 544.7h0M1272.8 545.5h0M1270.4 546.3h0M1268 547h0M1263.3 548.7h0M1260.9 549.5h0M1256.1 551.1h0M1253.7 552h0M1251.3 552.8h0M1249 553.7h0M1246.6 554.5h0M1244.2 555.4h0M1241.8 556.3h0M1239.4 557.2h0M1237 558h0M1234.7 558.9h0M1232.3 559.9h0M1312.6 542.9h0M1310.4 543.6h0M1308.1 544.2h0M1305.8 544.9h0M1303.5 545.6h0M1301.2 546.4h0M1296.6 547.8h0M1294.4 548.5h0M1292.1 549.3h0M1289.8 550h0M1287.5 550.8h0M1285.2 551.5h0M1283 552.3h0M1276.1 554.6h0M1273.8 555.4h0M1271.6 556.2h0M1269.3 557h0M1267 557.9h0M1264.7 558.7h0" stroke="#3ce85e" stroke-width="2.5" stroke-linecap="round" fill="none"/><path d="M1113.1 601.9h0M1110.7 603.2h0" stroke="#2de9a6" stroke-width="3.0" stroke-linecap="round" fill="none"/><path d="M1142.3 601.2h0M1140 602.5h0M1137.6 603.8h0M1135.3 605.1h0M1133 606.4h0M1130.6 607.7h0M1128.3 609.1h0M1126 610.4h0M1123.6 611.8h0M1121.3 613.1h0M1119 614.5h0M1116.7 615.9h0M1114.3 617.3h0M1112 618.7h0M1109.7 620.1h0M1170.4 601h0M1168.2 602.2h0M1166 603.4h0M1163.7 604.6h0M1161.5 605.9h0M1159.3 607.1h0M1157.1 608.4h0M1155 609.6h0M1152.8 610.9h0M1150.6 612.2h0M1146.2 614.8h0M1144 616.1h0M1141.8 617.4h0M1193.7 600.2h0M1191.5 601.4h0M1187.3 603.7h0M1185.2 604.8h0M1183.1 606h0M1181 607.2h0M1178.9 608.4h0M1176.8 609.6h0M1174.7 610.8h0M1172.7 612h0M1214.1 600.9h0M1212.1 602h0M1210.1 603.1h0M1208.1 604.2h0M1206.1 605.3h0M1204.1 606.4h0M1202.1 607.5h0M1200.1 608.7h0M1235.8 600.7h0M1233.9 601.8h0M1231.9 602.8h0" stroke="#26e8c5" stroke-width="3.0" stroke-linecap="round" fill="none"/><path d="M1137.5 620.1h0M1135.3 621.5h0M1133.2 622.8h0M1131 624.2h0M1128.8 625.6h0M1126.7 627h0M1124.5 628.4h0M1122.4 629.8h0M1118.1 632.7h0M1116 634.2h0M1113.8 635.6h0M1111.7 637.1h0M1109.6 638.6h0M1170.6 613.2h0M1168.5 614.5h0M1166.4 615.7h0M1162.3 618.3h0M1160.2 619.5h0M1158.2 620.8h0M1154 623.4h0M1152 624.8h0M1149.9 626.1h0M1147.9 627.4h0M1145.9 628.8h0M1143.8 630.1h0M1141.8 631.5h0M1139.8 632.9h0M1137.8 634.3h0M1135.7 635.7h0M1133.7 637.1h0M1131.7 638.5h0M1129.7 640h0M1198.1 609.8h0M1196.1 610.9h0M1194.1 612.1h0M1192.1 613.3h0M1190.1 614.5h0M1188.2 615.6h0M1186.2 616.8h0M1184.2 618.1h0M1182.3 619.3h0M1180.3 620.5h0M1178.3 621.7h0M1176.4 623h0M1174.4 624.2h0M1172.5 625.5h0M1168.6 628.1h0M1230 603.8h0M1228.1 604.9h0M1226.2 605.9h0M1224.3 607h0M1222.4 608.1h0M1220.5 609.1h0M1218.6 610.2h0M1216.7 611.3h0M1212.9 613.6h0M1211 614.7h0M1209.1 615.8h0M1207.2 616.9h0M1205.3 618.1h0M1203.5 619.2h0M1201.6 620.4h0M1199.7 621.6h0M1197.9 622.8h0M1252.8 602.8h0M1250.9 603.8h0M1249.1 604.7h0M1247.3 605.7h0M1245.4 606.7h0M1243.6 607.8h0M1241.8 608.8h0M1239.9 609.8h0M1238.1 610.8h0M1236.3 611.9h0M1234.5 612.9h0M1232.7 614h0M1230.9 615.1h0M1229.1 616.1h0M1273.8 600.4h0M1272 601.3h0M1270.2 602.2h0M1268.5 603.1h0M1266.7 604.1h0M1264.9 605h0M1263.1 606h0M1261.3 606.9h0M1257.8 608.9h0M1256.1 609.9h0M1254.3 610.9h0M1290.5 600.1h0M1288.8 601h0M1287.1 601.9h0M1285.3 602.7h0" stroke="#1fe2d8" stroke-width="3.0" stroke-linecap="round" fill="none"/><path d="M1127.7 641.4h0M1125.7 642.9h0M1123.7 644.4h0M1121.8 645.8h0M1119.8 647.3h0M1117.8 648.8h0M1115.8 650.3h0M1113.9 651.9h0M1111.9 653.4h0M1110 655h0M1166.7 629.3h0M1164.8 630.7h0M1162.8 632h0M1160.9 633.3h0M1159 634.6h0M1157.1 636h0M1155.2 637.3h0M1153.3 638.7h0M1151.4 640.1h0M1149.5 641.4h0M1147.6 642.8h0M1145.8 644.2h0M1143.9 645.6h0M1142 647.1h0M1140.2 648.5h0M1138.3 650h0M1136.5 651.4h0M1134.6 652.9h0M1132.8 654.4h0M1131 655.8h0M1129.1 657.3h0M1127.3 658.9h0M1125.5 660.4h0M1123.7 661.9h0M1120.1 665h0M1196 624h0M1194.2 625.2h0M1190.5 627.6h0M1188.7 628.8h0M1186.8 630.1h0M1185 631.3h0M1183.2 632.6h0M1181.4 633.8h0M1179.6 635.1h0M1177.8 636.4h0M1174.2 639h0M1172.4 640.3h0M1170.6 641.6h0M1168.8 642.9h0M1167 644.3h0M1165.3 645.6h0M1227.3 617.2h0M1225.5 618.3h0M1223.7 619.4h0M1222 620.5h0M1220.2 621.6h0M1218.4 622.8h0M1216.6 623.9h0M1214.9 625h0M1213.1 626.2h0M1211.4 627.3h0M1209.6 628.5h0M1207.9 629.7h0M1206.1 630.9h0M1204.4 632.1h0M1202.7 633.3h0M1201 634.5h0M1252.5 611.8h0M1250.8 612.9h0M1247.3 614.9h0M1245.6 615.9h0M1243.8 617h0M1242.1 618h0M1240.4 619h0M1238.7 620.1h0M1237 621.2h0M1235.3 622.2h0M1233.6 623.3h0M1231.9 624.4h0M1230.2 625.5h0M1228.5 626.6h0M1226.8 627.7h0M1225.1 628.9h0M1223.4 630h0M1283.6 603.6h0M1281.9 604.5h0M1280.1 605.4h0M1278.4 606.3h0M1276.7 607.3h0M1275 608.2h0M1273.3 609.1h0M1271.6 610.1h0M1269.9 611h0M1268.2 612h0M1266.5 612.9h0M1264.8 613.9h0M1263.1 614.9h0M1261.5 615.9h0M1258.1 617.8h0M1256.5 618.8h0M1254.8 619.9h0M1253.1 620.9h0M1251.5 621.9h0M1249.8 622.9h0M1248.2 624h0M1246.6 625h0M1304.6 600.7h0M1302.9 601.6h0M1301.2 602.4h0M1299.5 603.3h0M1297.8 604.1h0M1296.1 605h0M1294.5 605.8h0M1292.8 606.7h0M1291.1 607.6h0M1289.5 608.5h0M1287.8 609.4h0" stroke="#18dceb" stroke-width="3.0" stroke-linecap="round" fill="none"/><path d="M1118.3 666.6h0M1116.5 668.1h0M1114.8 669.7h0M1113 671.3h0M1111.3 672.9h0M1109.5 674.6h0M1163.5 647h0M1161.8 648.4h0M1160 649.7h0M1158.3 651.1h0M1156.5 652.5h0M1154.8 653.9h0M1153.1 655.4h0M1151.4 656.8h0M1149.7 658.2h0M1148 659.7h0M1146.3 661.1h0M1144.6 662.6h0M1142.9 664.1h0M1141.2 665.6h0M1139.5 667.1h0M1137.9 668.6h0M1136.2 670.1h0M1134.6 671.7h0M1132.9 673.2h0M1131.3 674.7h0M1129.7 676.3h0M1128.1 677.9h0M1124.9 681.1h0M1123.3 682.7h0M1121.7 684.3h0M1118.6 687.6h0M1199.3 635.7h0M1197.5 636.9h0M1195.8 638.1h0M1194.1 639.4h0M1192.4 640.6h0M1190.8 641.9h0M1189.1 643.2h0M1187.4 644.5h0M1185.7 645.8h0M1184.1 647.1h0M1182.4 648.4h0M1180.8 649.7h0M1179.1 651h0M1175.9 653.7h0M1174.2 655h0M1172.6 656.4h0M1171 657.8h0M1169.4 659.2h0M1166.2 661.9h0M1164.6 663.4h0M1221.8 631.1h0M1220.1 632.3h0M1218.5 633.4h0M1216.8 634.6h0M1215.2 635.8h0M1213.5 637h0M1210.2 639.3h0M1208.6 640.5h0M1205.4 643h0M1203.8 644.2h0M1202.2 645.5h0M1200.6 646.7h0M1199 648h0M1197.4 649.2h0M1244.9 626.1h0M1243.3 627.2h0M1240.1 629.3h0" stroke="#16d3f1" stroke-width="3.0" stroke-linecap="round" fill="none"/><path d="M1115.5 690.9h0M1113.9 692.6h0M1112.4 694.2h0M1110.9 695.9h0M1109.4 697.6h0M1163 664.8h0M1161.5 666.2h0M1159.9 667.6h0M1158.4 669.1h0M1156.8 670.6h0M1155.3 672h0M1153.8 673.5h0M1152.2 675h0M1150.7 676.5h0M1149.2 678h0M1147.7 679.5h0M1146.2 681h0M1144.8 682.6h0M1143.3 684.1h0M1141.8 685.7h0M1140.4 687.3h0M1138.9 688.8h0M1195.9 650.5h0M1194.3 651.8h0M1192.7 653.1h0M1191.2 654.4h0M1189.6 655.7h0" stroke="#15c9f5" stroke-width="3.0" stroke-linecap="round" fill="none"/><path d="M1481 91.5h0M1481 113h0M1273 187h0M1273 195h0M1274 204h0M1274 213h0M1275 221h0M1171 237h0M1224 235.5h0M1230 235h0M1243 235.5h0M1170 261h0M1186 261h0M1210 261h0M1180 275h0M1190 275h0M1199 275h0M1284 267h0M1308 267h0M1446 252h0M1452 252h0M1458 252h0M1504 230h0M1504 241h0M1504 252h0M1558 229h0M1565 239h0M1572 239h0M1704 228.6h0M1742 263h0M1794 265.6h0M1898 242.5h0M1899 303h0M1562 227h0M1562 238h0M1226 234h0M1239 234h0M1187 272.6h0M1196 272.6h0" stroke="#a83232" stroke-width="1.4" stroke-linecap="round"/><defs><linearGradient id="ax" gradientUnits="userSpaceOnUse" x1="1625.4" y1="549.4" x2="1298.9" y2="374.7"><stop offset="0" stop-color="#ff0000"/><stop offset="1" stop-color="#ff9900"/></linearGradient><linearGradient id="ay" gradientUnits="userSpaceOnUse" x1="1625.4" y1="549.4" x2="257.9" y2="918.7"><stop offset="0" stop-color="#00ff00"/><stop offset="1" stop-color="#99ff00"/></linearGradient><linearGradient id="az" gradientUnits="userSpaceOnUse" x1="1625.4" y1="549.4" x2="1643" y2="78"><stop offset="0" stop-color="#0010ff"/><stop offset="1" stop-color="#1a88f0"/></linearGradient></defs><path d="M1625.4 549.4L1298.9 374.7" stroke="url(#ax)" stroke-width="1.3"/><path d="M1625.4 549.4L257.9 918.7" stroke="url(#ay)" stroke-width="1.3"/><path d="M1625.4 549.4L1643.2 78" stroke="url(#az)" stroke-width="2"/><path d="M1545,570 L1551,563 L1575,558 L1600,553 L1626,549 L1633,552 L1629,558 L1604,562 L1584,567 L1576,574 L1554,581 L1546,577 Z" fill="#0a4cff"/><rect x="1595" y="559" width="5" height="4" fill="#0018c8"/><path d="M1455.5 462.1L1471.7 470.2L1471.7 569.6L1456.2 559.3ZM1471.7 470.2L1511.4 462.1L1511.4 560L1471.7 569.6ZM1455.5 462.1L1495.2 454.7L1511.4 462.1L1471.7 470.2Z" fill="#e8e030" fill-opacity="0.22"/><path d="M1471.7,463.6 C1476,462.5 1481,462.6 1484.2,464.3 L1485,475.4 L1487.1,475.4 C1493,480 1498,484 1498.9,488.6 L1501.9,503.3 L1500.4,522.5 L1497.4,535.7 L1496,554.9 L1494.5,560.8 L1485,561 L1483,552 L1481,552 L1479,563 L1469.5,562 L1467.2,543.1 L1463.6,522.5 L1459.1,513.6 L1458.4,501.9 C1459,492 1460,486 1462.1,482.7 L1469.5,473.9 Z" fill="#3fe0c2"/><circle cx="1490" cy="516.6" r="5.5" fill="#1cb2f2"/><path d="M1459,498 C1458,505 1459,512 1461,515 L1463,500 Z" fill="#26c4ea"/><path d="M1455.5 462.1L1495.2 454.7L1511.4 462.1L1471.7 470.2ZM1456.2 559.3L1495.2 552L1511.4 560L1471.7 569.6ZM1455.5 462.1L1456.2 559.3M1471.7 470.2L1471.7 569.6M1511.4 462.1L1511.4 560M1495.2 454.7L1495.2 552" stroke="#ffff00" stroke-width="2.2" fill="none" stroke-linejoin="round"/></svg>
<div id="shadowL" class="abs"></div>
<svg class="abs" style="left:1081.1px;top:52.4px" width="21.6" height="21.6" viewBox="0 0 24 24" preserveAspectRatio="none"><path fill="#1a1a1a" d="M19.14 12.94c.04-.3.06-.61.06-.94 0-.32-.02-.64-.07-.94l2.03-1.58c.18-.14.23-.41.12-.61l-1.92-3.32c-.12-.22-.37-.29-.59-.22l-2.39.96c-.5-.38-1.03-.7-1.62-.94l-.36-2.54c-.04-.24-.24-.41-.48-.41h-3.84c-.24 0-.43.17-.47.41l-.36 2.54c-.59.24-1.13.57-1.62.94l-2.39-.96c-.22-.08-.47 0-.59.22L2.74 8.87c-.12.21-.08.47.12.61l2.03 1.58c-.05.3-.09.63-.09.94s.02.64.07.94l-2.03 1.58c-.18.14-.23.41-.12.61l1.92 3.32c.12.22.37.29.59.22l2.39-.96c.5.38 1.03.7 1.62.94l.36 2.54c.05.24.24.41.48.41h3.84c.24 0 .44-.17.47-.41l.36-2.54c.59-.24 1.13-.56 1.62-.94l2.39.96c.22.08.47 0 .59-.22l1.92-3.32c.12-.22.07-.47-.12-.61l-2.01-1.58zM12 15.6c-1.98 0-3.6-1.62-3.6-3.6s1.62-3.6 3.6-3.6 3.6 1.62 3.6 3.6-1.62 3.6-3.6 3.6z"/></svg>
<svg class="abs" style="left:1867px;top:52.1px" width="21.6" height="21.6" viewBox="0 0 24 24" preserveAspectRatio="none"><path fill="#1a1a1a" d="M19.14 12.94c.04-.3.06-.61.06-.94 0-.32-.02-.64-.07-.94l2.03-1.58c.18-.14.23-.41.12-.61l-1.92-3.32c-.12-.22-.37-.29-.59-.22l-2.39.96c-.5-.38-1.03-.7-1.62-.94l-.36-2.54c-.04-.24-.24-.41-.48-.41h-3.84c-.24 0-.43.17-.47.41l-.36 2.54c-.59.24-1.13.57-1.62.94l-2.39-.96c-.22-.08-.47 0-.59.22L2.74 8.87c-.12.21-.08.47.12.61l2.03 1.58c-.05.3-.09.63-.09.94s.02.64.07.94l-2.03 1.58c-.18.14-.23.41-.12.61l1.92 3.32c.12.22.37.29.59.22l2.39-.96c.5.38 1.03.7 1.62.94l.36 2.54c.05.24.24.41.48.41h3.84c.24 0 .44-.17.47-.41l.36-2.54c.59-.24 1.13-.56 1.62-.94l2.39.96c.22.08.47 0 .59-.22l1.92-3.32c.12-.22.07-.47-.12-.61l-2.01-1.58zM12 15.6c-1.98 0-3.6-1.62-3.6-3.6s1.62-3.6 3.6-3.6 3.6 1.62 3.6 3.6-1.62 3.6-3.6 3.6z"/></svg>
<svg class="abs" style="left:1894px;top:53px" width="19.9" height="19.9" viewBox="0 0 24 24" preserveAspectRatio="none"><path fill="#1a1a1a" d="M19 6.41L17.59 5 12 10.59 6.41 5 5 6.41 10.59 12 5 17.59 6.41 19 12 13.41 17.59 19 19 17.59 13.41 12z"/></svg>
<div class="abs" style="left:910px;top:86px;width:191px;height:40px;background:#fcfcfe;border-radius:5px;box-shadow:0 1px 5px rgba(0,0,0,.35)"></div>
<svg class="abs" style="left:910px;top:86px" width="191" height="40" viewBox="910 86 191 40">
<circle cx="942.2" cy="105.8" r="7.8" fill="none" stroke="#1e1e1e" stroke-width="1.7"/>
<path d="M942.2 100.3v4" stroke="#1e1e1e" stroke-width="1.8"/>
<path d="M938.7 103.3h7l-3.5 3.6z" fill="#1e1e1e"/>
<path d="M937.6 109.6h9.2" stroke="#1e1e1e" stroke-width="1.5"/>
<path d="M966.7 95v21.5" stroke="#8a8a8a" stroke-width="1.2"/>
<circle cx="1030.4" cy="103.6" r="6.9" fill="none" stroke="#1e1e1e" stroke-width="1.6"/>
<path d="M1021.4 113.2l4.3-4.2" stroke="#1e1e1e" stroke-width="1.8"/>
<path d="M1026.8 102.3v-2.3h2.3M1031.7 100h2.3v2.3M1034 104.9v2.3h-2.3M1029.1 107.2h-2.3v-2.3" fill="none" stroke="#1e1e1e" stroke-width="1.3"/>
<circle cx="1072.2" cy="104.5" r="6.9" fill="none" stroke="#a0a0a0" stroke-width="1.5"/>
<path d="M1067.8 102.8h8.8M1067.8 107h8.8" stroke="#a0a0a0" stroke-width="1.6"/>
<path d="M1062.7 114l3.9-3.9" stroke="#a0a0a0" stroke-width="1.6"/>
</svg>
<div class="abs" style="left:976.5px;top:97px;font-size:16px;line-height:18px;color:#262626;letter-spacing:-0.5px;white-space:nowrap">42%</div>
<div class="abs" style="left:1724px;top:86px;width:188px;height:40px;background:#e5e5e7;border-radius:6px;box-shadow:0 0 6px 1px rgba(255,255,255,.25)"></div>
<div class="abs" style="left:1823px;top:91px;width:36px;height:30px;background:#d5d5d9;border-radius:7px"></div>
<svg class="abs" style="left:1724px;top:86px" width="188" height="40" viewBox="1724 86 188 40">
<rect x="1747.1" y="99.1" width="13.9" height="13.6" rx="1.5" fill="none" stroke="#17284a" stroke-width="1.8"/>
<g fill="#17284a"><circle cx="1753.9" cy="102.2" r="0.9"/><circle cx="1750.4" cy="105.9" r="0.9"/><circle cx="1753.9" cy="105.9" r="0.7"/><circle cx="1757.5" cy="105.9" r="0.9"/><circle cx="1753.9" cy="109.6" r="0.9"/></g>
<path d="M1787 98.4h16" stroke="#17284a" stroke-width="1.6"/>
<g fill="#17284a"><circle cx="1787.5" cy="102.3" r="0.85"/><circle cx="1794.7" cy="102.3" r="0.85"/><circle cx="1802" cy="102.3" r="0.85"/><circle cx="1787.5" cy="105.9" r="0.85"/><circle cx="1791.1" cy="105.9" r="0.85"/><circle cx="1794.7" cy="105.9" r="0.85"/><circle cx="1798.3" cy="105.9" r="0.85"/><circle cx="1802" cy="105.9" r="0.85"/><circle cx="1787.5" cy="109.6" r="0.85"/><circle cx="1794.7" cy="109.6" r="0.85"/><circle cx="1802" cy="109.6" r="0.85"/><circle cx="1787.5" cy="113.3" r="0.85"/><circle cx="1791.1" cy="113.3" r="0.85"/><circle cx="1794.7" cy="113.3" r="0.85"/><circle cx="1798.3" cy="113.3" r="0.85"/><circle cx="1802" cy="113.3" r="0.85"/></g>
<path d="M1817.5 95.4v21" stroke="#7a7a7a" stroke-width="1.1"/>
<path d="M1832.9 104.6L1846.3 98.3L1849.6 98.3L1848 106.7L1842.9 113.3L1832.9 113.3Z" fill="#aba5da" stroke="#2a1a9a" stroke-width="1.5" stroke-linejoin="round"/>
<path d="M1832.9 104.6H1842.9V113.3M1842.9 104.6L1849.6 98.3" fill="none" stroke="#2a1a9a" stroke-width="1.5"/>
<path d="M1882 98.7L1889.6 102.5V110.8L1882 113.8L1874.6 110.8V102.5Z" fill="#d9d9db" stroke="#151515" stroke-width="1.6" stroke-linejoin="round"/>
<path d="M1874.6 102.5L1882 106.3L1889.6 102.5M1882 106.3V113.8" fill="none" stroke="#151515" stroke-width="1.5"/>
</svg>
<div id="foot" class="abs">
<div class="abs" style="left:8px;top:8px;width:1603px;height:4px;border-radius:2px;background:#858585"></div>
<div class="abs" style="left:8px;top:8px;width:535px;height:4px;border-radius:2px 0 0 2px;background:#220e88"></div>
<div class="abs" style="left:8px;top:36px;font-size:17px;color:#333;white-space:nowrap">71 / 211</div>
</div>
<svg class="abs" style="left:1065.5px;top:914.9px" width="24" height="24" viewBox="0 0 24 24" preserveAspectRatio="none"><path fill="#1e1e24" d="M6 6h2v12H6zm3.5 6l8.5 6V6z"/></svg>
<svg class="abs" style="left:1095px;top:911.1px" width="31.7" height="31.7" viewBox="0 0 24 24" preserveAspectRatio="none"><path fill="#1e1e24" d="M8 5v14l11-7z"/></svg>
<svg class="abs" style="left:1132px;top:914.9px" width="24" height="24" viewBox="0 0 24 24" preserveAspectRatio="none"><path fill="#1e1e24" d="M6 18l8.5-6L6 6v12zM16 6v12h2V6h-2z"/></svg>
<svg class="abs" style="left:1887px;top:915px" width="25" height="24" viewBox="0 0 25 24"><circle cx="12.5" cy="12" r="10" fill="none" stroke="#1c2541" stroke-width="2" stroke-dasharray="9 2.5 3 2.5"/><path d="M10 7.5v9l7-4.5z" fill="#1c2541"/></svg>
</body></html>
